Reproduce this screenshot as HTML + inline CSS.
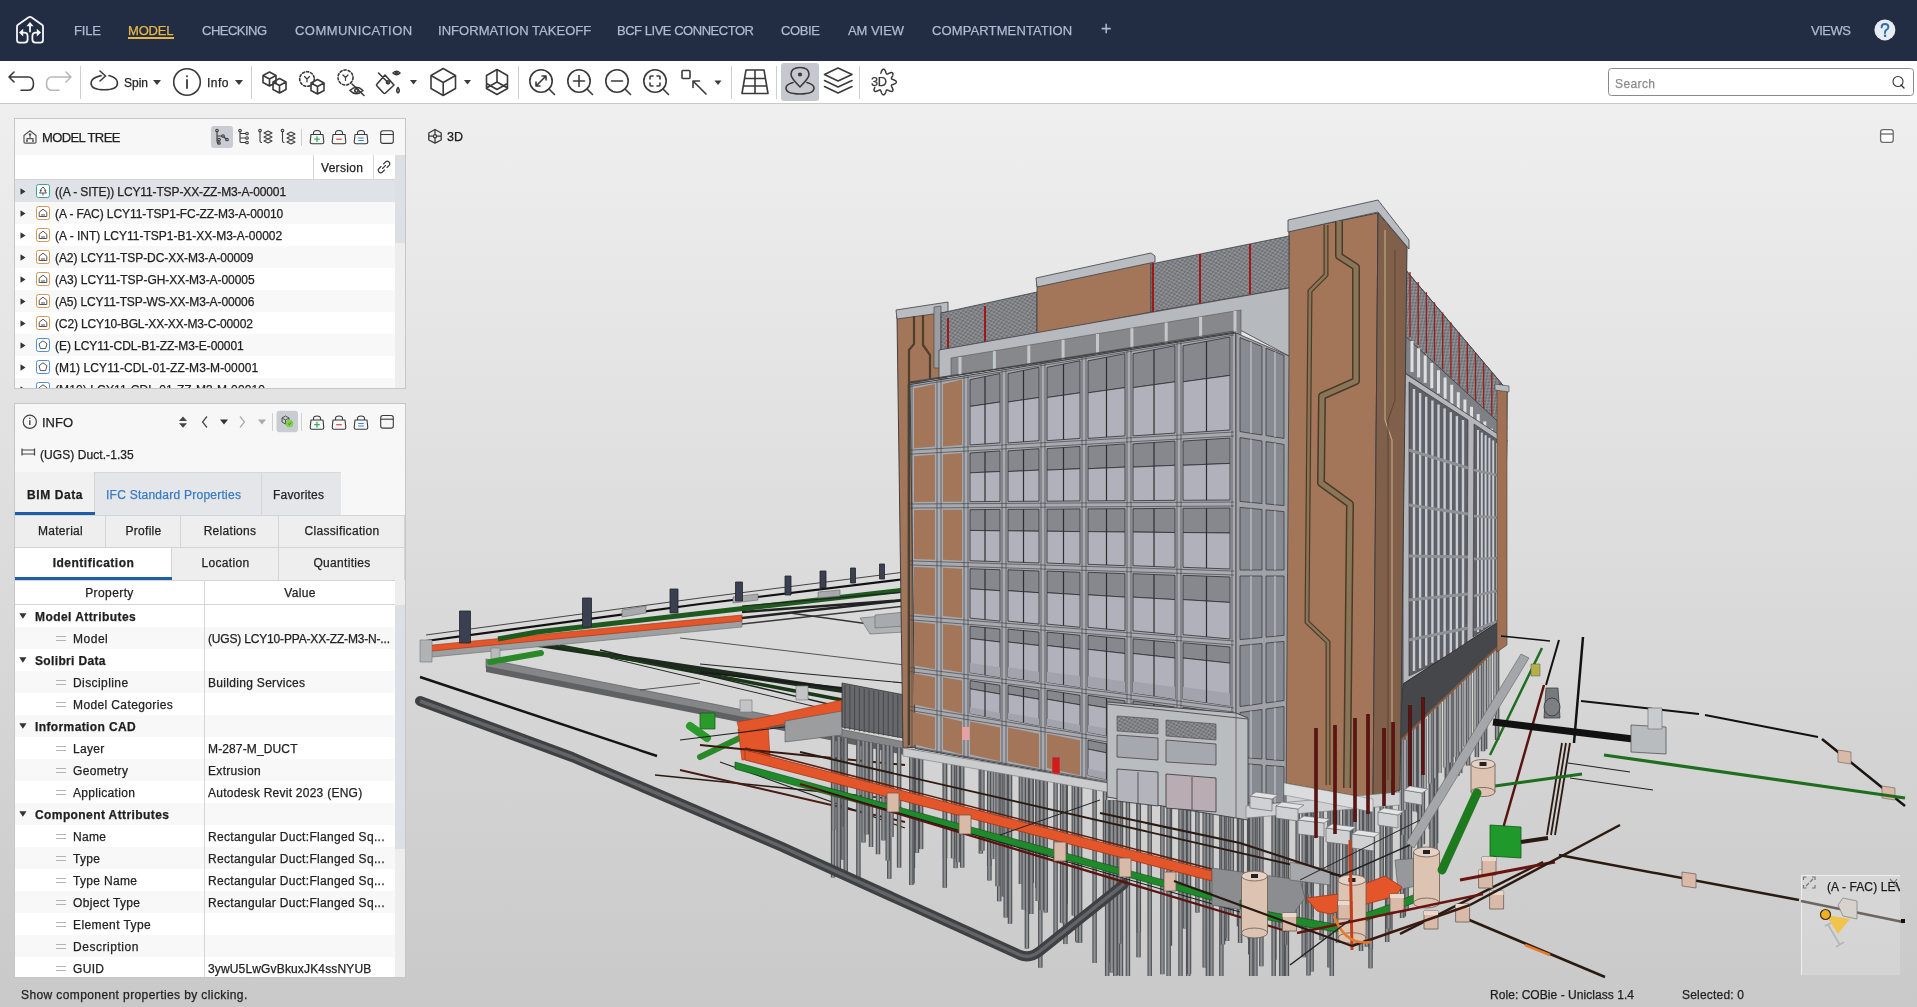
<!DOCTYPE html>
<html><head><meta charset="utf-8">
<style>
*{margin:0;padding:0;box-sizing:border-box}
html,body{width:1917px;height:1007px;overflow:hidden}
body{position:relative;font-family:"Liberation Sans",sans-serif;color:#222;background:linear-gradient(#efefef 104px,#cacaca 984px,#c9c9c9 1007px)}
.a{position:absolute}
.t{position:absolute;white-space:pre;line-height:1}
#top{left:0;top:0;width:1917px;height:61px;background:#222c42}
.nav{position:absolute;top:24px;font-size:13px;color:#aebbd1;white-space:pre;line-height:1}
#tb{left:0;top:61px;width:1917px;height:43px;background:#fff;border-bottom:1px solid #c9c9c9}
.sep{position:absolute;width:1px;background:#cfcfcf}
svg{position:absolute;overflow:visible}
.ic{fill:none;stroke:#3a3a3a;stroke-width:1.6;stroke-linecap:round;stroke-linejoin:round}
.panel{position:absolute;background:#f7f7f7;border:1px solid #c6c6c6}
.row{position:absolute;left:1px;height:22px;width:380px}
.rt{position:absolute;font-size:12px;white-space:pre;line-height:1;color:#222}
.t,.nav,.rt,svg{will-change:transform}
.t,.nav,.rt{-webkit-text-stroke:0.25px currentColor}
</style></head><body>
<div id="scene" class="a" style="left:0;top:0;width:1917px;height:1007px"><svg style="left:0;top:0" width="1917" height="1007" viewBox="0 0 1917 1007"><defs><pattern id="louv" width="5" height="4" patternUnits="userSpaceOnUse" patternTransform="rotate(-12)"><rect width="5" height="4" fill="#6c6e72"/><path d="M0 0 L5 4 M0 4 L5 0" stroke="#9a9ca0" stroke-width="0.9"/></pattern><pattern id="louvR" width="4" height="5" patternUnits="userSpaceOnUse" patternTransform="rotate(50)"><rect width="4" height="5" fill="#6c6e72"/><path d="M0 0 L4 5 M0 5 L4 0" stroke="#9a9ca0" stroke-width="0.9"/></pattern></defs><line x1="420.0" y1="677.0" x2="657.0" y2="756.0" stroke="#141414" stroke-width="2.4" stroke-linecap="butt" />
<polygon points="486.0,659.0 905.0,742.0 905.0,751.0 486.0,668.0" fill="#858688" stroke="#5e5f61" stroke-width="0.7" stroke-linejoin="round" />
<polygon points="486.0,666.0 905.0,749.0 905.0,755.0 486.0,672.0" fill="#606163" />
<line x1="515.0" y1="641.0" x2="905.0" y2="700.0" stroke="#1d2a1d" stroke-width="5" stroke-linecap="butt" />
<line x1="560.0" y1="646.0" x2="905.0" y2="712.0" stroke="#183818" stroke-width="3.5" stroke-linecap="butt" />
<line x1="600.0" y1="650.0" x2="905.0" y2="722.0" stroke="#222" stroke-width="1.5" stroke-linecap="butt" />
<line x1="610.0" y1="658.0" x2="905.0" y2="728.0" stroke="#2a2a2a" stroke-width="1" stroke-linecap="butt" />
<line x1="700.0" y1="664.0" x2="905.0" y2="683.0" stroke="#222" stroke-width="1.2" stroke-linecap="butt" />
<line x1="700.0" y1="672.0" x2="860.0" y2="690.0" stroke="#1a1a1a" stroke-width="2" stroke-linecap="butt" />
<line x1="640.0" y1="690.0" x2="700.0" y2="683.0" stroke="#333" stroke-width="0.8" stroke-linecap="butt" />
<line x1="680.0" y1="638.0" x2="905.0" y2="665.0" stroke="#333" stroke-width="0.8" stroke-linecap="butt" />
<polygon points="422.0,651.0 742.0,621.0 742.0,627.0 422.0,658.0" fill="#9d9fa1" stroke="#6a6b6d" stroke-width="0.6" stroke-linejoin="round" />
<polygon points="422.0,646.0 742.0,615.0 742.0,621.0 422.0,652.0" fill="#e4552a" stroke="#9c3518" stroke-width="0.6" stroke-linejoin="round" />
<line x1="742.0" y1="618.0" x2="905.0" y2="600.0" stroke="#222" stroke-width="2.5" stroke-linecap="butt" />
<line x1="742.0" y1="624.0" x2="905.0" y2="606.0" stroke="#3a3a3a" stroke-width="1.5" stroke-linecap="butt" />
<line x1="790.0" y1="613.0" x2="905.0" y2="629.0" stroke="#333" stroke-width="1.5" stroke-linecap="butt" />
<polygon points="860.0,618.0 905.0,614.0 905.0,632.0 870.0,634.0" fill="#b0b2b4" stroke="#666" stroke-width="0.6" stroke-linejoin="round" />
<path d="M498.0 639.0 L537.0 632.0 L730.0 610.0 L905.0 590.0" stroke="#1e5a1e" stroke-width="5" fill="none" stroke-linejoin="round" />
<path d="M426.0 641.0 L700.0 604.0 L905.0 579.0" stroke="#111" stroke-width="2.2" fill="none" stroke-linejoin="round" />
<path d="M426.0 635.0 L700.0 598.0 L905.0 572.0" stroke="#333" stroke-width="0.9" fill="none" stroke-linejoin="round" />
<line x1="742.0" y1="612.0" x2="905.0" y2="600.0" stroke="#222" stroke-width="2.5" stroke-linecap="butt" />
<line x1="742.0" y1="606.0" x2="905.0" y2="592.0" stroke="#222" stroke-width="1.2" stroke-linecap="butt" />
<polygon points="622.0,610.0 646.0,606.0 646.0,613.0 622.0,617.0" fill="#a8aaad" stroke="#666" stroke-width="0.6" stroke-linejoin="round" />
<polygon points="733.0,597.0 758.0,594.0 758.0,600.0 733.0,603.0" fill="#a8aaad" stroke="#666" stroke-width="0.6" stroke-linejoin="round" />
<polygon points="818.0,592.0 840.0,590.0 840.0,596.0 818.0,598.0" fill="#a8aaad" stroke="#666" stroke-width="0.6" stroke-linejoin="round" />
<polygon points="420.0,640.0 432.0,640.0 432.0,662.0 420.0,662.0" fill="#b0b2b4" stroke="#777" stroke-width="0.6" stroke-linejoin="round" />
<polygon points="491.0,648.0 500.0,648.0 500.0,664.0 491.0,664.0" fill="#b8babc" stroke="#777" stroke-width="0.6" stroke-linejoin="round" />
<path d="M490 662 L541 653" stroke="#2a8a2a" stroke-width="6" fill="none" stroke-linejoin="round" stroke-linecap="round"/>
<polygon points="875.0,615.0 905.0,612.0 905.0,626.0 875.0,628.0" fill="#a8aaad" stroke="#666" stroke-width="0.6" stroke-linejoin="round" />
<polygon points="459.5,611.0 470.5,611.0 470.5,643.0 459.5,643.0" fill="#3b4051" stroke="#22242c" stroke-width="0.8" stroke-linejoin="round" />
<polygon points="582.5,598.0 591.5,598.0 591.5,627.0 582.5,627.0" fill="#3b4051" stroke="#22242c" stroke-width="0.8" stroke-linejoin="round" />
<polygon points="670.0,589.0 678.0,589.0 678.0,613.0 670.0,613.0" fill="#3b4051" stroke="#22242c" stroke-width="0.8" stroke-linejoin="round" />
<polygon points="735.5,582.0 742.5,582.0 742.5,601.0 735.5,601.0" fill="#3b4051" stroke="#22242c" stroke-width="0.8" stroke-linejoin="round" />
<polygon points="785.0,576.0 791.0,576.0 791.0,595.0 785.0,595.0" fill="#3b4051" stroke="#22242c" stroke-width="0.8" stroke-linejoin="round" />
<polygon points="820.0,571.0 826.0,571.0 826.0,588.0 820.0,588.0" fill="#3b4051" stroke="#22242c" stroke-width="0.8" stroke-linejoin="round" />
<polygon points="850.5,568.0 855.5,568.0 855.5,583.0 850.5,583.0" fill="#3b4051" stroke="#22242c" stroke-width="0.8" stroke-linejoin="round" />
<polygon points="879.5,564.0 884.5,564.0 884.5,579.0 879.5,579.0" fill="#3b4051" stroke="#22242c" stroke-width="0.8" stroke-linejoin="round" />
<polygon points="700.0,713.0 715.0,713.0 715.0,729.0 700.0,729.0" fill="#2a9a2a" stroke="#145514" stroke-width="0.7" stroke-linejoin="round" />
<path d="M690 726 L707 738" stroke="#2a9a2a" stroke-width="8" fill="none" stroke-linejoin="round" stroke-linecap="round"/>
<path d="M700 757 L746 735" stroke="#2a8a2a" stroke-width="6" fill="none" stroke-linejoin="round" stroke-linecap="round"/>
<polygon points="738.0,729.0 768.0,724.0 770.0,757.0 742.0,760.0" fill="#e4552a" stroke="#9c3518" stroke-width="0.6" stroke-linejoin="round" />
<polygon points="737.0,722.0 770.0,716.0 842.0,700.0 842.0,712.0 770.0,727.0 740.0,733.0" fill="#e4552a" stroke="#9c3518" stroke-width="0.6" stroke-linejoin="round" />
<line x1="680.0" y1="740.0" x2="905.0" y2="712.0" stroke="#222" stroke-width="1.2" stroke-linecap="butt" />
<line x1="655.0" y1="775.0" x2="905.0" y2="800.0" stroke="#2a1a14" stroke-width="1.5" stroke-linecap="butt" />
<line x1="680.0" y1="770.0" x2="905.0" y2="822.0" stroke="#4a1a14" stroke-width="1.8" stroke-linecap="butt" />
<line x1="720.0" y1="762.0" x2="905.0" y2="828.0" stroke="#222" stroke-width="1.2" stroke-linecap="butt" />
<line x1="700.0" y1="745.0" x2="905.0" y2="765.0" stroke="#3a1a10" stroke-width="2" stroke-linecap="butt" />
<polygon points="785.0,721.0 842.0,711.0 842.0,735.0 785.0,742.0" fill="#9c9d9f" stroke="#555" stroke-width="0.6" stroke-linejoin="round" />
<polygon points="796.0,686.0 808.0,686.0 808.0,700.0 796.0,700.0" fill="#c2c4c6" stroke="#777" stroke-width="0.6" stroke-linejoin="round" />
<polygon points="740.0,700.0 752.0,700.0 752.0,712.0 740.0,712.0" fill="#c2c4c6" stroke="#777" stroke-width="0.6" stroke-linejoin="round" />
<polygon points="842.0,683.0 915.0,697.0 915.0,740.0 842.0,727.0" fill="#66686c" stroke="#333" stroke-width="0.8" stroke-linejoin="round" />
<line x1="845.0" y1="685.0" x2="845.0" y2="729.0" stroke="#45474b" stroke-width="1" stroke-linecap="butt" />
<line x1="849.8" y1="685.9" x2="849.8" y2="729.8" stroke="#45474b" stroke-width="1" stroke-linecap="butt" />
<line x1="854.6" y1="686.8" x2="854.6" y2="730.6" stroke="#45474b" stroke-width="1" stroke-linecap="butt" />
<line x1="859.4" y1="687.7" x2="859.4" y2="731.4" stroke="#45474b" stroke-width="1" stroke-linecap="butt" />
<line x1="864.2" y1="688.6" x2="864.2" y2="732.2" stroke="#45474b" stroke-width="1" stroke-linecap="butt" />
<line x1="869.0" y1="689.5" x2="869.0" y2="733.0" stroke="#45474b" stroke-width="1" stroke-linecap="butt" />
<line x1="873.8" y1="690.4" x2="873.8" y2="733.8" stroke="#45474b" stroke-width="1" stroke-linecap="butt" />
<line x1="878.6" y1="691.3" x2="878.6" y2="734.6" stroke="#45474b" stroke-width="1" stroke-linecap="butt" />
<line x1="883.4" y1="692.2" x2="883.4" y2="735.4" stroke="#45474b" stroke-width="1" stroke-linecap="butt" />
<line x1="888.2" y1="693.1" x2="888.2" y2="736.2" stroke="#45474b" stroke-width="1" stroke-linecap="butt" />
<line x1="893.0" y1="694.0" x2="893.0" y2="737.0" stroke="#45474b" stroke-width="1" stroke-linecap="butt" />
<line x1="897.8" y1="694.9" x2="897.8" y2="737.8" stroke="#45474b" stroke-width="1" stroke-linecap="butt" />
<line x1="902.6" y1="695.8" x2="902.6" y2="738.6" stroke="#45474b" stroke-width="1" stroke-linecap="butt" />
<line x1="907.4" y1="696.7" x2="907.4" y2="739.4" stroke="#45474b" stroke-width="1" stroke-linecap="butt" />
<line x1="912.2" y1="697.6" x2="912.2" y2="740.2" stroke="#45474b" stroke-width="1" stroke-linecap="butt" />
<line x1="989.4" y1="762.8" x2="989.4" y2="880.5" stroke="#505254" stroke-width="4.5" stroke-linecap="butt" />
<line x1="989.4" y1="762.8" x2="989.4" y2="880.5" stroke="#8e9194" stroke-width="2.2" stroke-linecap="butt" />
<line x1="1077.9" y1="778.0" x2="1077.9" y2="942.4" stroke="#505254" stroke-width="4.5" stroke-linecap="butt" />
<line x1="1077.9" y1="778.0" x2="1077.9" y2="942.4" stroke="#8e9194" stroke-width="2.2" stroke-linecap="butt" />
<line x1="1249.2" y1="802.4" x2="1249.2" y2="918.3" stroke="#505254" stroke-width="4.5" stroke-linecap="butt" />
<line x1="1249.2" y1="802.4" x2="1249.2" y2="918.3" stroke="#8e9194" stroke-width="2.2" stroke-linecap="butt" />
<line x1="838.8" y1="737.0" x2="838.8" y2="872.2" stroke="#505254" stroke-width="4.5" stroke-linecap="butt" />
<line x1="838.8" y1="737.0" x2="838.8" y2="872.2" stroke="#8e9194" stroke-width="2.2" stroke-linecap="butt" />
<line x1="1003.8" y1="765.3" x2="1003.8" y2="896.4" stroke="#505254" stroke-width="4.5" stroke-linecap="butt" />
<line x1="1003.8" y1="765.3" x2="1003.8" y2="896.4" stroke="#8e9194" stroke-width="2.2" stroke-linecap="butt" />
<line x1="1497.1" y1="650.0" x2="1497.1" y2="740.0" stroke="#505254" stroke-width="4.5" stroke-linecap="butt" />
<line x1="1497.1" y1="650.0" x2="1497.1" y2="740.0" stroke="#8e9194" stroke-width="2.2" stroke-linecap="butt" />
<line x1="1390.4" y1="804.8" x2="1390.4" y2="932.5" stroke="#505254" stroke-width="4.5" stroke-linecap="butt" />
<line x1="1390.4" y1="804.8" x2="1390.4" y2="932.5" stroke="#8e9194" stroke-width="2.2" stroke-linecap="butt" />
<line x1="1258.2" y1="802.6" x2="1258.2" y2="926.1" stroke="#505254" stroke-width="4.5" stroke-linecap="butt" />
<line x1="1258.2" y1="802.6" x2="1258.2" y2="926.1" stroke="#8e9194" stroke-width="2.2" stroke-linecap="butt" />
<line x1="1255.4" y1="802.5" x2="1255.4" y2="976.0" stroke="#505254" stroke-width="4.5" stroke-linecap="butt" />
<line x1="1255.4" y1="802.5" x2="1255.4" y2="976.0" stroke="#8e9194" stroke-width="2.2" stroke-linecap="butt" />
<line x1="1180.5" y1="801.3" x2="1180.5" y2="976.0" stroke="#505254" stroke-width="4.5" stroke-linecap="butt" />
<line x1="1180.5" y1="801.3" x2="1180.5" y2="976.0" stroke="#8e9194" stroke-width="2.2" stroke-linecap="butt" />
<line x1="1279.8" y1="802.9" x2="1279.8" y2="918.7" stroke="#505254" stroke-width="4.5" stroke-linecap="butt" />
<line x1="1279.8" y1="802.9" x2="1279.8" y2="918.7" stroke="#8e9194" stroke-width="2.2" stroke-linecap="butt" />
<line x1="1338.0" y1="803.9" x2="1338.0" y2="943.1" stroke="#505254" stroke-width="4.5" stroke-linecap="butt" />
<line x1="1338.0" y1="803.9" x2="1338.0" y2="943.1" stroke="#8e9194" stroke-width="2.2" stroke-linecap="butt" />
<line x1="1031.8" y1="770.1" x2="1031.8" y2="882.9" stroke="#505254" stroke-width="4.5" stroke-linecap="butt" />
<line x1="1031.8" y1="770.1" x2="1031.8" y2="882.9" stroke="#8e9194" stroke-width="2.2" stroke-linecap="butt" />
<line x1="1409.9" y1="731.5" x2="1409.9" y2="858.8" stroke="#505254" stroke-width="4.5" stroke-linecap="butt" />
<line x1="1409.9" y1="731.5" x2="1409.9" y2="858.8" stroke="#8e9194" stroke-width="2.2" stroke-linecap="butt" />
<line x1="1311.6" y1="803.5" x2="1311.6" y2="971.4" stroke="#505254" stroke-width="4.5" stroke-linecap="butt" />
<line x1="1311.6" y1="803.5" x2="1311.6" y2="971.4" stroke="#8e9194" stroke-width="2.2" stroke-linecap="butt" />
<line x1="1308.5" y1="803.4" x2="1308.5" y2="975.5" stroke="#505254" stroke-width="4.5" stroke-linecap="butt" />
<line x1="1308.5" y1="803.4" x2="1308.5" y2="975.5" stroke="#8e9194" stroke-width="2.2" stroke-linecap="butt" />
<line x1="1094.6" y1="780.9" x2="1094.6" y2="963.0" stroke="#505254" stroke-width="4.5" stroke-linecap="butt" />
<line x1="1094.6" y1="780.9" x2="1094.6" y2="963.0" stroke="#8e9194" stroke-width="2.2" stroke-linecap="butt" />
<line x1="1127.9" y1="800.4" x2="1127.9" y2="976.0" stroke="#505254" stroke-width="4.5" stroke-linecap="butt" />
<line x1="1127.9" y1="800.4" x2="1127.9" y2="976.0" stroke="#8e9194" stroke-width="2.2" stroke-linecap="butt" />
<line x1="1418.8" y1="722.9" x2="1418.8" y2="812.7" stroke="#505254" stroke-width="4.5" stroke-linecap="butt" />
<line x1="1418.8" y1="722.9" x2="1418.8" y2="812.7" stroke="#8e9194" stroke-width="2.2" stroke-linecap="butt" />
<line x1="921.1" y1="751.1" x2="921.1" y2="849.1" stroke="#505254" stroke-width="4.5" stroke-linecap="butt" />
<line x1="921.1" y1="751.1" x2="921.1" y2="849.1" stroke="#8e9194" stroke-width="2.2" stroke-linecap="butt" />
<line x1="1476.9" y1="667.1" x2="1476.9" y2="757.1" stroke="#505254" stroke-width="4.5" stroke-linecap="butt" />
<line x1="1476.9" y1="667.1" x2="1476.9" y2="757.1" stroke="#8e9194" stroke-width="2.2" stroke-linecap="butt" />
<line x1="1249.9" y1="802.4" x2="1249.9" y2="939.5" stroke="#505254" stroke-width="4.5" stroke-linecap="butt" />
<line x1="1249.9" y1="802.4" x2="1249.9" y2="939.5" stroke="#8e9194" stroke-width="2.2" stroke-linecap="butt" />
<line x1="1169.9" y1="801.1" x2="1169.9" y2="945.8" stroke="#505254" stroke-width="4.5" stroke-linecap="butt" />
<line x1="1169.9" y1="801.1" x2="1169.9" y2="945.8" stroke="#8e9194" stroke-width="2.2" stroke-linecap="butt" />
<line x1="1065.1" y1="775.8" x2="1065.1" y2="938.5" stroke="#505254" stroke-width="4.5" stroke-linecap="butt" />
<line x1="1065.1" y1="775.8" x2="1065.1" y2="938.5" stroke="#8e9194" stroke-width="2.2" stroke-linecap="butt" />
<line x1="1221.4" y1="802.0" x2="1221.4" y2="976.0" stroke="#505254" stroke-width="4.5" stroke-linecap="butt" />
<line x1="1221.4" y1="802.0" x2="1221.4" y2="976.0" stroke="#8e9194" stroke-width="2.2" stroke-linecap="butt" />
<line x1="1286.9" y1="803.1" x2="1286.9" y2="976.0" stroke="#505254" stroke-width="4.5" stroke-linecap="butt" />
<line x1="1286.9" y1="803.1" x2="1286.9" y2="976.0" stroke="#8e9194" stroke-width="2.2" stroke-linecap="butt" />
<line x1="1403.8" y1="737.4" x2="1403.8" y2="916.5" stroke="#505254" stroke-width="4.5" stroke-linecap="butt" />
<line x1="1403.8" y1="737.4" x2="1403.8" y2="916.5" stroke="#8e9194" stroke-width="2.2" stroke-linecap="butt" />
<line x1="1279.8" y1="802.9" x2="1279.8" y2="927.6" stroke="#505254" stroke-width="4.5" stroke-linecap="butt" />
<line x1="1279.8" y1="802.9" x2="1279.8" y2="927.6" stroke="#8e9194" stroke-width="2.2" stroke-linecap="butt" />
<line x1="1406.6" y1="734.7" x2="1406.6" y2="911.1" stroke="#505254" stroke-width="4.5" stroke-linecap="butt" />
<line x1="1406.6" y1="734.7" x2="1406.6" y2="911.1" stroke="#8e9194" stroke-width="2.2" stroke-linecap="butt" />
<line x1="1436.1" y1="706.3" x2="1436.1" y2="843.2" stroke="#505254" stroke-width="4.5" stroke-linecap="butt" />
<line x1="1436.1" y1="706.3" x2="1436.1" y2="843.2" stroke="#8e9194" stroke-width="2.2" stroke-linecap="butt" />
<line x1="1308.3" y1="803.4" x2="1308.3" y2="904.5" stroke="#505254" stroke-width="4.5" stroke-linecap="butt" />
<line x1="1308.3" y1="803.4" x2="1308.3" y2="904.5" stroke="#8e9194" stroke-width="2.2" stroke-linecap="butt" />
<line x1="1387.2" y1="804.8" x2="1387.2" y2="942.1" stroke="#505254" stroke-width="4.5" stroke-linecap="butt" />
<line x1="1387.2" y1="804.8" x2="1387.2" y2="942.1" stroke="#8e9194" stroke-width="2.2" stroke-linecap="butt" />
<line x1="1020.9" y1="768.2" x2="1020.9" y2="883.9" stroke="#505254" stroke-width="4.5" stroke-linecap="butt" />
<line x1="1020.9" y1="768.2" x2="1020.9" y2="883.9" stroke="#8e9194" stroke-width="2.2" stroke-linecap="butt" />
<line x1="1402.1" y1="739.0" x2="1402.1" y2="918.0" stroke="#505254" stroke-width="4.5" stroke-linecap="butt" />
<line x1="1402.1" y1="739.0" x2="1402.1" y2="918.0" stroke="#8e9194" stroke-width="2.2" stroke-linecap="butt" />
<line x1="889.3" y1="745.7" x2="889.3" y2="878.7" stroke="#505254" stroke-width="4.5" stroke-linecap="butt" />
<line x1="889.3" y1="745.7" x2="889.3" y2="878.7" stroke="#8e9194" stroke-width="2.2" stroke-linecap="butt" />
<line x1="1105.0" y1="782.7" x2="1105.0" y2="906.2" stroke="#505254" stroke-width="4.5" stroke-linecap="butt" />
<line x1="1105.0" y1="782.7" x2="1105.0" y2="906.2" stroke="#8e9194" stroke-width="2.2" stroke-linecap="butt" />
<line x1="1026.9" y1="769.3" x2="1026.9" y2="948.4" stroke="#505254" stroke-width="4.5" stroke-linecap="butt" />
<line x1="1026.9" y1="769.3" x2="1026.9" y2="948.4" stroke="#8e9194" stroke-width="2.2" stroke-linecap="butt" />
<line x1="1414.8" y1="726.9" x2="1414.8" y2="811.3" stroke="#505254" stroke-width="4.5" stroke-linecap="butt" />
<line x1="1414.8" y1="726.9" x2="1414.8" y2="811.3" stroke="#8e9194" stroke-width="2.2" stroke-linecap="butt" />
<line x1="1241.7" y1="802.3" x2="1241.7" y2="916.3" stroke="#505254" stroke-width="4.5" stroke-linecap="butt" />
<line x1="1241.7" y1="802.3" x2="1241.7" y2="916.3" stroke="#8e9194" stroke-width="2.2" stroke-linecap="butt" />
<line x1="1311.4" y1="803.5" x2="1311.4" y2="916.6" stroke="#505254" stroke-width="4.5" stroke-linecap="butt" />
<line x1="1311.4" y1="803.5" x2="1311.4" y2="916.6" stroke="#8e9194" stroke-width="2.2" stroke-linecap="butt" />
<line x1="1420.2" y1="721.6" x2="1420.2" y2="899.7" stroke="#505254" stroke-width="4.5" stroke-linecap="butt" />
<line x1="1420.2" y1="721.6" x2="1420.2" y2="899.7" stroke="#8e9194" stroke-width="2.2" stroke-linecap="butt" />
<line x1="1168.6" y1="801.1" x2="1168.6" y2="976.0" stroke="#505254" stroke-width="4.5" stroke-linecap="butt" />
<line x1="1168.6" y1="801.1" x2="1168.6" y2="976.0" stroke="#8e9194" stroke-width="2.2" stroke-linecap="butt" />
<line x1="1037.5" y1="771.1" x2="1037.5" y2="888.0" stroke="#505254" stroke-width="4.5" stroke-linecap="butt" />
<line x1="1037.5" y1="771.1" x2="1037.5" y2="888.0" stroke="#8e9194" stroke-width="2.2" stroke-linecap="butt" />
<line x1="1231.8" y1="802.1" x2="1231.8" y2="915.0" stroke="#505254" stroke-width="4.5" stroke-linecap="butt" />
<line x1="1231.8" y1="802.1" x2="1231.8" y2="915.0" stroke="#8e9194" stroke-width="2.2" stroke-linecap="butt" />
<line x1="962.2" y1="758.2" x2="962.2" y2="867.6" stroke="#505254" stroke-width="4.5" stroke-linecap="butt" />
<line x1="962.2" y1="758.2" x2="962.2" y2="867.6" stroke="#8e9194" stroke-width="2.2" stroke-linecap="butt" />
<line x1="1239.0" y1="802.3" x2="1239.0" y2="926.3" stroke="#505254" stroke-width="4.5" stroke-linecap="butt" />
<line x1="1239.0" y1="802.3" x2="1239.0" y2="926.3" stroke="#8e9194" stroke-width="2.2" stroke-linecap="butt" />
<line x1="858.4" y1="740.4" x2="858.4" y2="877.4" stroke="#505254" stroke-width="4.5" stroke-linecap="butt" />
<line x1="858.4" y1="740.4" x2="858.4" y2="877.4" stroke="#8e9194" stroke-width="2.2" stroke-linecap="butt" />
<line x1="1040.3" y1="771.6" x2="1040.3" y2="967.8" stroke="#505254" stroke-width="4.5" stroke-linecap="butt" />
<line x1="1040.3" y1="771.6" x2="1040.3" y2="967.8" stroke="#8e9194" stroke-width="2.2" stroke-linecap="butt" />
<line x1="1430.8" y1="711.5" x2="1430.8" y2="829.2" stroke="#505254" stroke-width="4.5" stroke-linecap="butt" />
<line x1="1430.8" y1="711.5" x2="1430.8" y2="829.2" stroke="#8e9194" stroke-width="2.2" stroke-linecap="butt" />
<line x1="1138.5" y1="800.5" x2="1138.5" y2="957.3" stroke="#505254" stroke-width="4.5" stroke-linecap="butt" />
<line x1="1138.5" y1="800.5" x2="1138.5" y2="957.3" stroke="#8e9194" stroke-width="2.2" stroke-linecap="butt" />
<line x1="1261.4" y1="802.6" x2="1261.4" y2="966.2" stroke="#505254" stroke-width="4.5" stroke-linecap="butt" />
<line x1="1261.4" y1="802.6" x2="1261.4" y2="966.2" stroke="#8e9194" stroke-width="2.2" stroke-linecap="butt" />
<line x1="1204.7" y1="801.7" x2="1204.7" y2="967.5" stroke="#505254" stroke-width="4.5" stroke-linecap="butt" />
<line x1="1204.7" y1="801.7" x2="1204.7" y2="967.5" stroke="#8e9194" stroke-width="2.2" stroke-linecap="butt" />
<line x1="1460.2" y1="683.1" x2="1460.2" y2="773.1" stroke="#505254" stroke-width="4.5" stroke-linecap="butt" />
<line x1="1460.2" y1="683.1" x2="1460.2" y2="773.1" stroke="#8e9194" stroke-width="2.2" stroke-linecap="butt" />
<line x1="1118.9" y1="800.2" x2="1118.9" y2="975.0" stroke="#505254" stroke-width="4.5" stroke-linecap="butt" />
<line x1="1118.9" y1="800.2" x2="1118.9" y2="975.0" stroke="#8e9194" stroke-width="2.2" stroke-linecap="butt" />
<line x1="989.2" y1="762.8" x2="989.2" y2="865.9" stroke="#505254" stroke-width="4.5" stroke-linecap="butt" />
<line x1="989.2" y1="762.8" x2="989.2" y2="865.9" stroke="#8e9194" stroke-width="2.2" stroke-linecap="butt" />
<line x1="1485.1" y1="659.2" x2="1485.1" y2="749.2" stroke="#505254" stroke-width="4.5" stroke-linecap="butt" />
<line x1="1485.1" y1="659.2" x2="1485.1" y2="749.2" stroke="#8e9194" stroke-width="2.2" stroke-linecap="butt" />
<line x1="1197.4" y1="801.5" x2="1197.4" y2="912.6" stroke="#505254" stroke-width="4.5" stroke-linecap="butt" />
<line x1="1197.4" y1="801.5" x2="1197.4" y2="912.6" stroke="#8e9194" stroke-width="2.2" stroke-linecap="butt" />
<line x1="1108.2" y1="800.0" x2="1108.2" y2="962.2" stroke="#505254" stroke-width="4.5" stroke-linecap="butt" />
<line x1="1108.2" y1="800.0" x2="1108.2" y2="962.2" stroke="#8e9194" stroke-width="2.2" stroke-linecap="butt" />
<line x1="843.4" y1="737.8" x2="843.4" y2="859.7" stroke="#505254" stroke-width="4.5" stroke-linecap="butt" />
<line x1="843.4" y1="737.8" x2="843.4" y2="859.7" stroke="#8e9194" stroke-width="2.2" stroke-linecap="butt" />
<line x1="1253.6" y1="802.5" x2="1253.6" y2="917.9" stroke="#505254" stroke-width="4.5" stroke-linecap="butt" />
<line x1="1253.6" y1="802.5" x2="1253.6" y2="917.9" stroke="#8e9194" stroke-width="2.2" stroke-linecap="butt" />
<line x1="1250.3" y1="802.4" x2="1250.3" y2="954.4" stroke="#505254" stroke-width="4.5" stroke-linecap="butt" />
<line x1="1250.3" y1="802.4" x2="1250.3" y2="954.4" stroke="#8e9194" stroke-width="2.2" stroke-linecap="butt" />
<line x1="1285.1" y1="803.0" x2="1285.1" y2="944.8" stroke="#505254" stroke-width="4.5" stroke-linecap="butt" />
<line x1="1285.1" y1="803.0" x2="1285.1" y2="944.8" stroke="#8e9194" stroke-width="2.2" stroke-linecap="butt" />
<line x1="1303.7" y1="803.4" x2="1303.7" y2="957.2" stroke="#505254" stroke-width="4.5" stroke-linecap="butt" />
<line x1="1303.7" y1="803.4" x2="1303.7" y2="957.2" stroke="#8e9194" stroke-width="2.2" stroke-linecap="butt" />
<line x1="844.9" y1="738.0" x2="844.9" y2="826.7" stroke="#505254" stroke-width="4.5" stroke-linecap="butt" />
<line x1="844.9" y1="738.0" x2="844.9" y2="826.7" stroke="#8e9194" stroke-width="2.2" stroke-linecap="butt" />
<line x1="1282.9" y1="803.0" x2="1282.9" y2="976.0" stroke="#505254" stroke-width="4.5" stroke-linecap="butt" />
<line x1="1282.9" y1="803.0" x2="1282.9" y2="976.0" stroke="#8e9194" stroke-width="2.2" stroke-linecap="butt" />
<line x1="998.3" y1="764.3" x2="998.3" y2="876.7" stroke="#505254" stroke-width="4.5" stroke-linecap="butt" />
<line x1="998.3" y1="764.3" x2="998.3" y2="876.7" stroke="#8e9194" stroke-width="2.2" stroke-linecap="butt" />
<line x1="1227.1" y1="802.0" x2="1227.1" y2="940.9" stroke="#505254" stroke-width="4.5" stroke-linecap="butt" />
<line x1="1227.1" y1="802.0" x2="1227.1" y2="940.9" stroke="#8e9194" stroke-width="2.2" stroke-linecap="butt" />
<line x1="1073.8" y1="777.3" x2="1073.8" y2="915.5" stroke="#505254" stroke-width="4.5" stroke-linecap="butt" />
<line x1="1073.8" y1="777.3" x2="1073.8" y2="915.5" stroke="#8e9194" stroke-width="2.2" stroke-linecap="butt" />
<line x1="1077.3" y1="777.9" x2="1077.3" y2="941.5" stroke="#505254" stroke-width="4.5" stroke-linecap="butt" />
<line x1="1077.3" y1="777.9" x2="1077.3" y2="941.5" stroke="#8e9194" stroke-width="2.2" stroke-linecap="butt" />
<line x1="1031.3" y1="770.0" x2="1031.3" y2="914.0" stroke="#505254" stroke-width="4.5" stroke-linecap="butt" />
<line x1="1031.3" y1="770.0" x2="1031.3" y2="914.0" stroke="#8e9194" stroke-width="2.2" stroke-linecap="butt" />
<line x1="1347.4" y1="804.1" x2="1347.4" y2="886.8" stroke="#505254" stroke-width="4.5" stroke-linecap="butt" />
<line x1="1347.4" y1="804.1" x2="1347.4" y2="886.8" stroke="#8e9194" stroke-width="2.2" stroke-linecap="butt" />
<line x1="1211.4" y1="801.8" x2="1211.4" y2="976.0" stroke="#505254" stroke-width="4.5" stroke-linecap="butt" />
<line x1="1211.4" y1="801.8" x2="1211.4" y2="976.0" stroke="#8e9194" stroke-width="2.2" stroke-linecap="butt" />
<line x1="1037.7" y1="771.1" x2="1037.7" y2="901.1" stroke="#505254" stroke-width="4.5" stroke-linecap="butt" />
<line x1="1037.7" y1="771.1" x2="1037.7" y2="901.1" stroke="#8e9194" stroke-width="2.2" stroke-linecap="butt" />
<line x1="1368.6" y1="804.5" x2="1368.6" y2="908.3" stroke="#505254" stroke-width="4.5" stroke-linecap="butt" />
<line x1="1368.6" y1="804.5" x2="1368.6" y2="908.3" stroke="#8e9194" stroke-width="2.2" stroke-linecap="butt" />
<line x1="955.6" y1="757.0" x2="955.6" y2="868.1" stroke="#505254" stroke-width="4.5" stroke-linecap="butt" />
<line x1="955.6" y1="757.0" x2="955.6" y2="868.1" stroke="#8e9194" stroke-width="2.2" stroke-linecap="butt" />
<line x1="1297.7" y1="803.3" x2="1297.7" y2="922.4" stroke="#505254" stroke-width="4.5" stroke-linecap="butt" />
<line x1="1297.7" y1="803.3" x2="1297.7" y2="922.4" stroke="#8e9194" stroke-width="2.2" stroke-linecap="butt" />
<line x1="1045.7" y1="772.5" x2="1045.7" y2="912.5" stroke="#505254" stroke-width="4.5" stroke-linecap="butt" />
<line x1="1045.7" y1="772.5" x2="1045.7" y2="912.5" stroke="#8e9194" stroke-width="2.2" stroke-linecap="butt" />
<line x1="1388.5" y1="804.8" x2="1388.5" y2="928.6" stroke="#505254" stroke-width="4.5" stroke-linecap="butt" />
<line x1="1388.5" y1="804.8" x2="1388.5" y2="928.6" stroke="#8e9194" stroke-width="2.2" stroke-linecap="butt" />
<line x1="1403.2" y1="738.0" x2="1403.2" y2="834.9" stroke="#505254" stroke-width="4.5" stroke-linecap="butt" />
<line x1="1403.2" y1="738.0" x2="1403.2" y2="834.9" stroke="#8e9194" stroke-width="2.2" stroke-linecap="butt" />
<line x1="1055.6" y1="774.2" x2="1055.6" y2="942.7" stroke="#505254" stroke-width="4.5" stroke-linecap="butt" />
<line x1="1055.6" y1="774.2" x2="1055.6" y2="942.7" stroke="#8e9194" stroke-width="2.2" stroke-linecap="butt" />
<line x1="1422.9" y1="719.0" x2="1422.9" y2="844.1" stroke="#505254" stroke-width="4.5" stroke-linecap="butt" />
<line x1="1422.9" y1="719.0" x2="1422.9" y2="844.1" stroke="#8e9194" stroke-width="2.2" stroke-linecap="butt" />
<line x1="980.8" y1="761.3" x2="980.8" y2="853.6" stroke="#505254" stroke-width="4.5" stroke-linecap="butt" />
<line x1="980.8" y1="761.3" x2="980.8" y2="853.6" stroke="#8e9194" stroke-width="2.2" stroke-linecap="butt" />
<line x1="1184.9" y1="801.3" x2="1184.9" y2="928.5" stroke="#505254" stroke-width="4.5" stroke-linecap="butt" />
<line x1="1184.9" y1="801.3" x2="1184.9" y2="928.5" stroke="#8e9194" stroke-width="2.2" stroke-linecap="butt" />
<line x1="1370.5" y1="804.5" x2="1370.5" y2="968.3" stroke="#505254" stroke-width="4.5" stroke-linecap="butt" />
<line x1="1370.5" y1="804.5" x2="1370.5" y2="968.3" stroke="#8e9194" stroke-width="2.2" stroke-linecap="butt" />
<line x1="953.0" y1="756.6" x2="953.0" y2="858.3" stroke="#505254" stroke-width="4.5" stroke-linecap="butt" />
<line x1="953.0" y1="756.6" x2="953.0" y2="858.3" stroke="#8e9194" stroke-width="2.2" stroke-linecap="butt" />
<line x1="1370.8" y1="804.5" x2="1370.8" y2="948.7" stroke="#505254" stroke-width="4.5" stroke-linecap="butt" />
<line x1="1370.8" y1="804.5" x2="1370.8" y2="948.7" stroke="#8e9194" stroke-width="2.2" stroke-linecap="butt" />
<line x1="1370.2" y1="804.5" x2="1370.2" y2="919.0" stroke="#505254" stroke-width="4.5" stroke-linecap="butt" />
<line x1="1370.2" y1="804.5" x2="1370.2" y2="919.0" stroke="#8e9194" stroke-width="2.2" stroke-linecap="butt" />
<line x1="916.9" y1="750.4" x2="916.9" y2="852.9" stroke="#505254" stroke-width="4.5" stroke-linecap="butt" />
<line x1="916.9" y1="750.4" x2="916.9" y2="852.9" stroke="#8e9194" stroke-width="2.2" stroke-linecap="butt" />
<line x1="1361.9" y1="804.3" x2="1361.9" y2="911.5" stroke="#505254" stroke-width="4.5" stroke-linecap="butt" />
<line x1="1361.9" y1="804.3" x2="1361.9" y2="911.5" stroke="#8e9194" stroke-width="2.2" stroke-linecap="butt" />
<line x1="1062.1" y1="775.3" x2="1062.1" y2="922.8" stroke="#505254" stroke-width="4.5" stroke-linecap="butt" />
<line x1="1062.1" y1="775.3" x2="1062.1" y2="922.8" stroke="#8e9194" stroke-width="2.2" stroke-linecap="butt" />
<line x1="1111.2" y1="800.1" x2="1111.2" y2="946.9" stroke="#505254" stroke-width="4.5" stroke-linecap="butt" />
<line x1="1111.2" y1="800.1" x2="1111.2" y2="946.9" stroke="#8e9194" stroke-width="2.2" stroke-linecap="butt" />
<line x1="1446.8" y1="696.0" x2="1446.8" y2="786.0" stroke="#505254" stroke-width="4.5" stroke-linecap="butt" />
<line x1="1446.8" y1="696.0" x2="1446.8" y2="786.0" stroke="#8e9194" stroke-width="2.2" stroke-linecap="butt" />
<line x1="833.1" y1="736.0" x2="833.1" y2="877.6" stroke="#505254" stroke-width="4.5" stroke-linecap="butt" />
<line x1="833.1" y1="736.0" x2="833.1" y2="877.6" stroke="#8e9194" stroke-width="2.2" stroke-linecap="butt" />
<line x1="1419.6" y1="722.2" x2="1419.6" y2="900.9" stroke="#505254" stroke-width="4.5" stroke-linecap="butt" />
<line x1="1419.6" y1="722.2" x2="1419.6" y2="900.9" stroke="#8e9194" stroke-width="2.2" stroke-linecap="butt" />
<line x1="1121.0" y1="800.2" x2="1121.0" y2="976.0" stroke="#505254" stroke-width="4.5" stroke-linecap="butt" />
<line x1="1121.0" y1="800.2" x2="1121.0" y2="976.0" stroke="#8e9194" stroke-width="2.2" stroke-linecap="butt" />
<line x1="1451.3" y1="691.7" x2="1451.3" y2="781.7" stroke="#505254" stroke-width="4.5" stroke-linecap="butt" />
<line x1="1451.3" y1="691.7" x2="1451.3" y2="781.7" stroke="#8e9194" stroke-width="2.2" stroke-linecap="butt" />
<line x1="1329.5" y1="803.8" x2="1329.5" y2="967.5" stroke="#505254" stroke-width="4.5" stroke-linecap="butt" />
<line x1="1329.5" y1="803.8" x2="1329.5" y2="967.5" stroke="#8e9194" stroke-width="2.2" stroke-linecap="butt" />
<line x1="1274.2" y1="802.9" x2="1274.2" y2="959.6" stroke="#505254" stroke-width="4.5" stroke-linecap="butt" />
<line x1="1274.2" y1="802.9" x2="1274.2" y2="959.6" stroke="#8e9194" stroke-width="2.2" stroke-linecap="butt" />
<line x1="1023.7" y1="768.7" x2="1023.7" y2="909.4" stroke="#505254" stroke-width="4.5" stroke-linecap="butt" />
<line x1="1023.7" y1="768.7" x2="1023.7" y2="909.4" stroke="#8e9194" stroke-width="2.2" stroke-linecap="butt" />
<line x1="982.4" y1="761.6" x2="982.4" y2="850.7" stroke="#505254" stroke-width="4.5" stroke-linecap="butt" />
<line x1="982.4" y1="761.6" x2="982.4" y2="850.7" stroke="#8e9194" stroke-width="2.2" stroke-linecap="butt" />
<line x1="1224.4" y1="802.0" x2="1224.4" y2="937.8" stroke="#505254" stroke-width="4.5" stroke-linecap="butt" />
<line x1="1224.4" y1="802.0" x2="1224.4" y2="937.8" stroke="#8e9194" stroke-width="2.2" stroke-linecap="butt" />
<line x1="1372.8" y1="804.5" x2="1372.8" y2="889.0" stroke="#505254" stroke-width="4.5" stroke-linecap="butt" />
<line x1="1372.8" y1="804.5" x2="1372.8" y2="889.0" stroke="#8e9194" stroke-width="2.2" stroke-linecap="butt" />
<line x1="1435.4" y1="707.0" x2="1435.4" y2="856.4" stroke="#505254" stroke-width="4.5" stroke-linecap="butt" />
<line x1="1435.4" y1="707.0" x2="1435.4" y2="856.4" stroke="#8e9194" stroke-width="2.2" stroke-linecap="butt" />
<line x1="1449.0" y1="693.9" x2="1449.0" y2="783.9" stroke="#505254" stroke-width="4.5" stroke-linecap="butt" />
<line x1="1449.0" y1="693.9" x2="1449.0" y2="783.9" stroke="#8e9194" stroke-width="2.2" stroke-linecap="butt" />
<line x1="1432.8" y1="709.5" x2="1432.8" y2="847.2" stroke="#505254" stroke-width="4.5" stroke-linecap="butt" />
<line x1="1432.8" y1="709.5" x2="1432.8" y2="847.2" stroke="#8e9194" stroke-width="2.2" stroke-linecap="butt" />
<line x1="838.8" y1="737.0" x2="838.8" y2="866.7" stroke="#505254" stroke-width="4.5" stroke-linecap="butt" />
<line x1="838.8" y1="737.0" x2="838.8" y2="866.7" stroke="#8e9194" stroke-width="2.2" stroke-linecap="butt" />
<line x1="945.1" y1="755.2" x2="945.1" y2="858.2" stroke="#505254" stroke-width="4.5" stroke-linecap="butt" />
<line x1="945.1" y1="755.2" x2="945.1" y2="858.2" stroke="#8e9194" stroke-width="2.2" stroke-linecap="butt" />
<line x1="1274.1" y1="802.9" x2="1274.1" y2="960.1" stroke="#505254" stroke-width="4.5" stroke-linecap="butt" />
<line x1="1274.1" y1="802.9" x2="1274.1" y2="960.1" stroke="#8e9194" stroke-width="2.2" stroke-linecap="butt" />
<line x1="1107.2" y1="800.0" x2="1107.2" y2="976.0" stroke="#505254" stroke-width="4.5" stroke-linecap="butt" />
<line x1="1107.2" y1="800.0" x2="1107.2" y2="976.0" stroke="#8e9194" stroke-width="2.2" stroke-linecap="butt" />
<line x1="1240.1" y1="802.3" x2="1240.1" y2="943.0" stroke="#505254" stroke-width="4.5" stroke-linecap="butt" />
<line x1="1240.1" y1="802.3" x2="1240.1" y2="943.0" stroke="#8e9194" stroke-width="2.2" stroke-linecap="butt" />
<line x1="999.2" y1="764.5" x2="999.2" y2="901.2" stroke="#505254" stroke-width="4.5" stroke-linecap="butt" />
<line x1="999.2" y1="764.5" x2="999.2" y2="901.2" stroke="#8e9194" stroke-width="2.2" stroke-linecap="butt" />
<line x1="1149.7" y1="800.7" x2="1149.7" y2="976.0" stroke="#505254" stroke-width="4.5" stroke-linecap="butt" />
<line x1="1149.7" y1="800.7" x2="1149.7" y2="976.0" stroke="#8e9194" stroke-width="2.2" stroke-linecap="butt" />
<line x1="1065.7" y1="775.9" x2="1065.7" y2="903.7" stroke="#505254" stroke-width="4.5" stroke-linecap="butt" />
<line x1="1065.7" y1="775.9" x2="1065.7" y2="903.7" stroke="#8e9194" stroke-width="2.2" stroke-linecap="butt" />
<line x1="1188.2" y1="801.4" x2="1188.2" y2="976.0" stroke="#505254" stroke-width="4.5" stroke-linecap="butt" />
<line x1="1188.2" y1="801.4" x2="1188.2" y2="976.0" stroke="#8e9194" stroke-width="2.2" stroke-linecap="butt" />
<line x1="944.8" y1="755.2" x2="944.8" y2="887.7" stroke="#505254" stroke-width="4.5" stroke-linecap="butt" />
<line x1="944.8" y1="755.2" x2="944.8" y2="887.7" stroke="#8e9194" stroke-width="2.2" stroke-linecap="butt" />
<line x1="1447.6" y1="695.3" x2="1447.6" y2="785.3" stroke="#505254" stroke-width="4.5" stroke-linecap="butt" />
<line x1="1447.6" y1="695.3" x2="1447.6" y2="785.3" stroke="#8e9194" stroke-width="2.2" stroke-linecap="butt" />
<line x1="1381.7" y1="804.7" x2="1381.7" y2="885.4" stroke="#505254" stroke-width="4.5" stroke-linecap="butt" />
<line x1="1381.7" y1="804.7" x2="1381.7" y2="885.4" stroke="#8e9194" stroke-width="2.2" stroke-linecap="butt" />
<line x1="1251.2" y1="802.5" x2="1251.2" y2="976.0" stroke="#505254" stroke-width="4.5" stroke-linecap="butt" />
<line x1="1251.2" y1="802.5" x2="1251.2" y2="976.0" stroke="#8e9194" stroke-width="2.2" stroke-linecap="butt" />
<line x1="863.5" y1="741.2" x2="863.5" y2="842.5" stroke="#505254" stroke-width="4.5" stroke-linecap="butt" />
<line x1="863.5" y1="741.2" x2="863.5" y2="842.5" stroke="#8e9194" stroke-width="2.2" stroke-linecap="butt" />
<line x1="1010.0" y1="766.3" x2="1010.0" y2="923.8" stroke="#505254" stroke-width="4.5" stroke-linecap="butt" />
<line x1="1010.0" y1="766.3" x2="1010.0" y2="923.8" stroke="#8e9194" stroke-width="2.2" stroke-linecap="butt" />
<line x1="1113.4" y1="800.1" x2="1113.4" y2="952.7" stroke="#505254" stroke-width="4.5" stroke-linecap="butt" />
<line x1="1113.4" y1="800.1" x2="1113.4" y2="952.7" stroke="#8e9194" stroke-width="2.2" stroke-linecap="butt" />
<line x1="1350.3" y1="804.2" x2="1350.3" y2="884.3" stroke="#505254" stroke-width="4.5" stroke-linecap="butt" />
<line x1="1350.3" y1="804.2" x2="1350.3" y2="884.3" stroke="#8e9194" stroke-width="2.2" stroke-linecap="butt" />
<line x1="866.7" y1="741.8" x2="866.7" y2="834.4" stroke="#505254" stroke-width="4.5" stroke-linecap="butt" />
<line x1="866.7" y1="741.8" x2="866.7" y2="834.4" stroke="#8e9194" stroke-width="2.2" stroke-linecap="butt" />
<line x1="913.5" y1="749.8" x2="913.5" y2="838.9" stroke="#505254" stroke-width="4.5" stroke-linecap="butt" />
<line x1="913.5" y1="749.8" x2="913.5" y2="838.9" stroke="#8e9194" stroke-width="2.2" stroke-linecap="butt" />
<line x1="1483.0" y1="661.2" x2="1483.0" y2="751.2" stroke="#505254" stroke-width="4.5" stroke-linecap="butt" />
<line x1="1483.0" y1="661.2" x2="1483.0" y2="751.2" stroke="#8e9194" stroke-width="2.2" stroke-linecap="butt" />
<line x1="887.7" y1="745.4" x2="887.7" y2="860.5" stroke="#505254" stroke-width="4.5" stroke-linecap="butt" />
<line x1="887.7" y1="745.4" x2="887.7" y2="860.5" stroke="#8e9194" stroke-width="2.2" stroke-linecap="butt" />
<line x1="1041.7" y1="771.8" x2="1041.7" y2="910.1" stroke="#505254" stroke-width="4.5" stroke-linecap="butt" />
<line x1="1041.7" y1="771.8" x2="1041.7" y2="910.1" stroke="#8e9194" stroke-width="2.2" stroke-linecap="butt" />
<line x1="1065.4" y1="775.9" x2="1065.4" y2="944.1" stroke="#505254" stroke-width="4.5" stroke-linecap="butt" />
<line x1="1065.4" y1="775.9" x2="1065.4" y2="944.1" stroke="#8e9194" stroke-width="2.2" stroke-linecap="butt" />
<line x1="1223.0" y1="802.0" x2="1223.0" y2="944.5" stroke="#505254" stroke-width="4.5" stroke-linecap="butt" />
<line x1="1223.0" y1="802.0" x2="1223.0" y2="944.5" stroke="#8e9194" stroke-width="2.2" stroke-linecap="butt" />
<line x1="958.0" y1="757.4" x2="958.0" y2="862.2" stroke="#505254" stroke-width="4.5" stroke-linecap="butt" />
<line x1="958.0" y1="757.4" x2="958.0" y2="862.2" stroke="#8e9194" stroke-width="2.2" stroke-linecap="butt" />
<line x1="912.9" y1="749.7" x2="912.9" y2="868.0" stroke="#505254" stroke-width="4.5" stroke-linecap="butt" />
<line x1="912.9" y1="749.7" x2="912.9" y2="868.0" stroke="#8e9194" stroke-width="2.2" stroke-linecap="butt" />
<line x1="1309.7" y1="803.5" x2="1309.7" y2="921.5" stroke="#505254" stroke-width="4.5" stroke-linecap="butt" />
<line x1="1309.7" y1="803.5" x2="1309.7" y2="921.5" stroke="#8e9194" stroke-width="2.2" stroke-linecap="butt" />
<line x1="883.5" y1="744.7" x2="883.5" y2="840.4" stroke="#505254" stroke-width="4.5" stroke-linecap="butt" />
<line x1="883.5" y1="744.7" x2="883.5" y2="840.4" stroke="#8e9194" stroke-width="2.2" stroke-linecap="butt" />
<line x1="1080.1" y1="778.4" x2="1080.1" y2="942.8" stroke="#505254" stroke-width="4.5" stroke-linecap="butt" />
<line x1="1080.1" y1="778.4" x2="1080.1" y2="942.8" stroke="#8e9194" stroke-width="2.2" stroke-linecap="butt" />
<line x1="1354.4" y1="804.2" x2="1354.4" y2="922.2" stroke="#505254" stroke-width="4.5" stroke-linecap="butt" />
<line x1="1354.4" y1="804.2" x2="1354.4" y2="922.2" stroke="#8e9194" stroke-width="2.2" stroke-linecap="butt" />
<line x1="1366.8" y1="804.4" x2="1366.8" y2="946.7" stroke="#505254" stroke-width="4.5" stroke-linecap="butt" />
<line x1="1366.8" y1="804.4" x2="1366.8" y2="946.7" stroke="#8e9194" stroke-width="2.2" stroke-linecap="butt" />
<line x1="1119.2" y1="800.2" x2="1119.2" y2="943.7" stroke="#505254" stroke-width="4.5" stroke-linecap="butt" />
<line x1="1119.2" y1="800.2" x2="1119.2" y2="943.7" stroke="#8e9194" stroke-width="2.2" stroke-linecap="butt" />
<line x1="1162.4" y1="800.9" x2="1162.4" y2="974.2" stroke="#505254" stroke-width="4.5" stroke-linecap="butt" />
<line x1="1162.4" y1="800.9" x2="1162.4" y2="974.2" stroke="#8e9194" stroke-width="2.2" stroke-linecap="butt" />
<line x1="1111.7" y1="800.1" x2="1111.7" y2="972.6" stroke="#505254" stroke-width="4.5" stroke-linecap="butt" />
<line x1="1111.7" y1="800.1" x2="1111.7" y2="972.6" stroke="#8e9194" stroke-width="2.2" stroke-linecap="butt" />
<line x1="1138.8" y1="800.5" x2="1138.8" y2="932.6" stroke="#505254" stroke-width="4.5" stroke-linecap="butt" />
<line x1="1138.8" y1="800.5" x2="1138.8" y2="932.6" stroke="#8e9194" stroke-width="2.2" stroke-linecap="butt" />
<line x1="1189.0" y1="801.4" x2="1189.0" y2="974.0" stroke="#505254" stroke-width="4.5" stroke-linecap="butt" />
<line x1="1189.0" y1="801.4" x2="1189.0" y2="974.0" stroke="#8e9194" stroke-width="2.2" stroke-linecap="butt" />
<line x1="878.0" y1="743.7" x2="878.0" y2="854.2" stroke="#505254" stroke-width="4.5" stroke-linecap="butt" />
<line x1="878.0" y1="743.7" x2="878.0" y2="854.2" stroke="#8e9194" stroke-width="2.2" stroke-linecap="butt" />
<line x1="1115.3" y1="800.1" x2="1115.3" y2="976.0" stroke="#505254" stroke-width="4.5" stroke-linecap="butt" />
<line x1="1115.3" y1="800.1" x2="1115.3" y2="976.0" stroke="#8e9194" stroke-width="2.2" stroke-linecap="butt" />
<line x1="1457.4" y1="685.8" x2="1457.4" y2="775.8" stroke="#505254" stroke-width="4.5" stroke-linecap="butt" />
<line x1="1457.4" y1="685.8" x2="1457.4" y2="775.8" stroke="#8e9194" stroke-width="2.2" stroke-linecap="butt" />
<line x1="1431.6" y1="710.7" x2="1431.6" y2="869.8" stroke="#505254" stroke-width="4.5" stroke-linecap="butt" />
<line x1="1431.6" y1="710.7" x2="1431.6" y2="869.8" stroke="#8e9194" stroke-width="2.2" stroke-linecap="butt" />
<line x1="1005.7" y1="765.6" x2="1005.7" y2="917.4" stroke="#505254" stroke-width="4.5" stroke-linecap="butt" />
<line x1="1005.7" y1="765.6" x2="1005.7" y2="917.4" stroke="#8e9194" stroke-width="2.2" stroke-linecap="butt" />
<line x1="912.5" y1="749.6" x2="912.5" y2="883.4" stroke="#505254" stroke-width="4.5" stroke-linecap="butt" />
<line x1="912.5" y1="749.6" x2="912.5" y2="883.4" stroke="#8e9194" stroke-width="2.2" stroke-linecap="butt" />
<line x1="1273.7" y1="802.8" x2="1273.7" y2="976.0" stroke="#505254" stroke-width="4.5" stroke-linecap="butt" />
<line x1="1273.7" y1="802.8" x2="1273.7" y2="976.0" stroke="#8e9194" stroke-width="2.2" stroke-linecap="butt" />
<line x1="1361.0" y1="804.3" x2="1361.0" y2="951.1" stroke="#505254" stroke-width="4.5" stroke-linecap="butt" />
<line x1="1361.0" y1="804.3" x2="1361.0" y2="951.1" stroke="#8e9194" stroke-width="2.2" stroke-linecap="butt" />
<line x1="1321.6" y1="803.7" x2="1321.6" y2="940.0" stroke="#505254" stroke-width="4.5" stroke-linecap="butt" />
<line x1="1321.6" y1="803.7" x2="1321.6" y2="940.0" stroke="#8e9194" stroke-width="2.2" stroke-linecap="butt" />
<line x1="899.1" y1="747.3" x2="899.1" y2="867.6" stroke="#505254" stroke-width="4.5" stroke-linecap="butt" />
<line x1="899.1" y1="747.3" x2="899.1" y2="867.6" stroke="#8e9194" stroke-width="2.2" stroke-linecap="butt" />
<line x1="833.3" y1="736.0" x2="833.3" y2="829.6" stroke="#505254" stroke-width="4.5" stroke-linecap="butt" />
<line x1="833.3" y1="736.0" x2="833.3" y2="829.6" stroke="#8e9194" stroke-width="2.2" stroke-linecap="butt" />
<line x1="1348.8" y1="804.1" x2="1348.8" y2="888.6" stroke="#505254" stroke-width="4.5" stroke-linecap="butt" />
<line x1="1348.8" y1="804.1" x2="1348.8" y2="888.6" stroke="#8e9194" stroke-width="2.2" stroke-linecap="butt" />
<line x1="891.5" y1="746.0" x2="891.5" y2="837.0" stroke="#505254" stroke-width="4.5" stroke-linecap="butt" />
<line x1="891.5" y1="746.0" x2="891.5" y2="837.0" stroke="#8e9194" stroke-width="2.2" stroke-linecap="butt" />
<line x1="1419.9" y1="721.9" x2="1419.9" y2="819.8" stroke="#505254" stroke-width="4.5" stroke-linecap="butt" />
<line x1="1419.9" y1="721.9" x2="1419.9" y2="819.8" stroke="#8e9194" stroke-width="2.2" stroke-linecap="butt" />
<line x1="845.7" y1="738.2" x2="845.7" y2="873.7" stroke="#505254" stroke-width="4.5" stroke-linecap="butt" />
<line x1="845.7" y1="738.2" x2="845.7" y2="873.7" stroke="#8e9194" stroke-width="2.2" stroke-linecap="butt" />
<line x1="911.3" y1="749.4" x2="911.3" y2="885.1" stroke="#505254" stroke-width="4.5" stroke-linecap="butt" />
<line x1="911.3" y1="749.4" x2="911.3" y2="885.1" stroke="#8e9194" stroke-width="2.2" stroke-linecap="butt" />
<line x1="1281.3" y1="803.0" x2="1281.3" y2="976.0" stroke="#505254" stroke-width="4.5" stroke-linecap="butt" />
<line x1="1281.3" y1="803.0" x2="1281.3" y2="976.0" stroke="#8e9194" stroke-width="2.2" stroke-linecap="butt" />
<line x1="1468.1" y1="675.5" x2="1468.1" y2="765.5" stroke="#505254" stroke-width="4.5" stroke-linecap="butt" />
<line x1="1468.1" y1="675.5" x2="1468.1" y2="765.5" stroke="#8e9194" stroke-width="2.2" stroke-linecap="butt" />
<line x1="1365.2" y1="804.4" x2="1365.2" y2="888.0" stroke="#505254" stroke-width="4.5" stroke-linecap="butt" />
<line x1="1365.2" y1="804.4" x2="1365.2" y2="888.0" stroke="#8e9194" stroke-width="2.2" stroke-linecap="butt" />
<line x1="1344.2" y1="804.0" x2="1344.2" y2="935.2" stroke="#505254" stroke-width="4.5" stroke-linecap="butt" />
<line x1="1344.2" y1="804.0" x2="1344.2" y2="935.2" stroke="#8e9194" stroke-width="2.2" stroke-linecap="butt" />
<line x1="1309.2" y1="803.4" x2="1309.2" y2="894.1" stroke="#505254" stroke-width="4.5" stroke-linecap="butt" />
<line x1="1309.2" y1="803.4" x2="1309.2" y2="894.1" stroke="#8e9194" stroke-width="2.2" stroke-linecap="butt" />
<line x1="1331.8" y1="803.8" x2="1331.8" y2="976.0" stroke="#505254" stroke-width="4.5" stroke-linecap="butt" />
<line x1="1331.8" y1="803.8" x2="1331.8" y2="976.0" stroke="#8e9194" stroke-width="2.2" stroke-linecap="butt" />
<line x1="871.0" y1="742.5" x2="871.0" y2="847.0" stroke="#505254" stroke-width="4.5" stroke-linecap="butt" />
<line x1="871.0" y1="742.5" x2="871.0" y2="847.0" stroke="#8e9194" stroke-width="2.2" stroke-linecap="butt" />
<line x1="1207.9" y1="801.7" x2="1207.9" y2="976.0" stroke="#505254" stroke-width="4.5" stroke-linecap="butt" />
<line x1="1207.9" y1="801.7" x2="1207.9" y2="976.0" stroke="#8e9194" stroke-width="2.2" stroke-linecap="butt" />
<line x1="992.2" y1="763.3" x2="992.2" y2="859.1" stroke="#505254" stroke-width="4.5" stroke-linecap="butt" />
<line x1="992.2" y1="763.3" x2="992.2" y2="859.1" stroke="#8e9194" stroke-width="2.2" stroke-linecap="butt" />
<line x1="997.5" y1="764.2" x2="997.5" y2="886.2" stroke="#505254" stroke-width="4.5" stroke-linecap="butt" />
<line x1="997.5" y1="764.2" x2="997.5" y2="886.2" stroke="#8e9194" stroke-width="2.2" stroke-linecap="butt" />
<line x1="1334.9" y1="803.9" x2="1334.9" y2="923.3" stroke="#505254" stroke-width="4.5" stroke-linecap="butt" />
<line x1="1334.9" y1="803.9" x2="1334.9" y2="923.3" stroke="#8e9194" stroke-width="2.2" stroke-linecap="butt" />
<line x1="1076.2" y1="777.7" x2="1076.2" y2="923.4" stroke="#505254" stroke-width="4.5" stroke-linecap="butt" />
<line x1="1076.2" y1="777.7" x2="1076.2" y2="923.4" stroke="#8e9194" stroke-width="2.2" stroke-linecap="butt" />
<line x1="1064.7" y1="775.7" x2="1064.7" y2="923.4" stroke="#505254" stroke-width="4.5" stroke-linecap="butt" />
<line x1="1064.7" y1="775.7" x2="1064.7" y2="923.4" stroke="#8e9194" stroke-width="2.2" stroke-linecap="butt" />
<line x1="1400.0" y1="745.0" x2="1400.0" y2="815.0" stroke="#5c5e60" stroke-width="3.5" stroke-linecap="butt" />
<line x1="1400.0" y1="745.0" x2="1400.0" y2="815.0" stroke="#b9bcbf" stroke-width="1.5" stroke-linecap="butt" />
<line x1="1405.0" y1="739.7" x2="1405.0" y2="809.7" stroke="#5c5e60" stroke-width="3.5" stroke-linecap="butt" />
<line x1="1405.0" y1="739.7" x2="1405.0" y2="809.7" stroke="#b9bcbf" stroke-width="1.5" stroke-linecap="butt" />
<line x1="1410.0" y1="734.5" x2="1410.0" y2="804.5" stroke="#5c5e60" stroke-width="3.5" stroke-linecap="butt" />
<line x1="1410.0" y1="734.5" x2="1410.0" y2="804.5" stroke="#b9bcbf" stroke-width="1.5" stroke-linecap="butt" />
<line x1="1415.0" y1="729.2" x2="1415.0" y2="799.2" stroke="#5c5e60" stroke-width="3.5" stroke-linecap="butt" />
<line x1="1415.0" y1="729.2" x2="1415.0" y2="799.2" stroke="#b9bcbf" stroke-width="1.5" stroke-linecap="butt" />
<line x1="1420.0" y1="723.9" x2="1420.0" y2="793.9" stroke="#5c5e60" stroke-width="3.5" stroke-linecap="butt" />
<line x1="1420.0" y1="723.9" x2="1420.0" y2="793.9" stroke="#b9bcbf" stroke-width="1.5" stroke-linecap="butt" />
<line x1="1425.0" y1="718.7" x2="1425.0" y2="788.7" stroke="#5c5e60" stroke-width="3.5" stroke-linecap="butt" />
<line x1="1425.0" y1="718.7" x2="1425.0" y2="788.7" stroke="#b9bcbf" stroke-width="1.5" stroke-linecap="butt" />
<line x1="1430.0" y1="713.4" x2="1430.0" y2="783.4" stroke="#5c5e60" stroke-width="3.5" stroke-linecap="butt" />
<line x1="1430.0" y1="713.4" x2="1430.0" y2="783.4" stroke="#b9bcbf" stroke-width="1.5" stroke-linecap="butt" />
<line x1="1435.0" y1="708.2" x2="1435.0" y2="778.2" stroke="#5c5e60" stroke-width="3.5" stroke-linecap="butt" />
<line x1="1435.0" y1="708.2" x2="1435.0" y2="778.2" stroke="#b9bcbf" stroke-width="1.5" stroke-linecap="butt" />
<line x1="1440.0" y1="702.9" x2="1440.0" y2="772.9" stroke="#5c5e60" stroke-width="3.5" stroke-linecap="butt" />
<line x1="1440.0" y1="702.9" x2="1440.0" y2="772.9" stroke="#b9bcbf" stroke-width="1.5" stroke-linecap="butt" />
<line x1="1445.0" y1="697.6" x2="1445.0" y2="767.6" stroke="#5c5e60" stroke-width="3.5" stroke-linecap="butt" />
<line x1="1445.0" y1="697.6" x2="1445.0" y2="767.6" stroke="#b9bcbf" stroke-width="1.5" stroke-linecap="butt" />
<line x1="1450.0" y1="692.4" x2="1450.0" y2="762.4" stroke="#5c5e60" stroke-width="3.5" stroke-linecap="butt" />
<line x1="1450.0" y1="692.4" x2="1450.0" y2="762.4" stroke="#b9bcbf" stroke-width="1.5" stroke-linecap="butt" />
<line x1="1455.0" y1="687.1" x2="1455.0" y2="757.1" stroke="#5c5e60" stroke-width="3.5" stroke-linecap="butt" />
<line x1="1455.0" y1="687.1" x2="1455.0" y2="757.1" stroke="#b9bcbf" stroke-width="1.5" stroke-linecap="butt" />
<line x1="1460.0" y1="681.8" x2="1460.0" y2="751.8" stroke="#5c5e60" stroke-width="3.5" stroke-linecap="butt" />
<line x1="1460.0" y1="681.8" x2="1460.0" y2="751.8" stroke="#b9bcbf" stroke-width="1.5" stroke-linecap="butt" />
<line x1="1465.0" y1="676.6" x2="1465.0" y2="746.6" stroke="#5c5e60" stroke-width="3.5" stroke-linecap="butt" />
<line x1="1465.0" y1="676.6" x2="1465.0" y2="746.6" stroke="#b9bcbf" stroke-width="1.5" stroke-linecap="butt" />
<line x1="1470.0" y1="671.3" x2="1470.0" y2="741.3" stroke="#5c5e60" stroke-width="3.5" stroke-linecap="butt" />
<line x1="1470.0" y1="671.3" x2="1470.0" y2="741.3" stroke="#b9bcbf" stroke-width="1.5" stroke-linecap="butt" />
<line x1="1475.0" y1="666.1" x2="1475.0" y2="736.1" stroke="#5c5e60" stroke-width="3.5" stroke-linecap="butt" />
<line x1="1475.0" y1="666.1" x2="1475.0" y2="736.1" stroke="#b9bcbf" stroke-width="1.5" stroke-linecap="butt" />
<line x1="1480.0" y1="660.8" x2="1480.0" y2="730.8" stroke="#5c5e60" stroke-width="3.5" stroke-linecap="butt" />
<line x1="1480.0" y1="660.8" x2="1480.0" y2="730.8" stroke="#b9bcbf" stroke-width="1.5" stroke-linecap="butt" />
<line x1="1485.0" y1="655.5" x2="1485.0" y2="725.5" stroke="#5c5e60" stroke-width="3.5" stroke-linecap="butt" />
<line x1="1485.0" y1="655.5" x2="1485.0" y2="725.5" stroke="#b9bcbf" stroke-width="1.5" stroke-linecap="butt" />
<line x1="1490.0" y1="650.3" x2="1490.0" y2="720.3" stroke="#5c5e60" stroke-width="3.5" stroke-linecap="butt" />
<line x1="1490.0" y1="650.3" x2="1490.0" y2="720.3" stroke="#b9bcbf" stroke-width="1.5" stroke-linecap="butt" />
<line x1="1495.0" y1="645.0" x2="1495.0" y2="715.0" stroke="#5c5e60" stroke-width="3.5" stroke-linecap="butt" />
<line x1="1495.0" y1="645.0" x2="1495.0" y2="715.0" stroke="#b9bcbf" stroke-width="1.5" stroke-linecap="butt" />
<polygon points="1404.0,268.0 1507.0,390.0 1503.0,642.0 1399.0,742.0" fill="#6a6d72" stroke="#3d3f42" stroke-width="1" stroke-linejoin="round" />
<polygon points="1404.0,268.0 1507.0,390.0 1507.0,430.0 1404.0,335.0" fill="url(#louvR)" stroke="#3d3f42" stroke-width="0.8" stroke-linejoin="round" />
<line x1="1410.0" y1="272.0" x2="1410.0" y2="337.0" stroke="#9a1c1c" stroke-width="1.3" stroke-linecap="butt" />
<line x1="1418.2" y1="282.1" x2="1418.2" y2="345.1" stroke="#9a1c1c" stroke-width="1.3" stroke-linecap="butt" />
<line x1="1426.4" y1="292.2" x2="1426.4" y2="353.2" stroke="#9a1c1c" stroke-width="1.3" stroke-linecap="butt" />
<line x1="1434.5" y1="302.3" x2="1434.5" y2="361.3" stroke="#9a1c1c" stroke-width="1.3" stroke-linecap="butt" />
<line x1="1442.7" y1="312.4" x2="1442.7" y2="369.4" stroke="#9a1c1c" stroke-width="1.3" stroke-linecap="butt" />
<line x1="1450.9" y1="322.5" x2="1450.9" y2="377.5" stroke="#9a1c1c" stroke-width="1.3" stroke-linecap="butt" />
<line x1="1459.1" y1="332.5" x2="1459.1" y2="385.5" stroke="#9a1c1c" stroke-width="1.3" stroke-linecap="butt" />
<line x1="1467.3" y1="342.6" x2="1467.3" y2="393.6" stroke="#9a1c1c" stroke-width="1.3" stroke-linecap="butt" />
<line x1="1475.5" y1="352.7" x2="1475.5" y2="401.7" stroke="#9a1c1c" stroke-width="1.3" stroke-linecap="butt" />
<line x1="1483.6" y1="362.8" x2="1483.6" y2="409.8" stroke="#9a1c1c" stroke-width="1.3" stroke-linecap="butt" />
<line x1="1491.8" y1="372.9" x2="1491.8" y2="417.9" stroke="#9a1c1c" stroke-width="1.3" stroke-linecap="butt" />
<line x1="1500.0" y1="383.0" x2="1500.0" y2="426.0" stroke="#9a1c1c" stroke-width="1.3" stroke-linecap="butt" />
<polygon points="1404.0,335.0 1507.0,430.0 1507.0,442.0 1404.0,372.0" fill="#7d8085" stroke="#3d3f42" stroke-width="0.6" stroke-linejoin="round" />
<line x1="1412.0" y1="341.0" x2="1412.0" y2="372.0" stroke="#dcdee0" stroke-width="3" stroke-linecap="butt" />
<line x1="1418.6" y1="348.3" x2="1418.6" y2="377.4" stroke="#dcdee0" stroke-width="3" stroke-linecap="butt" />
<line x1="1425.2" y1="355.6" x2="1425.2" y2="382.8" stroke="#dcdee0" stroke-width="3" stroke-linecap="butt" />
<line x1="1431.8" y1="362.9" x2="1431.8" y2="388.2" stroke="#dcdee0" stroke-width="3" stroke-linecap="butt" />
<line x1="1438.5" y1="370.2" x2="1438.5" y2="393.5" stroke="#dcdee0" stroke-width="3" stroke-linecap="butt" />
<line x1="1445.1" y1="377.5" x2="1445.1" y2="398.9" stroke="#dcdee0" stroke-width="3" stroke-linecap="butt" />
<line x1="1451.7" y1="384.8" x2="1451.7" y2="404.3" stroke="#dcdee0" stroke-width="3" stroke-linecap="butt" />
<line x1="1458.3" y1="392.2" x2="1458.3" y2="409.7" stroke="#dcdee0" stroke-width="3" stroke-linecap="butt" />
<line x1="1464.9" y1="399.5" x2="1464.9" y2="415.1" stroke="#dcdee0" stroke-width="3" stroke-linecap="butt" />
<line x1="1471.5" y1="406.8" x2="1471.5" y2="420.5" stroke="#dcdee0" stroke-width="3" stroke-linecap="butt" />
<line x1="1478.2" y1="414.1" x2="1478.2" y2="425.8" stroke="#dcdee0" stroke-width="3" stroke-linecap="butt" />
<line x1="1484.8" y1="421.4" x2="1484.8" y2="431.2" stroke="#dcdee0" stroke-width="3" stroke-linecap="butt" />
<line x1="1491.4" y1="428.7" x2="1491.4" y2="436.6" stroke="#dcdee0" stroke-width="3" stroke-linecap="butt" />
<line x1="1498.0" y1="436.0" x2="1498.0" y2="442.0" stroke="#dcdee0" stroke-width="3" stroke-linecap="butt" />
<polygon points="1403.0,372.0 1507.0,440.0 1503.0,619.0 1403.0,684.0" fill="#b3b6ba" stroke="#3d3f42" stroke-width="0.8" stroke-linejoin="round" />
<polygon points="1409.0,382.0 1468.0,420.0 1467.0,648.0 1409.0,676.0" fill="#5d6066" stroke="#333" stroke-width="0.6" stroke-linejoin="round" />
<polygon points="1474.0,424.0 1501.0,442.0 1499.0,620.0 1473.0,637.0" fill="#5d6066" stroke="#333" stroke-width="0.6" stroke-linejoin="round" />
<line x1="1414.0" y1="389.0" x2="1414.0" y2="671.0" stroke="#c9ccd0" stroke-width="2.4" stroke-linecap="butt" />
<line x1="1420.1" y1="392.9" x2="1420.1" y2="668.2" stroke="#c9ccd0" stroke-width="2.4" stroke-linecap="butt" />
<line x1="1426.2" y1="396.8" x2="1426.2" y2="665.5" stroke="#c9ccd0" stroke-width="2.4" stroke-linecap="butt" />
<line x1="1432.4" y1="400.6" x2="1432.4" y2="662.8" stroke="#c9ccd0" stroke-width="2.4" stroke-linecap="butt" />
<line x1="1438.5" y1="404.5" x2="1438.5" y2="660.0" stroke="#c9ccd0" stroke-width="2.4" stroke-linecap="butt" />
<line x1="1444.6" y1="408.4" x2="1444.6" y2="657.2" stroke="#c9ccd0" stroke-width="2.4" stroke-linecap="butt" />
<line x1="1450.8" y1="412.2" x2="1450.8" y2="654.5" stroke="#c9ccd0" stroke-width="2.4" stroke-linecap="butt" />
<line x1="1456.9" y1="416.1" x2="1456.9" y2="651.8" stroke="#c9ccd0" stroke-width="2.4" stroke-linecap="butt" />
<line x1="1463.0" y1="420.0" x2="1463.0" y2="649.0" stroke="#c9ccd0" stroke-width="2.4" stroke-linecap="butt" />
<line x1="1478.0" y1="430.0" x2="1478.0" y2="632.0" stroke="#c9ccd0" stroke-width="2" stroke-linecap="butt" />
<line x1="1481.8" y1="432.6" x2="1481.8" y2="629.6" stroke="#c9ccd0" stroke-width="2" stroke-linecap="butt" />
<line x1="1485.6" y1="435.2" x2="1485.6" y2="627.2" stroke="#c9ccd0" stroke-width="2" stroke-linecap="butt" />
<line x1="1489.4" y1="437.8" x2="1489.4" y2="624.8" stroke="#c9ccd0" stroke-width="2" stroke-linecap="butt" />
<line x1="1493.2" y1="440.4" x2="1493.2" y2="622.4" stroke="#c9ccd0" stroke-width="2" stroke-linecap="butt" />
<line x1="1497.0" y1="443.0" x2="1497.0" y2="620.0" stroke="#c9ccd0" stroke-width="2" stroke-linecap="butt" />
<line x1="1409.0" y1="450.0" x2="1468.0" y2="468.0" stroke="#8e9196" stroke-width="3" stroke-linecap="butt" />
<line x1="1474.0" y1="470.0" x2="1501.0" y2="476.0" stroke="#8e9196" stroke-width="2.5" stroke-linecap="butt" />
<line x1="1409.0" y1="505.0" x2="1468.0" y2="514.0" stroke="#8e9196" stroke-width="3" stroke-linecap="butt" />
<line x1="1474.0" y1="516.0" x2="1501.0" y2="518.0" stroke="#8e9196" stroke-width="2.5" stroke-linecap="butt" />
<line x1="1409.0" y1="556.0" x2="1468.0" y2="557.0" stroke="#8e9196" stroke-width="3" stroke-linecap="butt" />
<line x1="1474.0" y1="559.0" x2="1501.0" y2="558.0" stroke="#8e9196" stroke-width="2.5" stroke-linecap="butt" />
<line x1="1409.0" y1="600.0" x2="1468.0" y2="594.0" stroke="#8e9196" stroke-width="3" stroke-linecap="butt" />
<line x1="1474.0" y1="596.0" x2="1501.0" y2="590.0" stroke="#8e9196" stroke-width="2.5" stroke-linecap="butt" />
<line x1="1409.0" y1="640.0" x2="1468.0" y2="628.0" stroke="#8e9196" stroke-width="3" stroke-linecap="butt" />
<line x1="1474.0" y1="630.0" x2="1501.0" y2="620.0" stroke="#8e9196" stroke-width="2.5" stroke-linecap="butt" />
<polygon points="1403.0,684.0 1503.0,619.0 1503.0,642.0 1399.0,742.0" fill="#45474b" stroke="#222" stroke-width="0.6" stroke-linejoin="round" />
<line x1="1399.0" y1="742.0" x2="1503.0" y2="642.0" stroke="#8a5a40" stroke-width="2" stroke-linecap="butt" />
<polygon points="1497.0,388.0 1507.0,390.0 1507.0,645.0 1497.0,652.0" fill="#a07055" stroke="#3d3f42" stroke-width="0.6" stroke-linejoin="round" />
<polygon points="1495.0,384.0 1509.0,386.0 1509.0,392.0 1495.0,390.0" fill="#b8bbbf" stroke="#3d3f42" stroke-width="0.6" stroke-linejoin="round" />
<polygon points="1289.0,231.0 1378.0,213.0 1373.0,799.0 1284.0,783.0" fill="#a37659" stroke="#3d3f42" stroke-width="1" stroke-linejoin="round" />
<polygon points="1378.0,213.0 1407.0,247.0 1400.0,790.0 1373.0,799.0" fill="#80604b" stroke="#3d3f42" stroke-width="1" stroke-linejoin="round" />
<polygon points="1288.0,220.0 1378.0,200.0 1409.0,240.0 1409.0,249.0 1378.0,212.0 1288.0,232.0" fill="#b9bcc0" stroke="#3d3f42" stroke-width="0.8" stroke-linejoin="round" />
<path d="M1326.0 225.0 L1326.0 275.0 L1310.0 291.0 L1307.0 622.0 L1328.0 642.0 L1328.0 785.0" stroke="#4a3a2a" stroke-width="5" fill="none" stroke-linejoin="round" />
<path d="M1326.0 225.0 L1326.0 275.0 L1310.0 291.0 L1307.0 622.0 L1328.0 642.0 L1328.0 785.0" stroke="#8a7656" stroke-width="2.6" fill="none" stroke-linejoin="round" />
<path d="M1339.0 221.0 L1339.0 256.0 L1356.0 267.0 L1356.0 381.0 L1322.0 396.0 L1321.0 483.0 L1350.0 504.0 L1347.0 788.0" stroke="#4a3a2a" stroke-width="8" fill="none" stroke-linejoin="round" />
<path d="M1339.0 221.0 L1339.0 256.0 L1356.0 267.0 L1356.0 381.0 L1322.0 396.0 L1321.0 483.0 L1350.0 504.0 L1347.0 788.0" stroke="#8a7656" stroke-width="5" fill="none" stroke-linejoin="round" />
<path d="M1385.0 230.0 L1385.0 420.0 L1392.0 440.0 L1392.0 780.0" stroke="#c9b58a" stroke-width="1" fill="none" stroke-linejoin="round" />
<path d="M1395.0 250.0 L1395.0 400.0 L1388.0 420.0 L1388.0 780.0" stroke="#5a4535" stroke-width="1" fill="none" stroke-linejoin="round" />
<polygon points="897.0,316.0 946.0,306.0 948.0,745.0 903.0,748.0" fill="#a37659" stroke="#3d3f42" stroke-width="1" stroke-linejoin="round" />
<polygon points="896.0,310.0 948.0,302.0 948.0,312.0 897.0,319.0" fill="#b9bcc0" stroke="#3d3f42" stroke-width="0.8" stroke-linejoin="round" />
<polygon points="934.0,307.0 941.0,306.0 941.0,368.0 934.0,368.0" fill="#9a9da1" stroke="#3d3f42" stroke-width="0.6" stroke-linejoin="round" />
<path d="M914.0 316.0 L914.0 344.0 L909.0 350.0 L909.0 745.0" stroke="#4e3f2e" stroke-width="2.2" fill="none" stroke-linejoin="round" />
<path d="M923.0 315.0 L923.0 345.0 L930.0 355.0 L930.0 382.0" stroke="#4e3f2e" stroke-width="2.2" fill="none" stroke-linejoin="round" />
<polygon points="941.0,313.0 1037.0,292.0 1037.0,334.0 941.0,352.0" fill="url(#louv)" stroke="#3d3f42" stroke-width="0.8" stroke-linejoin="round" />
<line x1="948.0" y1="318.0" x2="948.0" y2="350.0" stroke="#a01818" stroke-width="2" stroke-linecap="butt" />
<line x1="985.0" y1="306.0" x2="985.0" y2="343.0" stroke="#a01818" stroke-width="2" stroke-linecap="butt" />
<polygon points="1037.0,282.0 1151.0,258.0 1151.0,312.0 1037.0,334.0" fill="#a37659" stroke="#3d3f42" stroke-width="0.8" stroke-linejoin="round" />
<polygon points="1036.0,278.0 1151.0,253.0 1155.0,256.0 1155.0,262.0 1037.0,287.0" fill="#b9bcc0" stroke="#3d3f42" stroke-width="0.8" stroke-linejoin="round" />
<polygon points="1151.0,264.0 1289.0,236.0 1289.0,288.0 1151.0,312.0" fill="url(#louv)" stroke="#3d3f42" stroke-width="0.8" stroke-linejoin="round" />
<line x1="1153.0" y1="263.0" x2="1153.0" y2="312.0" stroke="#a01818" stroke-width="2" stroke-linecap="butt" />
<line x1="1200.0" y1="254.0" x2="1200.0" y2="304.0" stroke="#a01818" stroke-width="2" stroke-linecap="butt" />
<line x1="1250.0" y1="244.0" x2="1250.0" y2="294.0" stroke="#a01818" stroke-width="2" stroke-linecap="butt" />
<polygon points="939.0,350.0 1289.0,288.0 1289.0,356.0 1242.0,331.0 909.0,382.0 939.0,382.0" fill="#b6b9bd" stroke="#3d3f42" stroke-width="0.8" stroke-linejoin="round" />
<polygon points="951.0,358.0 1241.0,310.0 1241.0,338.0 951.0,375.0" fill="#86888c" stroke="#555" stroke-width="0.6" stroke-linejoin="round" />
<line x1="960.0" y1="357.0" x2="960.0" y2="375.0" stroke="#c4c7ca" stroke-width="3" stroke-linecap="butt" />
<line x1="994.4" y1="351.2" x2="994.4" y2="370.5" stroke="#c4c7ca" stroke-width="3" stroke-linecap="butt" />
<line x1="1028.8" y1="345.5" x2="1028.8" y2="366.0" stroke="#c4c7ca" stroke-width="3" stroke-linecap="butt" />
<line x1="1063.1" y1="339.8" x2="1063.1" y2="361.5" stroke="#c4c7ca" stroke-width="3" stroke-linecap="butt" />
<line x1="1097.5" y1="334.0" x2="1097.5" y2="357.0" stroke="#c4c7ca" stroke-width="3" stroke-linecap="butt" />
<line x1="1131.9" y1="328.2" x2="1131.9" y2="352.5" stroke="#c4c7ca" stroke-width="3" stroke-linecap="butt" />
<line x1="1166.2" y1="322.5" x2="1166.2" y2="348.0" stroke="#c4c7ca" stroke-width="3" stroke-linecap="butt" />
<line x1="1200.6" y1="316.8" x2="1200.6" y2="343.5" stroke="#c4c7ca" stroke-width="3" stroke-linecap="butt" />
<line x1="1235.0" y1="311.0" x2="1235.0" y2="339.0" stroke="#c4c7ca" stroke-width="3" stroke-linecap="butt" />
<polygon points="910.0,384.5 1236.0,333.0 1238.0,806.0 915.2,748.5" fill="#a8aab0" stroke="#3d3f42" stroke-width="1" stroke-linejoin="round" />
<polygon points="914.0,388.5 935.0,383.9 935.0,446.5 914.0,448.2" fill="#a37659" />
<polygon points="943.0,383.9 962.0,379.6 962.0,445.0 943.0,446.5" fill="#a37659" />
<polygon points="970.0,379.6 1000.0,373.5 1000.0,402.0 970.0,406.4" fill="#86888e" stroke="#2c2e31" stroke-width="0.8" stroke-linejoin="round" />
<polygon points="970.0,406.4 1000.0,402.0 1000.0,442.9 970.0,445.0" fill="#b0b1ba" stroke="#2c2e31" stroke-width="0.8" stroke-linejoin="round" />
<line x1="985.0" y1="376.6" x2="985.0" y2="444.0" stroke="#2c2e31" stroke-width="1.2" stroke-linecap="butt" />
<polygon points="1008.0,373.5 1039.0,367.3 1039.0,397.5 1008.0,402.0" fill="#86888e" stroke="#2c2e31" stroke-width="0.8" stroke-linejoin="round" />
<polygon points="1008.0,402.0 1039.0,397.5 1039.0,440.7 1008.0,442.9" fill="#b0b1ba" stroke="#2c2e31" stroke-width="0.8" stroke-linejoin="round" />
<line x1="1023.5" y1="370.4" x2="1023.5" y2="441.8" stroke="#2c2e31" stroke-width="1.2" stroke-linecap="butt" />
<polygon points="1047.0,367.3 1080.0,360.8 1080.0,392.8 1047.0,397.5" fill="#86888e" stroke="#2c2e31" stroke-width="0.8" stroke-linejoin="round" />
<polygon points="1047.0,397.5 1080.0,392.8 1080.0,438.4 1047.0,440.7" fill="#b0b1ba" stroke="#2c2e31" stroke-width="0.8" stroke-linejoin="round" />
<line x1="1063.5" y1="364.1" x2="1063.5" y2="439.6" stroke="#2c2e31" stroke-width="1.2" stroke-linecap="butt" />
<polygon points="1088.0,360.8 1125.0,353.7 1125.0,387.6 1088.0,392.8" fill="#86888e" stroke="#2c2e31" stroke-width="0.8" stroke-linejoin="round" />
<polygon points="1088.0,392.8 1125.0,387.6 1125.0,435.9 1088.0,438.4" fill="#b0b1ba" stroke="#2c2e31" stroke-width="0.8" stroke-linejoin="round" />
<line x1="1106.5" y1="357.3" x2="1106.5" y2="437.1" stroke="#2c2e31" stroke-width="1.2" stroke-linecap="butt" />
<polygon points="1133.0,353.7 1175.0,345.7 1175.0,381.8 1133.0,387.6" fill="#86888e" stroke="#2c2e31" stroke-width="0.8" stroke-linejoin="round" />
<polygon points="1133.0,387.6 1175.0,381.8 1175.0,433.1 1133.0,435.9" fill="#b0b1ba" stroke="#2c2e31" stroke-width="0.8" stroke-linejoin="round" />
<line x1="1154.0" y1="349.7" x2="1154.0" y2="434.5" stroke="#2c2e31" stroke-width="1.2" stroke-linecap="butt" />
<polygon points="1183.0,345.7 1230.0,337.0 1230.0,375.4 1183.0,381.8" fill="#86888e" stroke="#2c2e31" stroke-width="0.8" stroke-linejoin="round" />
<polygon points="1183.0,381.8 1230.0,375.4 1230.0,430.0 1183.0,433.1" fill="#b0b1ba" stroke="#2c2e31" stroke-width="0.8" stroke-linejoin="round" />
<line x1="1206.5" y1="341.4" x2="1206.5" y2="431.5" stroke="#2c2e31" stroke-width="1.2" stroke-linecap="butt" />
<polygon points="914.0,456.2 935.0,454.5 935.0,501.8 914.0,502.0" fill="#a37659" />
<polygon points="943.0,454.5 962.0,453.0 962.0,501.7 943.0,501.8" fill="#a37659" />
<polygon points="970.0,453.0 1000.0,450.9 1000.0,471.5 970.0,472.8" fill="#86888e" stroke="#2c2e31" stroke-width="0.8" stroke-linejoin="round" />
<polygon points="970.0,472.8 1000.0,471.5 1000.0,501.4 970.0,501.7" fill="#b0b1ba" stroke="#2c2e31" stroke-width="0.8" stroke-linejoin="round" />
<line x1="985.0" y1="452.0" x2="985.0" y2="501.6" stroke="#2c2e31" stroke-width="1.2" stroke-linecap="butt" />
<polygon points="1008.0,450.9 1039.0,448.7 1039.0,470.1 1008.0,471.5" fill="#86888e" stroke="#2c2e31" stroke-width="0.8" stroke-linejoin="round" />
<polygon points="1008.0,471.5 1039.0,470.1 1039.0,501.2 1008.0,501.4" fill="#b0b1ba" stroke="#2c2e31" stroke-width="0.8" stroke-linejoin="round" />
<line x1="1023.5" y1="449.8" x2="1023.5" y2="501.3" stroke="#2c2e31" stroke-width="1.2" stroke-linecap="butt" />
<polygon points="1047.0,448.7 1080.0,446.4 1080.0,468.7 1047.0,470.1" fill="#86888e" stroke="#2c2e31" stroke-width="0.8" stroke-linejoin="round" />
<polygon points="1047.0,470.1 1080.0,468.7 1080.0,500.9 1047.0,501.2" fill="#b0b1ba" stroke="#2c2e31" stroke-width="0.8" stroke-linejoin="round" />
<line x1="1063.5" y1="447.6" x2="1063.5" y2="501.1" stroke="#2c2e31" stroke-width="1.2" stroke-linecap="butt" />
<polygon points="1088.0,446.4 1125.0,443.9 1125.0,467.1 1088.0,468.7" fill="#86888e" stroke="#2c2e31" stroke-width="0.8" stroke-linejoin="round" />
<polygon points="1088.0,468.7 1125.0,467.1 1125.0,500.7 1088.0,500.9" fill="#b0b1ba" stroke="#2c2e31" stroke-width="0.8" stroke-linejoin="round" />
<line x1="1106.5" y1="445.1" x2="1106.5" y2="500.8" stroke="#2c2e31" stroke-width="1.2" stroke-linecap="butt" />
<polygon points="1133.0,443.9 1175.0,441.1 1175.0,465.3 1133.0,467.1" fill="#86888e" stroke="#2c2e31" stroke-width="0.8" stroke-linejoin="round" />
<polygon points="1133.0,467.1 1175.0,465.3 1175.0,500.3 1133.0,500.7" fill="#b0b1ba" stroke="#2c2e31" stroke-width="0.8" stroke-linejoin="round" />
<line x1="1154.0" y1="442.5" x2="1154.0" y2="500.5" stroke="#2c2e31" stroke-width="1.2" stroke-linecap="butt" />
<polygon points="1183.0,441.1 1230.0,438.0 1230.0,463.4 1183.0,465.3" fill="#86888e" stroke="#2c2e31" stroke-width="0.8" stroke-linejoin="round" />
<polygon points="1183.0,465.3 1230.0,463.4 1230.0,500.0 1183.0,500.3" fill="#b0b1ba" stroke="#2c2e31" stroke-width="0.8" stroke-linejoin="round" />
<line x1="1206.5" y1="439.5" x2="1206.5" y2="500.2" stroke="#2c2e31" stroke-width="1.2" stroke-linecap="butt" />
<polygon points="914.0,510.0 935.0,509.8 935.0,559.8 914.0,558.9" fill="#a37659" />
<polygon points="943.0,509.8 962.0,509.7 962.0,560.7 943.0,559.8" fill="#a37659" />
<polygon points="970.0,509.7 1000.0,509.4 1000.0,530.8 970.0,530.4" fill="#86888e" stroke="#2c2e31" stroke-width="0.8" stroke-linejoin="round" />
<polygon points="970.0,530.4 1000.0,530.8 1000.0,561.8 970.0,560.7" fill="#b0b1ba" stroke="#2c2e31" stroke-width="0.8" stroke-linejoin="round" />
<line x1="985.0" y1="509.6" x2="985.0" y2="561.2" stroke="#2c2e31" stroke-width="1.2" stroke-linecap="butt" />
<polygon points="1008.0,509.4 1039.0,509.2 1039.0,531.2 1008.0,530.8" fill="#86888e" stroke="#2c2e31" stroke-width="0.8" stroke-linejoin="round" />
<polygon points="1008.0,530.8 1039.0,531.2 1039.0,563.0 1008.0,561.8" fill="#b0b1ba" stroke="#2c2e31" stroke-width="0.8" stroke-linejoin="round" />
<line x1="1023.5" y1="509.3" x2="1023.5" y2="562.4" stroke="#2c2e31" stroke-width="1.2" stroke-linecap="butt" />
<polygon points="1047.0,509.2 1080.0,508.9 1080.0,531.6 1047.0,531.2" fill="#86888e" stroke="#2c2e31" stroke-width="0.8" stroke-linejoin="round" />
<polygon points="1047.0,531.2 1080.0,531.6 1080.0,564.3 1047.0,563.0" fill="#b0b1ba" stroke="#2c2e31" stroke-width="0.8" stroke-linejoin="round" />
<line x1="1063.5" y1="509.1" x2="1063.5" y2="563.7" stroke="#2c2e31" stroke-width="1.2" stroke-linecap="butt" />
<polygon points="1088.0,508.9 1125.0,508.7 1125.0,532.0 1088.0,531.6" fill="#86888e" stroke="#2c2e31" stroke-width="0.8" stroke-linejoin="round" />
<polygon points="1088.0,531.6 1125.0,532.0 1125.0,565.7 1088.0,564.3" fill="#b0b1ba" stroke="#2c2e31" stroke-width="0.8" stroke-linejoin="round" />
<line x1="1106.5" y1="508.8" x2="1106.5" y2="565.0" stroke="#2c2e31" stroke-width="1.2" stroke-linecap="butt" />
<polygon points="1133.0,508.7 1175.0,508.3 1175.0,532.5 1133.0,532.0" fill="#86888e" stroke="#2c2e31" stroke-width="0.8" stroke-linejoin="round" />
<polygon points="1133.0,532.0 1175.0,532.5 1175.0,567.3 1133.0,565.7" fill="#b0b1ba" stroke="#2c2e31" stroke-width="0.8" stroke-linejoin="round" />
<line x1="1154.0" y1="508.5" x2="1154.0" y2="566.5" stroke="#2c2e31" stroke-width="1.2" stroke-linecap="butt" />
<polygon points="1183.0,508.3 1230.0,508.0 1230.0,533.0 1183.0,532.5" fill="#86888e" stroke="#2c2e31" stroke-width="0.8" stroke-linejoin="round" />
<polygon points="1183.0,532.5 1230.0,533.0 1230.0,569.0 1183.0,567.3" fill="#b0b1ba" stroke="#2c2e31" stroke-width="0.8" stroke-linejoin="round" />
<line x1="1206.5" y1="508.2" x2="1206.5" y2="568.1" stroke="#2c2e31" stroke-width="1.2" stroke-linecap="butt" />
<polygon points="914.0,566.9 935.0,567.8 935.0,616.0 914.0,613.8" fill="#a37659" />
<polygon points="943.0,567.8 962.0,568.7 962.0,618.1 943.0,616.0" fill="#a37659" />
<polygon points="970.0,568.7 1000.0,569.8 1000.0,590.7 970.0,588.8" fill="#86888e" stroke="#2c2e31" stroke-width="0.8" stroke-linejoin="round" />
<polygon points="970.0,588.8 1000.0,590.7 1000.0,621.1 970.0,618.1" fill="#b0b1ba" stroke="#2c2e31" stroke-width="0.8" stroke-linejoin="round" />
<line x1="985.0" y1="569.2" x2="985.0" y2="619.6" stroke="#2c2e31" stroke-width="1.2" stroke-linecap="butt" />
<polygon points="1008.0,569.8 1039.0,571.0 1039.0,592.7 1008.0,590.7" fill="#86888e" stroke="#2c2e31" stroke-width="0.8" stroke-linejoin="round" />
<polygon points="1008.0,590.7 1039.0,592.7 1039.0,624.1 1008.0,621.1" fill="#b0b1ba" stroke="#2c2e31" stroke-width="0.8" stroke-linejoin="round" />
<line x1="1023.5" y1="570.4" x2="1023.5" y2="622.6" stroke="#2c2e31" stroke-width="1.2" stroke-linecap="butt" />
<polygon points="1047.0,571.0 1080.0,572.3 1080.0,594.8 1047.0,592.7" fill="#86888e" stroke="#2c2e31" stroke-width="0.8" stroke-linejoin="round" />
<polygon points="1047.0,592.7 1080.0,594.8 1080.0,627.3 1047.0,624.1" fill="#b0b1ba" stroke="#2c2e31" stroke-width="0.8" stroke-linejoin="round" />
<line x1="1063.5" y1="571.7" x2="1063.5" y2="625.7" stroke="#2c2e31" stroke-width="1.2" stroke-linecap="butt" />
<polygon points="1088.0,572.3 1125.0,573.7 1125.0,597.1 1088.0,594.8" fill="#86888e" stroke="#2c2e31" stroke-width="0.8" stroke-linejoin="round" />
<polygon points="1088.0,594.8 1125.0,597.1 1125.0,630.8 1088.0,627.3" fill="#b0b1ba" stroke="#2c2e31" stroke-width="0.8" stroke-linejoin="round" />
<line x1="1106.5" y1="573.0" x2="1106.5" y2="629.1" stroke="#2c2e31" stroke-width="1.2" stroke-linecap="butt" />
<polygon points="1133.0,573.7 1175.0,575.3 1175.0,599.6 1133.0,597.1" fill="#86888e" stroke="#2c2e31" stroke-width="0.8" stroke-linejoin="round" />
<polygon points="1133.0,597.1 1175.0,599.6 1175.0,634.7 1133.0,630.8" fill="#b0b1ba" stroke="#2c2e31" stroke-width="0.8" stroke-linejoin="round" />
<line x1="1154.0" y1="574.5" x2="1154.0" y2="632.8" stroke="#2c2e31" stroke-width="1.2" stroke-linecap="butt" />
<polygon points="1183.0,575.3 1230.0,577.0 1230.0,602.4 1183.0,599.6" fill="#86888e" stroke="#2c2e31" stroke-width="0.8" stroke-linejoin="round" />
<polygon points="1183.0,599.6 1230.0,602.4 1230.0,639.0 1183.0,634.7" fill="#b0b1ba" stroke="#2c2e31" stroke-width="0.8" stroke-linejoin="round" />
<line x1="1206.5" y1="576.1" x2="1206.5" y2="636.9" stroke="#2c2e31" stroke-width="1.2" stroke-linecap="butt" />
<polygon points="914.0,621.8 935.0,624.0 935.0,669.2 914.0,665.6" fill="#a37659" />
<polygon points="943.0,624.0 962.0,626.1 962.0,672.6 943.0,669.2" fill="#a37659" />
<polygon points="970.0,626.1 1000.0,629.1 1000.0,642.0 970.0,638.5" fill="#86888e" stroke="#2c2e31" stroke-width="0.8" stroke-linejoin="round" />
<polygon points="970.0,638.5 1000.0,642.0 1000.0,677.3 970.0,672.6" fill="#b0b1ba" stroke="#2c2e31" stroke-width="0.8" stroke-linejoin="round" />
<polygon points="970.0,663.0 1000.0,667.3 1000.0,677.3 970.0,672.6" fill="#a2a3ac" />
<line x1="985.0" y1="627.6" x2="985.0" y2="675.0" stroke="#2c2e31" stroke-width="1.2" stroke-linecap="butt" />
<polygon points="1008.0,629.1 1039.0,632.1 1039.0,645.5 1008.0,642.0" fill="#86888e" stroke="#2c2e31" stroke-width="0.8" stroke-linejoin="round" />
<polygon points="1008.0,642.0 1039.0,645.5 1039.0,682.2 1008.0,677.3" fill="#b0b1ba" stroke="#2c2e31" stroke-width="0.8" stroke-linejoin="round" />
<polygon points="1008.0,667.3 1039.0,671.7 1039.0,682.2 1008.0,677.3" fill="#a2a3ac" />
<line x1="1023.5" y1="630.6" x2="1023.5" y2="679.8" stroke="#2c2e31" stroke-width="1.2" stroke-linecap="butt" />
<polygon points="1047.0,632.1 1080.0,635.3 1080.0,649.3 1047.0,645.5" fill="#86888e" stroke="#2c2e31" stroke-width="0.8" stroke-linejoin="round" />
<polygon points="1047.0,645.5 1080.0,649.3 1080.0,687.3 1047.0,682.2" fill="#b0b1ba" stroke="#2c2e31" stroke-width="0.8" stroke-linejoin="round" />
<polygon points="1047.0,671.7 1080.0,676.3 1080.0,687.3 1047.0,682.2" fill="#a2a3ac" />
<line x1="1063.5" y1="633.7" x2="1063.5" y2="684.8" stroke="#2c2e31" stroke-width="1.2" stroke-linecap="butt" />
<polygon points="1088.0,635.3 1125.0,638.8 1125.0,653.5 1088.0,649.3" fill="#86888e" stroke="#2c2e31" stroke-width="0.8" stroke-linejoin="round" />
<polygon points="1088.0,649.3 1125.0,653.5 1125.0,692.9 1088.0,687.3" fill="#b0b1ba" stroke="#2c2e31" stroke-width="0.8" stroke-linejoin="round" />
<polygon points="1088.0,676.3 1125.0,681.4 1125.0,692.9 1088.0,687.3" fill="#a2a3ac" />
<line x1="1106.5" y1="637.1" x2="1106.5" y2="690.1" stroke="#2c2e31" stroke-width="1.2" stroke-linecap="butt" />
<polygon points="1133.0,638.8 1175.0,642.7 1175.0,658.0 1133.0,653.5" fill="#86888e" stroke="#2c2e31" stroke-width="0.8" stroke-linejoin="round" />
<polygon points="1133.0,653.5 1175.0,658.0 1175.0,699.1 1133.0,692.9" fill="#b0b1ba" stroke="#2c2e31" stroke-width="0.8" stroke-linejoin="round" />
<polygon points="1133.0,681.4 1175.0,687.0 1175.0,699.1 1133.0,692.9" fill="#a2a3ac" />
<line x1="1154.0" y1="640.8" x2="1154.0" y2="696.0" stroke="#2c2e31" stroke-width="1.2" stroke-linecap="butt" />
<polygon points="1183.0,642.7 1230.0,647.0 1230.0,663.1 1183.0,658.0" fill="#86888e" stroke="#2c2e31" stroke-width="0.8" stroke-linejoin="round" />
<polygon points="1183.0,658.0 1230.0,663.1 1230.0,706.0 1183.0,699.1" fill="#b0b1ba" stroke="#2c2e31" stroke-width="0.8" stroke-linejoin="round" />
<polygon points="1183.0,687.0 1230.0,693.2 1230.0,706.0 1183.0,699.1" fill="#a2a3ac" />
<line x1="1206.5" y1="644.9" x2="1206.5" y2="702.6" stroke="#2c2e31" stroke-width="1.2" stroke-linecap="butt" />
<polygon points="914.0,673.6 935.0,677.2 935.0,709.1 914.0,704.5" fill="#a37659" />
<polygon points="943.0,677.2 962.0,680.6 962.0,713.4 943.0,709.1" fill="#a37659" />
<polygon points="970.0,680.6 1000.0,685.3 1000.0,694.0 970.0,688.8" fill="#86888e" stroke="#2c2e31" stroke-width="0.8" stroke-linejoin="round" />
<polygon points="970.0,688.8 1000.0,694.0 1000.0,719.5 970.0,713.4" fill="#b0b1ba" stroke="#2c2e31" stroke-width="0.8" stroke-linejoin="round" />
<polygon points="970.0,707.2 1000.0,712.9 1000.0,719.5 970.0,713.4" fill="#a2a3ac" />
<line x1="985.0" y1="683.0" x2="985.0" y2="716.4" stroke="#2c2e31" stroke-width="1.2" stroke-linecap="butt" />
<polygon points="1008.0,685.3 1039.0,690.2 1039.0,699.2 1008.0,694.0" fill="#86888e" stroke="#2c2e31" stroke-width="0.8" stroke-linejoin="round" />
<polygon points="1008.0,694.0 1039.0,699.2 1039.0,725.7 1008.0,719.5" fill="#b0b1ba" stroke="#2c2e31" stroke-width="0.8" stroke-linejoin="round" />
<polygon points="1008.0,712.9 1039.0,718.8 1039.0,725.7 1008.0,719.5" fill="#a2a3ac" />
<line x1="1023.5" y1="687.8" x2="1023.5" y2="722.6" stroke="#2c2e31" stroke-width="1.2" stroke-linecap="butt" />
<polygon points="1047.0,690.2 1080.0,695.3 1080.0,704.8 1047.0,699.2" fill="#86888e" stroke="#2c2e31" stroke-width="0.8" stroke-linejoin="round" />
<polygon points="1047.0,699.2 1080.0,704.8 1080.0,732.2 1047.0,725.7" fill="#b0b1ba" stroke="#2c2e31" stroke-width="0.8" stroke-linejoin="round" />
<polygon points="1047.0,718.8 1080.0,725.0 1080.0,732.2 1047.0,725.7" fill="#a2a3ac" />
<line x1="1063.5" y1="692.8" x2="1063.5" y2="728.9" stroke="#2c2e31" stroke-width="1.2" stroke-linecap="butt" />
<polygon points="1088.0,695.3 1125.0,700.9 1125.0,710.8 1088.0,704.8" fill="#86888e" stroke="#2c2e31" stroke-width="0.8" stroke-linejoin="round" />
<polygon points="1088.0,704.8 1125.0,710.8 1125.0,739.3 1088.0,732.2" fill="#b0b1ba" stroke="#2c2e31" stroke-width="0.8" stroke-linejoin="round" />
<polygon points="1088.0,725.0 1125.0,731.7 1125.0,739.3 1088.0,732.2" fill="#a2a3ac" />
<line x1="1106.5" y1="698.1" x2="1106.5" y2="735.7" stroke="#2c2e31" stroke-width="1.2" stroke-linecap="butt" />
<polygon points="1133.0,700.9 1175.0,707.1 1175.0,717.6 1133.0,710.8" fill="#86888e" stroke="#2c2e31" stroke-width="0.8" stroke-linejoin="round" />
<polygon points="1133.0,710.8 1175.0,717.6 1175.0,747.3 1133.0,739.3" fill="#b0b1ba" stroke="#2c2e31" stroke-width="0.8" stroke-linejoin="round" />
<polygon points="1133.0,731.7 1175.0,739.2 1175.0,747.3 1133.0,739.3" fill="#a2a3ac" />
<line x1="1154.0" y1="704.0" x2="1154.0" y2="743.3" stroke="#2c2e31" stroke-width="1.2" stroke-linecap="butt" />
<polygon points="1183.0,707.1 1230.0,714.0 1230.0,725.0 1183.0,717.6" fill="#86888e" stroke="#2c2e31" stroke-width="0.8" stroke-linejoin="round" />
<polygon points="1183.0,717.6 1230.0,725.0 1230.0,756.0 1183.0,747.3" fill="#b0b1ba" stroke="#2c2e31" stroke-width="0.8" stroke-linejoin="round" />
<polygon points="1183.0,739.2 1230.0,747.5 1230.0,756.0 1183.0,747.3" fill="#a2a3ac" />
<line x1="1206.5" y1="710.6" x2="1206.5" y2="751.6" stroke="#2c2e31" stroke-width="1.2" stroke-linecap="butt" />
<polygon points="914.0,712.5 935.0,717.1 935.0,749.6 914.0,744.5" fill="#a37659" />
<polygon points="943.0,717.1 962.0,721.4 962.0,754.4 943.0,749.6" fill="#a37659" />
<polygon points="970.0,721.4 1000.0,727.5 1000.0,761.2 970.0,754.4" fill="#a37659" />
<polygon points="1008.0,727.5 1039.0,733.7 1039.0,768.1 1008.0,761.2" fill="#a37659" />
<polygon points="1047.0,733.7 1080.0,740.2 1080.0,775.4 1047.0,768.1" fill="#a37659" />
<polygon points="1088.0,740.2 1125.0,747.3 1125.0,756.5 1088.0,749.1" fill="#86888e" stroke="#2c2e31" stroke-width="0.8" stroke-linejoin="round" />
<polygon points="1088.0,749.1 1125.0,756.5 1125.0,783.4 1088.0,775.4" fill="#b0b1ba" stroke="#2c2e31" stroke-width="0.8" stroke-linejoin="round" />
<polygon points="1088.0,768.6 1125.0,776.3 1125.0,783.4 1088.0,775.4" fill="#a2a3ac" />
<line x1="1106.5" y1="743.7" x2="1106.5" y2="779.4" stroke="#2c2e31" stroke-width="1.2" stroke-linecap="butt" />
<polygon points="1133.0,747.3 1175.0,755.3 1175.0,764.8 1133.0,756.5" fill="#86888e" stroke="#2c2e31" stroke-width="0.8" stroke-linejoin="round" />
<polygon points="1133.0,756.5 1175.0,764.8 1175.0,792.2 1133.0,783.4" fill="#b0b1ba" stroke="#2c2e31" stroke-width="0.8" stroke-linejoin="round" />
<polygon points="1133.0,776.3 1175.0,785.0 1175.0,792.2 1133.0,783.4" fill="#a2a3ac" />
<line x1="1154.0" y1="751.3" x2="1154.0" y2="787.8" stroke="#2c2e31" stroke-width="1.2" stroke-linecap="butt" />
<polygon points="1183.0,755.3 1230.0,764.0 1230.0,773.8 1183.0,764.8" fill="#86888e" stroke="#2c2e31" stroke-width="0.8" stroke-linejoin="round" />
<polygon points="1183.0,764.8 1230.0,773.8 1230.0,802.0 1183.0,792.2" fill="#b0b1ba" stroke="#2c2e31" stroke-width="0.8" stroke-linejoin="round" />
<polygon points="1183.0,785.0 1230.0,794.5 1230.0,802.0 1183.0,792.2" fill="#a2a3ac" />
<line x1="1206.5" y1="759.6" x2="1206.5" y2="797.1" stroke="#2c2e31" stroke-width="1.2" stroke-linecap="butt" />
<line x1="908.0" y1="384.5" x2="908.0" y2="748.5" stroke="#44474a" stroke-width="0.7" stroke-linecap="butt" />
<line x1="912.0" y1="384.5" x2="912.0" y2="748.5" stroke="#44474a" stroke-width="0.7" stroke-linecap="butt" />
<line x1="937.0" y1="379.9" x2="937.0" y2="753.6" stroke="#44474a" stroke-width="0.7" stroke-linecap="butt" />
<line x1="941.0" y1="379.9" x2="941.0" y2="753.6" stroke="#44474a" stroke-width="0.7" stroke-linecap="butt" />
<line x1="964.0" y1="375.6" x2="964.0" y2="758.4" stroke="#44474a" stroke-width="0.7" stroke-linecap="butt" />
<line x1="968.0" y1="375.6" x2="968.0" y2="758.4" stroke="#44474a" stroke-width="0.7" stroke-linecap="butt" />
<line x1="1002.0" y1="369.5" x2="1002.0" y2="765.2" stroke="#44474a" stroke-width="0.7" stroke-linecap="butt" />
<line x1="1006.0" y1="369.5" x2="1006.0" y2="765.2" stroke="#44474a" stroke-width="0.7" stroke-linecap="butt" />
<line x1="1041.0" y1="363.3" x2="1041.0" y2="772.1" stroke="#44474a" stroke-width="0.7" stroke-linecap="butt" />
<line x1="1045.0" y1="363.3" x2="1045.0" y2="772.1" stroke="#44474a" stroke-width="0.7" stroke-linecap="butt" />
<line x1="1082.0" y1="356.8" x2="1082.0" y2="779.4" stroke="#44474a" stroke-width="0.7" stroke-linecap="butt" />
<line x1="1086.0" y1="356.8" x2="1086.0" y2="779.4" stroke="#44474a" stroke-width="0.7" stroke-linecap="butt" />
<line x1="1127.0" y1="349.7" x2="1127.0" y2="787.4" stroke="#44474a" stroke-width="0.7" stroke-linecap="butt" />
<line x1="1131.0" y1="349.7" x2="1131.0" y2="787.4" stroke="#44474a" stroke-width="0.7" stroke-linecap="butt" />
<line x1="1177.0" y1="341.7" x2="1177.0" y2="796.2" stroke="#44474a" stroke-width="0.7" stroke-linecap="butt" />
<line x1="1181.0" y1="341.7" x2="1181.0" y2="796.2" stroke="#44474a" stroke-width="0.7" stroke-linecap="butt" />
<line x1="1232.0" y1="333.0" x2="1232.0" y2="806.0" stroke="#44474a" stroke-width="0.7" stroke-linecap="butt" />
<line x1="1236.0" y1="333.0" x2="1236.0" y2="806.0" stroke="#44474a" stroke-width="0.7" stroke-linecap="butt" />
<line x1="910.0" y1="382.5" x2="1234.0" y2="331.0" stroke="#44474a" stroke-width="0.7" stroke-linecap="butt" />
<line x1="910.0" y1="386.5" x2="1234.0" y2="335.0" stroke="#44474a" stroke-width="0.7" stroke-linecap="butt" />
<line x1="910.0" y1="450.2" x2="1234.0" y2="432.0" stroke="#44474a" stroke-width="0.7" stroke-linecap="butt" />
<line x1="910.0" y1="454.2" x2="1234.0" y2="436.0" stroke="#44474a" stroke-width="0.7" stroke-linecap="butt" />
<line x1="910.0" y1="504.0" x2="1234.0" y2="502.0" stroke="#44474a" stroke-width="0.7" stroke-linecap="butt" />
<line x1="910.0" y1="508.0" x2="1234.0" y2="506.0" stroke="#44474a" stroke-width="0.7" stroke-linecap="butt" />
<line x1="910.0" y1="560.9" x2="1234.0" y2="571.0" stroke="#44474a" stroke-width="0.7" stroke-linecap="butt" />
<line x1="910.0" y1="564.9" x2="1234.0" y2="575.0" stroke="#44474a" stroke-width="0.7" stroke-linecap="butt" />
<line x1="910.0" y1="615.8" x2="1234.0" y2="641.0" stroke="#44474a" stroke-width="0.7" stroke-linecap="butt" />
<line x1="910.0" y1="619.8" x2="1234.0" y2="645.0" stroke="#44474a" stroke-width="0.7" stroke-linecap="butt" />
<line x1="910.0" y1="667.6" x2="1234.0" y2="708.0" stroke="#44474a" stroke-width="0.7" stroke-linecap="butt" />
<line x1="910.0" y1="671.6" x2="1234.0" y2="712.0" stroke="#44474a" stroke-width="0.7" stroke-linecap="butt" />
<line x1="910.0" y1="706.5" x2="1234.0" y2="758.0" stroke="#44474a" stroke-width="0.7" stroke-linecap="butt" />
<line x1="910.0" y1="710.5" x2="1234.0" y2="762.0" stroke="#44474a" stroke-width="0.7" stroke-linecap="butt" />
<line x1="910.0" y1="746.5" x2="1234.0" y2="804.0" stroke="#44474a" stroke-width="0.7" stroke-linecap="butt" />
<line x1="910.0" y1="750.5" x2="1234.0" y2="808.0" stroke="#44474a" stroke-width="0.7" stroke-linecap="butt" />
<line x1="909.0" y1="383.0" x2="1236.0" y2="332.0" stroke="#3d3f42" stroke-width="1.2" stroke-linecap="butt" />
<polygon points="962.0,727.0 969.0,727.0 969.0,740.0 962.0,740.0" fill="#e8a0a0" />
<polygon points="1052.0,757.0 1060.0,757.0 1060.0,774.0 1052.0,774.0" fill="#d21c1c" stroke="#888" stroke-width="0.6" stroke-linejoin="round" />
<polygon points="1236.0,333.0 1289.0,356.0 1286.0,806.0 1236.0,806.0" fill="#9fa2a6" stroke="#3d3f42" stroke-width="0.8" stroke-linejoin="round" />
<polygon points="1240.0,337.6 1262.0,346.5 1262.0,435.0 1240.0,431.6" fill="#878a91" stroke="#2c2e31" stroke-width="0.7" stroke-linejoin="round" />
<line x1="1251.0" y1="342.1" x2="1251.0" y2="433.3" stroke="#c0c3c7" stroke-width="1.2" stroke-linecap="butt" />
<polygon points="1266.0,348.1 1284.0,355.4 1284.0,438.4 1266.0,435.6" fill="#878a91" stroke="#2c2e31" stroke-width="0.7" stroke-linejoin="round" />
<line x1="1275.0" y1="351.8" x2="1275.0" y2="437.0" stroke="#c0c3c7" stroke-width="1.2" stroke-linecap="butt" />
<polygon points="1240.0,437.6 1262.0,441.0 1262.0,503.5 1240.0,501.4" fill="#878a91" stroke="#2c2e31" stroke-width="0.7" stroke-linejoin="round" />
<line x1="1251.0" y1="439.3" x2="1251.0" y2="502.4" stroke="#c0c3c7" stroke-width="1.2" stroke-linecap="butt" />
<polygon points="1266.0,441.6 1284.0,444.4 1284.0,505.6 1266.0,503.9" fill="#878a91" stroke="#2c2e31" stroke-width="0.7" stroke-linejoin="round" />
<line x1="1275.0" y1="443.0" x2="1275.0" y2="504.8" stroke="#c0c3c7" stroke-width="1.2" stroke-linecap="butt" />
<polygon points="1240.0,507.4 1262.0,509.5 1262.0,570.0 1240.0,570.0" fill="#878a91" stroke="#2c2e31" stroke-width="0.7" stroke-linejoin="round" />
<line x1="1251.0" y1="508.4" x2="1251.0" y2="570.0" stroke="#c0c3c7" stroke-width="1.2" stroke-linecap="butt" />
<polygon points="1266.0,509.9 1284.0,511.6 1284.0,570.0 1266.0,570.0" fill="#878a91" stroke="#2c2e31" stroke-width="0.7" stroke-linejoin="round" />
<line x1="1275.0" y1="510.8" x2="1275.0" y2="570.0" stroke="#c0c3c7" stroke-width="1.2" stroke-linecap="butt" />
<polygon points="1240.0,576.0 1262.0,576.0 1262.0,637.5 1240.0,639.6" fill="#878a91" stroke="#2c2e31" stroke-width="0.7" stroke-linejoin="round" />
<line x1="1251.0" y1="576.0" x2="1251.0" y2="638.6" stroke="#c0c3c7" stroke-width="1.2" stroke-linecap="butt" />
<polygon points="1266.0,576.0 1284.0,576.0 1284.0,635.4 1266.0,637.1" fill="#878a91" stroke="#2c2e31" stroke-width="0.7" stroke-linejoin="round" />
<line x1="1275.0" y1="576.0" x2="1275.0" y2="636.2" stroke="#c0c3c7" stroke-width="1.2" stroke-linecap="butt" />
<polygon points="1240.0,645.6 1262.0,643.5 1262.0,703.5 1240.0,706.5" fill="#878a91" stroke="#2c2e31" stroke-width="0.7" stroke-linejoin="round" />
<line x1="1251.0" y1="644.6" x2="1251.0" y2="705.0" stroke="#c0c3c7" stroke-width="1.2" stroke-linecap="butt" />
<polygon points="1266.0,643.1 1284.0,641.4 1284.0,700.5 1266.0,703.0" fill="#878a91" stroke="#2c2e31" stroke-width="0.7" stroke-linejoin="round" />
<line x1="1275.0" y1="642.2" x2="1275.0" y2="701.8" stroke="#c0c3c7" stroke-width="1.2" stroke-linecap="butt" />
<polygon points="1240.0,712.5 1262.0,709.5 1262.0,759.0 1240.0,757.3" fill="#878a91" stroke="#2c2e31" stroke-width="0.7" stroke-linejoin="round" />
<line x1="1251.0" y1="711.0" x2="1251.0" y2="758.2" stroke="#c0c3c7" stroke-width="1.2" stroke-linecap="butt" />
<polygon points="1266.0,709.0 1284.0,706.5 1284.0,760.7 1266.0,759.3" fill="#878a91" stroke="#2c2e31" stroke-width="0.7" stroke-linejoin="round" />
<line x1="1275.0" y1="707.8" x2="1275.0" y2="760.0" stroke="#c0c3c7" stroke-width="1.2" stroke-linecap="butt" />
<polygon points="1240.0,763.3 1262.0,765.0 1262.0,803.0 1240.0,803.0" fill="#878a91" stroke="#2c2e31" stroke-width="0.7" stroke-linejoin="round" />
<line x1="1251.0" y1="764.2" x2="1251.0" y2="803.0" stroke="#c0c3c7" stroke-width="1.2" stroke-linecap="butt" />
<polygon points="1266.0,765.3 1284.0,766.7 1284.0,803.0 1266.0,803.0" fill="#878a91" stroke="#2c2e31" stroke-width="0.7" stroke-linejoin="round" />
<line x1="1275.0" y1="766.0" x2="1275.0" y2="803.0" stroke="#c0c3c7" stroke-width="1.2" stroke-linecap="butt" />
<polygon points="1107.0,702.0 1236.0,713.0 1248.0,718.0 1248.0,820.0 1236.0,818.0 1107.0,797.0" fill="#babdc0" stroke="#3d3f42" stroke-width="0.9" stroke-linejoin="round" />
<polygon points="1117.0,716.0 1158.0,719.0 1158.0,734.0 1117.0,731.0" fill="url(#louv)" stroke="#444" stroke-width="0.6" stroke-linejoin="round" />
<polygon points="1166.0,720.0 1216.0,724.0 1216.0,740.0 1166.0,736.0" fill="url(#louv)" stroke="#444" stroke-width="0.6" stroke-linejoin="round" />
<polygon points="1117.0,735.0 1158.0,738.0 1158.0,760.0 1117.0,757.0" fill="#a6a8b0" stroke="#333" stroke-width="0.7" stroke-linejoin="round" />
<polygon points="1166.0,740.0 1216.0,744.0 1216.0,765.0 1166.0,762.0" fill="#a6a8b0" stroke="#333" stroke-width="0.7" stroke-linejoin="round" />
<polygon points="1117.0,769.0 1158.0,772.0 1158.0,806.0 1117.0,801.0" fill="#b3b4bc" stroke="#333" stroke-width="0.8" stroke-linejoin="round" />
<polygon points="1166.0,774.0 1216.0,778.0 1216.0,812.0 1166.0,808.0" fill="#b9adb3" stroke="#333" stroke-width="0.8" stroke-linejoin="round" />
<line x1="1138.0" y1="772.0" x2="1138.0" y2="804.0" stroke="#555" stroke-width="1" stroke-linecap="butt" />
<line x1="1192.0" y1="777.0" x2="1192.0" y2="810.0" stroke="#555" stroke-width="1" stroke-linecap="butt" />
<line x1="1107.0" y1="704.0" x2="1248.0" y2="719.0" stroke="#555" stroke-width="1" stroke-linecap="butt" />
<line x1="1236.0" y1="713.0" x2="1236.0" y2="818.0" stroke="#555" stroke-width="0.8" stroke-linecap="butt" />
<polygon points="903.0,748.0 1107.0,783.0 1107.0,792.0 903.0,756.0" fill="#c9cbcd" stroke="#777" stroke-width="0.6" stroke-linejoin="round" />
<polygon points="1246.0,806.0 1400.0,792.0 1400.0,805.0 1246.0,818.0" fill="#cfd1d3" stroke="#777" stroke-width="0.6" stroke-linejoin="round" />
<polygon points="1284.0,783.0 1373.0,799.0 1373.0,812.0 1284.0,795.0" fill="#dadcde" stroke="#888" stroke-width="0.6" stroke-linejoin="round" />
<path d="M420 701 L572 757 L780 846 L1020 955 Q1030 959 1040 951 L1124 884" stroke="#3f4042" stroke-width="10" fill="none" stroke-linejoin="round" stroke-linecap="round"/>
<path d="M420 701 L572 757 L780 846 L1020 955 Q1030 959 1040 951 L1124 884" stroke="#636467" stroke-width="3.5" fill="none" stroke-linejoin="round" />
<polygon points="745.0,750.0 1212.0,871.0 1212.0,881.0 745.0,760.0" fill="#e4552a" stroke="#9c3518" stroke-width="0.8" stroke-linejoin="round" />
<polygon points="735.0,762.0 1240.0,901.0 1240.0,908.0 735.0,769.0" fill="#1f8a2a" stroke="#0f4a14" stroke-width="0.6" stroke-linejoin="round" />
<line x1="745.0" y1="748.0" x2="1212.0" y2="869.0" stroke="#5a2010" stroke-width="1.5" stroke-linecap="butt" />
<line x1="800.0" y1="784.0" x2="1286.0" y2="931.0" stroke="#5a1410" stroke-width="2.2" stroke-linecap="butt" />
<line x1="800.0" y1="752.0" x2="1341.0" y2="876.0" stroke="#2b1a12" stroke-width="1.8" stroke-linecap="butt" />
<line x1="820.0" y1="790.0" x2="1240.0" y2="912.0" stroke="#1a1a1a" stroke-width="1" stroke-linecap="butt" />
<line x1="1000.0" y1="835.0" x2="1100.0" y2="800.0" stroke="#222" stroke-width="1" stroke-linecap="butt" />
<polygon points="887.0,793.0 899.0,793.0 899.0,812.0 887.0,812.0" fill="#d9b9a8" stroke="#6b5a50" stroke-width="0.8" stroke-linejoin="round" />
<polygon points="959.0,815.0 971.0,815.0 971.0,834.0 959.0,834.0" fill="#d9b9a8" stroke="#6b5a50" stroke-width="0.8" stroke-linejoin="round" />
<polygon points="1054.0,842.0 1066.0,842.0 1066.0,861.0 1054.0,861.0" fill="#d9b9a8" stroke="#6b5a50" stroke-width="0.8" stroke-linejoin="round" />
<polygon points="1119.0,858.0 1131.0,858.0 1131.0,877.0 1119.0,877.0" fill="#d9b9a8" stroke="#6b5a50" stroke-width="0.8" stroke-linejoin="round" />
<polygon points="1164.0,872.0 1176.0,872.0 1176.0,891.0 1164.0,891.0" fill="#d9b9a8" stroke="#6b5a50" stroke-width="0.8" stroke-linejoin="round" />
<polygon points="1521.0,654.0 1529.0,658.0 1414.0,848.0 1406.0,843.0" fill="#a4a6a9" stroke="#6a6b6d" stroke-width="0.7" stroke-linejoin="round" />
<line x1="1501.0" y1="636.0" x2="1550.0" y2="641.0" stroke="#111" stroke-width="1.5" stroke-linecap="butt" />
<line x1="1583.0" y1="637.0" x2="1574.0" y2="743.0" stroke="#111" stroke-width="2.5" stroke-linecap="butt" />
<line x1="1559.0" y1="640.0" x2="1546.0" y2="685.0" stroke="#111" stroke-width="2" stroke-linecap="butt" />
<line x1="1544.0" y1="685.0" x2="1494.0" y2="860.0" stroke="#5a1410" stroke-width="2.5" stroke-linecap="butt" />
<line x1="1542.0" y1="648.0" x2="1490.0" y2="755.0" stroke="#1e6e1e" stroke-width="2.5" stroke-linecap="butt" />
<line x1="1562.0" y1="743.0" x2="1547.0" y2="835.0" stroke="#2a1a12" stroke-width="1.8" stroke-linecap="butt" />
<line x1="1566.0" y1="743.0" x2="1551.0" y2="835.0" stroke="#2a1a12" stroke-width="1.8" stroke-linecap="butt" />
<line x1="1570.0" y1="743.0" x2="1555.0" y2="835.0" stroke="#2a1a12" stroke-width="1.8" stroke-linecap="butt" />
<line x1="1581.0" y1="701.0" x2="1699.0" y2="714.0" stroke="#111" stroke-width="2" stroke-linecap="butt" />
<line x1="1705.0" y1="715.0" x2="1818.0" y2="737.0" stroke="#111" stroke-width="2" stroke-linecap="butt" />
<line x1="1822.0" y1="739.0" x2="1905.0" y2="806.0" stroke="#1a1410" stroke-width="2.5" stroke-linecap="butt" />
<polygon points="1838.0,750.0 1851.0,752.0 1851.0,764.0 1838.0,762.0" fill="#d9b9a8" stroke="#6b5a50" stroke-width="0.6" stroke-linejoin="round" />
<polygon points="1882.0,786.0 1895.0,788.0 1895.0,800.0 1882.0,798.0" fill="#d9b9a8" stroke="#6b5a50" stroke-width="0.6" stroke-linejoin="round" />
<line x1="1604.0" y1="755.0" x2="1905.0" y2="798.0" stroke="#1e6e1e" stroke-width="3.2" stroke-linecap="butt" />
<line x1="1495.0" y1="786.0" x2="1582.0" y2="774.0" stroke="#1e6e1e" stroke-width="3.2" stroke-linecap="butt" />
<line x1="1568.0" y1="763.0" x2="1630.0" y2="772.0" stroke="#222" stroke-width="1.2" stroke-linecap="butt" />
<line x1="1570.0" y1="778.0" x2="1653.0" y2="790.0" stroke="#222" stroke-width="1.2" stroke-linecap="butt" />
<polygon points="1531.0,664.0 1540.0,664.0 1540.0,676.0 1531.0,676.0" fill="#b5b04a" stroke="#555" stroke-width="0.5" stroke-linejoin="round" />
<polygon points="1546.0,688.0 1558.0,688.0 1560.0,718.0 1544.0,718.0" fill="#77797c" stroke="#333" stroke-width="0.7" stroke-linejoin="round" />
<ellipse cx="1552" cy="707" rx="8" ry="9" fill="#7d7f82" stroke="#333" stroke-width="0.8"/>
<line x1="1493.0" y1="722.0" x2="1633.0" y2="739.0" stroke="#111" stroke-width="7" stroke-linecap="butt" />
<polygon points="1631.0,725.0 1666.0,727.0 1666.0,754.0 1631.0,752.0" fill="#b9bcbf" stroke="#555" stroke-width="0.8" stroke-linejoin="round" />
<polygon points="1648.0,708.0 1662.0,708.0 1662.0,729.0 1648.0,729.0" fill="#c9ccce" stroke="#666" stroke-width="0.6" stroke-linejoin="round" />
<line x1="1559.0" y1="855.0" x2="1799.0" y2="900.0" stroke="#2a1a10" stroke-width="2.5" stroke-linecap="butt" />
<polygon points="1682.0,872.0 1696.0,874.0 1696.0,888.0 1682.0,886.0" fill="#d9b9a8" stroke="#6b5a50" stroke-width="0.7" stroke-linejoin="round" />
<line x1="1467.0" y1="919.0" x2="1605.0" y2="977.0" stroke="#2a1a10" stroke-width="2.5" stroke-linecap="butt" />
<line x1="1525.0" y1="945.0" x2="1550.0" y2="955.0" stroke="#e47a2a" stroke-width="2.5" stroke-linecap="butt" />
<line x1="1400.0" y1="934.0" x2="1543.0" y2="862.0" stroke="#2a1a12" stroke-width="2.5" stroke-linecap="butt" />
<polygon points="1212.0,868.0 1300.0,880.0 1305.0,898.0 1290.0,918.0 1212.0,905.0" fill="#8c8d90" stroke="#555" stroke-width="0.6" stroke-linejoin="round" />
<polygon points="1290.0,862.0 1330.0,870.0 1330.0,885.0 1290.0,880.0" fill="#a6a8ab" stroke="#555" stroke-width="0.6" stroke-linejoin="round" />
<polygon points="1395.0,860.0 1420.0,858.0 1420.0,885.0 1398.0,890.0" fill="#96989b" stroke="#555" stroke-width="0.6" stroke-linejoin="round" />
<polygon points="1306.0,898.0 1339.0,894.0 1367.0,883.0 1385.0,876.0 1402.0,887.0 1396.0,896.0 1330.0,914.0 1317.0,911.0" fill="#e4552a" stroke="#9c3518" stroke-width="0.8" stroke-linejoin="round" />
<polygon points="1240.0,900.0 1270.0,912.0 1334.0,924.0 1394.0,903.0 1420.0,892.0 1422.0,900.0 1336.0,932.0 1268.0,920.0 1240.0,908.0" fill="#1f8a2a" stroke="#0f4a14" stroke-width="0.6" stroke-linejoin="round" />
<polygon points="1241.5,876.0 1267.5,876.0 1267.5,933.0 1241.5,933.0" fill="#dcc3b2" />
<ellipse cx="1254.5" cy="933" rx="13" ry="4.94" fill="#dcc3b2" stroke="#6b5a50" stroke-width="0.8"/>
<line x1="1241.5" y1="876.0" x2="1241.5" y2="933.0" stroke="#6b5a50" stroke-width="0.8" stroke-linecap="butt" />
<line x1="1267.5" y1="876.0" x2="1267.5" y2="933.0" stroke="#6b5a50" stroke-width="0.8" stroke-linecap="butt" />
<ellipse cx="1254.5" cy="876" rx="13" ry="4.94" fill="#e6d2c4" stroke="#6b5a50" stroke-width="0.8"/>
<polygon points="1251.0,874.0 1258.0,874.0 1258.0,878.0 1251.0,878.0" fill="#222" />
<polygon points="1338.0,880.0 1366.0,880.0 1366.0,938.0 1338.0,938.0" fill="#dcc3b2" />
<ellipse cx="1352" cy="938" rx="14" ry="5.32" fill="#dcc3b2" stroke="#6b5a50" stroke-width="0.8"/>
<line x1="1338.0" y1="880.0" x2="1338.0" y2="938.0" stroke="#6b5a50" stroke-width="0.8" stroke-linecap="butt" />
<line x1="1366.0" y1="880.0" x2="1366.0" y2="938.0" stroke="#6b5a50" stroke-width="0.8" stroke-linecap="butt" />
<ellipse cx="1352" cy="880" rx="14" ry="5.32" fill="#e6d2c4" stroke="#6b5a50" stroke-width="0.8"/>
<polygon points="1348.5,878.0 1355.5,878.0 1355.5,882.0 1348.5,882.0" fill="#222" />
<polygon points="1413.5,852.0 1439.5,852.0 1439.5,903.0 1413.5,903.0" fill="#dcc3b2" />
<ellipse cx="1426.5" cy="903" rx="13" ry="4.94" fill="#dcc3b2" stroke="#6b5a50" stroke-width="0.8"/>
<line x1="1413.5" y1="852.0" x2="1413.5" y2="903.0" stroke="#6b5a50" stroke-width="0.8" stroke-linecap="butt" />
<line x1="1439.5" y1="852.0" x2="1439.5" y2="903.0" stroke="#6b5a50" stroke-width="0.8" stroke-linecap="butt" />
<ellipse cx="1426.5" cy="852" rx="13" ry="4.94" fill="#e6d2c4" stroke="#6b5a50" stroke-width="0.8"/>
<polygon points="1423.0,850.0 1430.0,850.0 1430.0,854.0 1423.0,854.0" fill="#222" />
<polygon points="1471.0,764.0 1495.0,764.0 1495.0,792.0 1471.0,792.0" fill="#dcc3b2" />
<ellipse cx="1483" cy="792" rx="12" ry="4.5600000000000005" fill="#dcc3b2" stroke="#6b5a50" stroke-width="0.8"/>
<line x1="1471.0" y1="764.0" x2="1471.0" y2="792.0" stroke="#6b5a50" stroke-width="0.8" stroke-linecap="butt" />
<line x1="1495.0" y1="764.0" x2="1495.0" y2="792.0" stroke="#6b5a50" stroke-width="0.8" stroke-linecap="butt" />
<ellipse cx="1483" cy="764" rx="12" ry="4.5600000000000005" fill="#e6d2c4" stroke="#6b5a50" stroke-width="0.8"/>
<polygon points="1479.5,762.0 1486.5,762.0 1486.5,766.0 1479.5,766.0" fill="#222" />
<polygon points="1282.5,913.0 1296.5,913.0 1296.5,931.0 1282.5,931.0" fill="#d9b9a8" stroke="#6b5a50" stroke-width="0.8" stroke-linejoin="round" />
<polygon points="1282.5,913.0 1296.5,913.0 1296.5,917.0 1282.5,917.0" fill="#e9d8cc" />
<polygon points="1390.0,894.0 1404.0,894.0 1404.0,912.0 1390.0,912.0" fill="#d9b9a8" stroke="#6b5a50" stroke-width="0.8" stroke-linejoin="round" />
<polygon points="1390.0,894.0 1404.0,894.0 1404.0,898.0 1390.0,898.0" fill="#e9d8cc" />
<polygon points="1424.0,911.0 1438.0,911.0 1438.0,929.0 1424.0,929.0" fill="#d9b9a8" stroke="#6b5a50" stroke-width="0.8" stroke-linejoin="round" />
<polygon points="1424.0,911.0 1438.0,911.0 1438.0,915.0 1424.0,915.0" fill="#e9d8cc" />
<polygon points="1455.6,904.0 1469.6,904.0 1469.6,922.0 1455.6,922.0" fill="#d9b9a8" stroke="#6b5a50" stroke-width="0.8" stroke-linejoin="round" />
<polygon points="1455.6,904.0 1469.6,904.0 1469.6,908.0 1455.6,908.0" fill="#e9d8cc" />
<polygon points="1478.6,870.0 1492.6,870.0 1492.6,888.0 1478.6,888.0" fill="#d9b9a8" stroke="#6b5a50" stroke-width="0.8" stroke-linejoin="round" />
<polygon points="1478.6,870.0 1492.6,870.0 1492.6,874.0 1478.6,874.0" fill="#e9d8cc" />
<polygon points="1489.6,891.0 1503.6,891.0 1503.6,909.0 1489.6,909.0" fill="#d9b9a8" stroke="#6b5a50" stroke-width="0.8" stroke-linejoin="round" />
<polygon points="1489.6,891.0 1503.6,891.0 1503.6,895.0 1489.6,895.0" fill="#e9d8cc" />
<polygon points="1482.0,857.0 1496.0,857.0 1496.0,875.0 1482.0,875.0" fill="#d9b9a8" stroke="#6b5a50" stroke-width="0.8" stroke-linejoin="round" />
<polygon points="1482.0,857.0 1496.0,857.0 1496.0,861.0 1482.0,861.0" fill="#e9d8cc" />
<polygon points="1338.0,901.0 1352.0,901.0 1352.0,919.0 1338.0,919.0" fill="#d9b9a8" stroke="#6b5a50" stroke-width="0.8" stroke-linejoin="round" />
<polygon points="1338.0,901.0 1352.0,901.0 1352.0,905.0 1338.0,905.0" fill="#e9d8cc" />
<polygon points="1298.0,820.0 1324.0,823.0 1324.0,837.0 1298.0,834.0" fill="#cfd1d3" stroke="#6a6b6d" stroke-width="0.7" stroke-linejoin="round" />
<polygon points="1298.0,820.0 1304.0,816.0 1330.0,819.0 1324.0,823.0" fill="#e2e3e5" stroke="#6a6b6d" stroke-width="0.6" stroke-linejoin="round" />
<polygon points="1326.0,828.0 1350.0,831.0 1350.0,845.0 1326.0,842.0" fill="#cfd1d3" stroke="#6a6b6d" stroke-width="0.7" stroke-linejoin="round" />
<polygon points="1326.0,828.0 1332.0,824.0 1356.0,827.0 1350.0,831.0" fill="#e2e3e5" stroke="#6a6b6d" stroke-width="0.6" stroke-linejoin="round" />
<polygon points="1352.0,834.0 1374.0,837.0 1374.0,851.0 1352.0,848.0" fill="#cfd1d3" stroke="#6a6b6d" stroke-width="0.7" stroke-linejoin="round" />
<polygon points="1352.0,834.0 1358.0,830.0 1380.0,833.0 1374.0,837.0" fill="#e2e3e5" stroke="#6a6b6d" stroke-width="0.6" stroke-linejoin="round" />
<polygon points="1378.0,812.0 1398.0,815.0 1398.0,828.0 1378.0,825.0" fill="#cfd1d3" stroke="#6a6b6d" stroke-width="0.7" stroke-linejoin="round" />
<polygon points="1378.0,812.0 1384.0,808.0 1404.0,811.0 1398.0,815.0" fill="#e2e3e5" stroke="#6a6b6d" stroke-width="0.6" stroke-linejoin="round" />
<polygon points="1404.0,790.0 1422.0,793.0 1422.0,805.0 1404.0,802.0" fill="#cfd1d3" stroke="#6a6b6d" stroke-width="0.7" stroke-linejoin="round" />
<polygon points="1404.0,790.0 1410.0,786.0 1428.0,789.0 1422.0,793.0" fill="#e2e3e5" stroke="#6a6b6d" stroke-width="0.6" stroke-linejoin="round" />
<polygon points="1276.0,806.0 1298.0,809.0 1298.0,821.0 1276.0,818.0" fill="#cfd1d3" stroke="#6a6b6d" stroke-width="0.7" stroke-linejoin="round" />
<polygon points="1276.0,806.0 1282.0,802.0 1304.0,805.0 1298.0,809.0" fill="#e2e3e5" stroke="#6a6b6d" stroke-width="0.6" stroke-linejoin="round" />
<polygon points="1250.0,796.0 1272.0,799.0 1272.0,811.0 1250.0,808.0" fill="#cfd1d3" stroke="#6a6b6d" stroke-width="0.7" stroke-linejoin="round" />
<polygon points="1250.0,796.0 1256.0,792.0 1278.0,795.0 1272.0,799.0" fill="#e2e3e5" stroke="#6a6b6d" stroke-width="0.6" stroke-linejoin="round" />
<line x1="1316.0" y1="728.0" x2="1316.0" y2="838.0" stroke="#3a0d0a" stroke-width="3.5" stroke-linecap="butt" />
<line x1="1316.0" y1="728.0" x2="1316.0" y2="838.0" stroke="#6e1412" stroke-width="1.6" stroke-linecap="butt" />
<line x1="1335.0" y1="725.0" x2="1335.0" y2="834.0" stroke="#3a0d0a" stroke-width="3.5" stroke-linecap="butt" />
<line x1="1335.0" y1="725.0" x2="1335.0" y2="834.0" stroke="#6e1412" stroke-width="1.6" stroke-linecap="butt" />
<line x1="1355.0" y1="718.0" x2="1355.0" y2="822.0" stroke="#3a0d0a" stroke-width="3.5" stroke-linecap="butt" />
<line x1="1355.0" y1="718.0" x2="1355.0" y2="822.0" stroke="#6e1412" stroke-width="1.6" stroke-linecap="butt" />
<line x1="1368.0" y1="714.0" x2="1368.0" y2="814.0" stroke="#3a0d0a" stroke-width="3.5" stroke-linecap="butt" />
<line x1="1368.0" y1="714.0" x2="1368.0" y2="814.0" stroke="#6e1412" stroke-width="1.6" stroke-linecap="butt" />
<line x1="1384.0" y1="728.0" x2="1384.0" y2="806.0" stroke="#3a0d0a" stroke-width="3.5" stroke-linecap="butt" />
<line x1="1384.0" y1="728.0" x2="1384.0" y2="806.0" stroke="#6e1412" stroke-width="1.6" stroke-linecap="butt" />
<line x1="1393.0" y1="722.0" x2="1393.0" y2="795.0" stroke="#3a0d0a" stroke-width="3.5" stroke-linecap="butt" />
<line x1="1393.0" y1="722.0" x2="1393.0" y2="795.0" stroke="#6e1412" stroke-width="1.6" stroke-linecap="butt" />
<line x1="1410.0" y1="705.0" x2="1410.0" y2="786.0" stroke="#3a0d0a" stroke-width="3.5" stroke-linecap="butt" />
<line x1="1410.0" y1="705.0" x2="1410.0" y2="786.0" stroke="#6e1412" stroke-width="1.6" stroke-linecap="butt" />
<line x1="1423.0" y1="697.0" x2="1423.0" y2="775.0" stroke="#3a0d0a" stroke-width="3.5" stroke-linecap="butt" />
<line x1="1423.0" y1="697.0" x2="1423.0" y2="775.0" stroke="#6e1412" stroke-width="1.6" stroke-linecap="butt" />
<line x1="1350.0" y1="840.0" x2="1352.0" y2="950.0" stroke="#c2401e" stroke-width="3" stroke-linecap="butt" />
<line x1="1297.0" y1="933.0" x2="1483.0" y2="894.0" stroke="#6a1410" stroke-width="2.5" stroke-linecap="butt" />
<line x1="1460.0" y1="880.0" x2="1555.0" y2="862.0" stroke="#6a1410" stroke-width="3" stroke-linecap="butt" />
<line x1="1174.0" y1="881.0" x2="1352.0" y2="946.0" stroke="#2a1a12" stroke-width="2.2" stroke-linecap="butt" />
<line x1="1340.0" y1="876.0" x2="1410.0" y2="845.0" stroke="#222" stroke-width="1.5" stroke-linecap="butt" />
<line x1="1100.0" y1="813.0" x2="1240.0" y2="843.0" stroke="#2a1a12" stroke-width="2" stroke-linecap="butt" />
<line x1="1240.0" y1="843.0" x2="1341.0" y2="876.0" stroke="#2a1a12" stroke-width="2" stroke-linecap="butt" />
<line x1="1352.0" y1="946.0" x2="1470.0" y2="905.0" stroke="#3a1a10" stroke-width="2.5" stroke-linecap="butt" />
<line x1="1470.0" y1="905.0" x2="1620.0" y2="825.0" stroke="#2a1a12" stroke-width="2.5" stroke-linecap="butt" />
<path d="M1334 916 Q1345 946 1371 942" stroke="#e47a2a" stroke-width="2.5" fill="none" stroke-linejoin="round" />
<line x1="1350.0" y1="920.0" x2="1290.0" y2="965.0" stroke="#222" stroke-width="1.5" stroke-linecap="butt" />
<line x1="1300.0" y1="880.0" x2="1420.0" y2="820.0" stroke="#222" stroke-width="1" stroke-linecap="butt" />
<path d="M1477 793 L1442 870" stroke="#1e7a1e" stroke-width="9" fill="none" stroke-linejoin="round" stroke-linecap="round"/>
<polygon points="1490.0,825.0 1521.0,827.0 1521.0,858.0 1490.0,856.0" fill="#1f9a2a" stroke="#0f5a14" stroke-width="0.8" stroke-linejoin="round" />
<line x1="1521.0" y1="842.0" x2="1548.0" y2="838.0" stroke="#2a1a12" stroke-width="4" stroke-linecap="butt" /></svg></div><!--/scene-->

<div id="ovl">
<svg style="left:0;top:0" width="1917" height="1007" viewBox="0 0 1917 1007">
 <g fill="none" stroke="#3a3a3a" stroke-width="1.3" stroke-linejoin="round">
  <path d="M435 129.5 L441.2 133 V140 L435 143.2 L428.8 140 V133 Z"/>
  <path d="M435 129.5 V134.5 M435 137.8 V143 M429 136.2 H433.4 M436.6 136.2 H441"/>
  <circle cx="435" cy="136.2" r="1.6"/>
  <rect x="1880.6" y="129.6" width="12.6" height="12.8" rx="2.4" fill="#fff" stroke="#6a6a6a"/><path d="M1880.6 134 H1893.2" stroke="#6a6a6a"/>
 </g>
 <text x="447" y="141" font-family="Liberation Sans" font-size="12.5" fill="#1a1a1a" stroke="#1a1a1a" stroke-width="0.25">3D</text>
 <!-- minimap -->
 <rect x="1801" y="875" width="99" height="100" fill="rgba(255,255,255,0.18)"/>
 <path d="M1801.5 975 V875.5 H1900" fill="none" stroke="rgba(255,255,255,0.6)" stroke-width="1"/>
 <line x1="1801" y1="901" x2="1903" y2="922" stroke="#6d6560" stroke-width="2.5"/>
 <rect x="1901" y="919" width="4" height="4" fill="#111"/>
 <path d="M1838 905 L1843 898 L1857 901 L1857 919 L1843 916 Z" fill="#d8d2ce" stroke="#8a8480" stroke-width="0.8"/>
 <path d="M1826 915 L1850 919 L1838 934 Z" fill="#f2c23c" opacity="0.9"/>
 <circle cx="1825.5" cy="914.5" r="5" fill="#f0b020" stroke="#3a3020" stroke-width="1.2"/>
 <path d="M1825 926 L1831 923 M1828 924.5 L1840 945 M1836 947 L1844 942" fill="none" stroke="#b0b6ba" stroke-width="1.6"/>
 <g fill="none" stroke="#777" stroke-width="1.2">
  <path d="M1803.5 880 V877 H1806.5 M1812 877 H1815 V880 M1815 885 V888 H1812 M1806.5 888 H1803.5 V885"/>
  <path d="M1806 886 L1809 883 M1813 879 L1810 882"/>
  <path d="M1890 879 L1897 887 M1897 879 L1893 884"/>
 </g>
 <defs><clipPath id="mmc"><rect x="1801" y="870" width="99" height="30"/></clipPath></defs><text clip-path="url(#mmc)" x="1827" y="891" font-family="Liberation Sans" font-size="12" fill="#1a1a1a" letter-spacing="0.1" stroke="#1a1a1a" stroke-width="0.25">(A - FAC) LEVEL</text>
</svg>
</div><!--/ovl-->
<!-- TOP BAR -->
<div id="top" class="a">
 <svg style="left:0;top:0" width="60" height="60" viewBox="0 0 60 60">
  <path d="M17 40 V26.5 Q17 25.5 18 24.8 L28.3 17.4 Q30 16.2 31.7 17.4 L42 24.8 Q43 25.5 43 26.5 V40 Q43 42.6 40.4 42.6 H35.4 Q32.4 42.6 32.4 39.6 V36 Q32.4 32.6 35.8 32.6 H38 M27.6 40 V36 Q27.6 32.6 24.2 32.6 H22 M17 40 Q17 42.6 19.6 42.6 H24.6 Q27.6 42.6 27.6 39.6" fill="none" stroke="#f4f6fa" stroke-width="1.8" stroke-linecap="round" stroke-linejoin="round"/>
  <path d="M30 31.5 V25" stroke="#f4f6fa" stroke-width="1.8" stroke-linecap="round"/>
  <path d="M30 22 L33.6 26.2 H26.4 Z M19 32.6 L23.2 28.8 V36.4 Z M41 32.6 L36.8 28.8 V36.4 Z" fill="#f4f6fa"/>
 </svg>
 <div class="nav" style="left:74px;letter-spacing:-0.15px">FILE</div>
 <div class="nav" style="left:128px;color:#e7b649;letter-spacing:-0.2px">MODEL</div>
 <div class="a" style="left:128px;top:37px;width:46px;height:2px;background:#e7b649"></div>
 <div class="nav" style="left:202px;letter-spacing:-0.5px">CHECKING</div>
 <div class="nav" style="left:295px;letter-spacing:0.45px">COMMUNICATION</div>
 <div class="nav" style="left:438px;letter-spacing:0.05px">INFORMATION TAKEOFF</div>
 <div class="nav" style="left:617px;letter-spacing:-0.47px">BCF LIVE CONNECTOR</div>
 <div class="nav" style="left:781px;letter-spacing:-0.38px">COBIE</div>
 <div class="nav" style="left:848px;letter-spacing:-0.05px">AM VIEW</div>
 <div class="nav" style="left:932px;letter-spacing:0.12px">COMPARTMENTATION</div>
 <div class="nav" style="left:1101px;top:20px;font-size:18px">+</div>
 <div class="nav" style="left:1811px;letter-spacing:-0.5px">VIEWS</div>
 <svg style="left:1874px;top:19px" width="22" height="22" viewBox="0 0 22 22"><circle cx="10.9" cy="10.9" r="10.5" fill="#e8ecf2"/><path d="M7.6 8.4 Q7.6 5 11 5 Q14.4 5 14.4 8 Q14.4 9.8 12.4 10.9 Q11 11.7 11 13.3 V14" fill="none" stroke="#2c6db5" stroke-width="1.9" stroke-linecap="round"/><rect x="9.9" y="15.6" width="2.3" height="2.3" fill="#2c6db5"/></svg>
</div>

<!-- TOOLBAR -->
<div id="tb" class="a"></div>
<div id="tools"><svg style="left:0;top:0" width="1917" height="104" viewBox="0 0 1917 104">
 <g class="ic">
  <!-- undo -->
  <path d="M9 77 H28 Q33.5 77 33.5 83.7 Q33.5 90.3 28 90.3 H21 M14 72 L9 77 L14 82"/>
  <!-- redo -->
  <path d="M71 77 H52 Q46.5 77 46.5 83.7 Q46.5 90.3 52 90.3 H59 M66 72 L71 77 L66 82" stroke="#b8b8b8"/>
  <!-- spin -->
  <path d="M101 75.6 Q91 78 91 83 Q91 89.8 104.2 89.8 Q117.5 89.8 117.5 83 Q117.5 78 109 75.6"/>
  <path d="M100 71 L105.5 76 L100 81"/>
  <path d="M153 80 H161 L157 85 Z" fill="#3a3a3a" stroke="none"/>
  <!-- info -->
  <circle cx="187" cy="82" r="13.3"/>
  <path d="M187 80 V88" stroke-width="1.8"/>
  <circle cx="187" cy="76.2" r="1" fill="#3a3a3a" stroke="none"/>
  <path d="M235 80 H243 L239 85 Z" fill="#3a3a3a" stroke="none"/>
  <!-- two cubes -->
  <path d="M263 75.5 L269.5 72 L276 75.5 V82.5 L269.5 86 L263 82.5 Z M263 75.5 L269.5 79 L276 75.5 M269.5 79 V86"/>
  <path d="M273 82 L279.5 78.5 L286 82 V89.5 L279.5 93 L273 89.5 Z M273 82 L279.5 85.5 L286 82 M279.5 85.5 V93"/>
  <!-- dashed cube + cube -->
  <circle cx="307" cy="79" r="7.3" stroke-dasharray="2.2 2"/>
  <path d="M304.5 76.5 L307 79 L309.5 76.5 M307 79 V82" stroke-width="1.2"/>
  <path d="M311 83 L317.5 79.5 L324 83 V90.5 L317.5 94 L311 90.5 Z M311 83 L317.5 86.5 L324 83 M317.5 86.5 V94"/>
  <!-- dashed + eye -->
  <circle cx="345.5" cy="77.5" r="7.5" stroke-dasharray="2.2 2"/>
  <path d="M343 75 L345.5 77.5 L348 75 M345.5 77.5 V80.5" stroke-width="1.2"/>
  <path d="M350 90.5 Q356 84 363 90.5 Q356 97 350 90.5 Z"/>
  <circle cx="356.5" cy="90.5" r="1.7"/>
  <path d="M352 84 L364 95.5"/>
  <!-- paint bucket -->
  <path d="M385 75 L377 84 Q376 85 377 86 L383.5 93 Q384.5 94 385.5 93 L394 85 Z M378.5 73 L388 82.5"/>
  <circle cx="388" cy="82.3" r="1.6"/>
  <path d="M398 87.5 Q400.5 91 398 93 Q395.5 91 398 87.5 Z"/>
  <path d="M393 73 Q396.5 69.5 400 73 Q396.5 76.5 393 73 Z"/>
  <circle cx="396.5" cy="73" r="0.8"/>
  <path d="M410 80 H417 L413.5 84.5 Z" fill="#3a3a3a" stroke="none"/>
  <!-- cube -->
  <path d="M431 75.5 L443.2 68.5 L455.5 75.5 V88.5 L443.2 95.5 L431 88.5 Z M431 75.5 L443.2 82.5 L455.5 75.5 M443.2 82.5 V95.5"/>
  <path d="M464 80 H471 L467.5 84.5 Z" fill="#3a3a3a" stroke="none"/>
  <!-- section box -->
  <path d="M486.5 75.5 L497 69.5 L507.5 75.5 V88.5 L497 94.5 L486.5 88.5 Z M497 69.5 V81.5 M486.5 88 L497 82 L507.5 88 M486.5 83.5 L497 89.5 L507.5 83.5"/>
  <!-- zoom fit -->
  <circle cx="541" cy="81" r="11.2"/><path d="M549 89 L554.5 94.5"/>
  <path d="M536 86 L546 76 M536 82 V86 H540 M542 76 H546 V80"/>
  <!-- zoom in -->
  <circle cx="579" cy="81" r="11.2"/><path d="M587 89 L592.5 94.5 M579 75.5 V86.5 M573.5 81 H584.5"/>
  <!-- zoom out -->
  <circle cx="617" cy="81" r="11.2"/><path d="M625 89 L630.5 94.5 M611.5 81 H622.5"/>
  <!-- zoom select -->
  <circle cx="655" cy="81" r="11.2"/><path d="M663 89 L668.5 94.5 M650 79 V77 Q650 76 651 76 H653 M657 76 H659 Q660 76 660 77 V79 M660 83 V85 Q660 86 659 86 H657 M653 86 H651 Q650 86 650 85 V83"/>
  <!-- select arrow -->
  <rect x="682" y="70.5" width="8" height="8" rx="1"/>
  <path d="M693 81 L706 94 M693 81 V87.5 M693 81 H699.5"/>
  <path d="M714.5 80.5 H721.5 L718 85 Z" fill="#3a3a3a" stroke="none"/>
  <!-- grid -->
  <path d="M746 70 H764 L768 93.5 H742 Z M755 70 V93.5 M744.5 78.5 H765.5 M743.2 86 H766.8"/>
 </g>
 <!-- highlighted pin -->
 <rect x="781" y="63" width="38" height="38" rx="3" fill="#c5c9cf"/>
 <g class="ic">
  <path d="M800 87 Q791 78 791 74.5 Q791 67.5 800 67.5 Q809 67.5 809 74.5 Q809 78 800 87 Z"/>
  <circle cx="800" cy="74.5" r="1.3" fill="#3a3a3a"/>
  <path d="M793 82.5 Q786 84.5 786 88 Q786 94 800 94 Q814 94 814 88 Q814 84.5 807 82.5"/>
  <!-- layers -->
  <path d="M824.5 74.5 L838 68 L852 74.5 L838 81 Z M824.5 80.5 L838 87 L852 80.5 M824.5 86.5 L838 93 L852 86.5"/>
  <!-- 3D gear -->
  <path d="M880.81 73.21 L880.91 72.96 L881.00 72.69 L881.10 72.40 L881.20 72.10 L881.31 71.78 L881.43 71.47 L881.56 71.15 L881.70 70.84 L881.85 70.55 L882.02 70.27 L882.19 70.02 L882.38 69.79 L882.57 69.60 L882.78 69.44 L882.99 69.32 L883.20 69.24 L883.42 69.20 L883.64 69.21 L883.86 69.26 L884.07 69.35 L884.28 69.48 L884.48 69.65 L884.67 69.85 L884.86 70.08 L885.03 70.34 L885.19 70.62 L885.34 70.92 L885.48 71.23 L885.60 71.55 L885.72 71.87 L885.83 72.18 L885.93 72.48 L886.03 72.77 L886.12 73.03 L886.21 73.27 L886.30 73.49 L886.40 73.67 L886.51 73.83 L886.62 73.95 L886.74 74.03 L886.88 74.08 L887.03 74.10 L887.20 74.09 L887.39 74.05 L887.60 73.98 L887.82 73.88 L888.06 73.77 L888.32 73.64 L888.60 73.51 L888.88 73.37 L889.18 73.22 L889.49 73.08 L889.81 72.95 L890.12 72.83 L890.44 72.73 L890.75 72.66 L891.06 72.60 L891.35 72.57 L891.62 72.58 L891.88 72.61 L892.11 72.67 L892.32 72.77 L892.50 72.90 L892.65 73.06 L892.76 73.25 L892.85 73.46 L892.91 73.70 L892.93 73.96 L892.92 74.24 L892.88 74.54 L892.82 74.85 L892.74 75.16 L892.63 75.48 L892.51 75.79 L892.37 76.11 L892.23 76.41 L892.09 76.71 L891.95 76.99 L891.81 77.26 L891.69 77.52 L891.58 77.75 L891.50 77.97 L891.44 78.17 L891.40 78.35 L891.40 78.52 L891.43 78.66 L891.49 78.80 L891.59 78.92 L891.72 79.03 L891.88 79.13 L892.08 79.23 L892.30 79.32 L892.55 79.41 L892.82 79.50 L893.12 79.60 L893.42 79.70 L893.73 79.81 L894.05 79.93 L894.37 80.07 L894.67 80.21 L894.97 80.36 L895.24 80.53 L895.50 80.70 L895.72 80.89 L895.91 81.08 L896.07 81.29 L896.19 81.50 L896.26 81.71 L896.30 81.93 L896.29 82.15 L896.24 82.37 L896.15 82.58 L896.01 82.79 L895.84 82.99 L895.64 83.18 L895.40 83.37 L895.14 83.54 L894.86 83.70 L894.56 83.85 L894.25 83.98 L893.93 84.11 L893.62 84.23 L893.31 84.34 L893.00 84.44 L892.72 84.53 L892.45 84.62 L892.21 84.72 L892.00 84.81 L891.82 84.91 L891.66 85.01 L891.55 85.13 L891.46 85.25 L891.41 85.39 L891.40 85.54 L891.41 85.71 L891.46 85.90 L891.53 86.11 L891.62 86.33 L891.73 86.58 L891.86 86.84 L892.00 87.11 L892.14 87.40 L892.29 87.70 L892.43 88.01 L892.56 88.32 L892.67 88.64 L892.77 88.96 L892.85 89.27 L892.90 89.57 L892.93 89.86 L892.92 90.14 L892.89 90.39 L892.82 90.62 L892.72 90.83 L892.59 91.01 L892.43 91.15 L892.24 91.27 L892.03 91.36 L891.78 91.41 L891.52 91.43 L891.24 91.42 L890.94 91.38 L890.64 91.32 L890.32 91.23 L890.01 91.12 L889.69 91.00 L889.38 90.87 L889.07 90.72 L888.77 90.58 L888.49 90.44 L888.22 90.31 L887.97 90.18 L887.73 90.08 L887.52 90.00 L887.32 89.94 L887.14 89.90 L886.98 89.90 L886.83 89.93 L886.70 90.00 L886.58 90.09 L886.47 90.23 L886.36 90.39 L886.27 90.59 L886.18 90.81 L886.08 91.07 L885.99 91.34 L885.89 91.63 L885.79 91.94 L885.68 92.25 L885.56 92.57 L885.43 92.88 L885.28 93.19 L885.13 93.48 L884.97 93.76 L884.79 94.01 L884.60 94.23 L884.41 94.42 L884.20 94.58 L883.99 94.69 L883.77 94.77 L883.56 94.80 L883.34 94.79 L883.12 94.74 L882.91 94.64 L882.70 94.51 L882.50 94.33 L882.31 94.13 L882.12 93.89 L881.95 93.63 L881.79 93.34 L881.64 93.04 L881.51 92.73 L881.38 92.42 L881.27 92.10 L881.16 91.79 L881.06 91.49 L880.96 91.20 L880.87 90.94 L880.78 90.70 L880.68 90.49 L880.59 90.31 L880.48 90.16 L880.37 90.04 L880.24 89.96 L880.10 89.91 L879.95 89.90 L879.78 89.91 L879.59 89.96 L879.38 90.03 L879.15 90.13 L878.91 90.24 L878.65 90.37 L878.37 90.51 L878.08 90.65 L877.78 90.79 L877.47 90.93 L877.16 91.06 L876.84 91.18 L876.52 91.28 L876.21 91.35 L875.91 91.40 L875.62 91.43 L875.35 91.42 L875.10 91.39 L874.87 91.32 L874.66 91.22 L874.49 91.09 L874.34 90.92 L874.22 90.73 L874.14 90.51 L874.09 90.27 L874.07 90.01 L874.08 89.72 L874.12 89.43 L874.19 89.12 L874.27 88.81 L874.38 88.49 L874.51 88.17 L874.64 87.86 L874.78 87.55" stroke-width="1.5"/>
 </g>
 <text x="871" y="85.6" font-family="Liberation Sans" font-size="12.8" fill="#3a3a3a" letter-spacing="-0.3" stroke="#3a3a3a" stroke-width="0.25">3D</text>
 <text x="124" y="87" font-family="Liberation Sans" font-size="12" fill="#222" stroke="#222" stroke-width="0.25">Spin</text>
 <text x="207" y="87" font-family="Liberation Sans" font-size="12" fill="#222" letter-spacing="0.5" stroke="#222" stroke-width="0.25">Info</text>
 <g fill="#cfcfcf">
  <rect x="80" y="66" width="1" height="33"/><rect x="251" y="66" width="1" height="33"/>
  <rect x="518" y="66" width="1" height="33"/><rect x="731" y="66" width="1" height="33"/>
  <rect x="776" y="66" width="1" height="33"/><rect x="859" y="66" width="1" height="33"/>
 </g>
 <!-- search -->
 <rect x="1608.5" y="68.5" width="305" height="27" rx="3" fill="#fff" stroke="#8a8a8a"/>
 <text x="1615" y="88" font-family="Liberation Sans" font-size="12" fill="#8c8c8c" letter-spacing="0.4" stroke="#8c8c8c" stroke-width="0.25">Search</text>
 <circle cx="1898" cy="81.5" r="5" fill="none" stroke="#333" stroke-width="1.1"/>
 <path d="M1901 85 L1904 88" stroke="#333" stroke-width="1.4" stroke-linecap="round"/>
</svg>
</div>

<!-- MODEL TREE PANEL -->
<div id="mt"><div class="panel" style="left:14px;top:118px;width:392px;height:271px;overflow:hidden">
<svg style="left:8px;top:11px" width="14" height="14" viewBox="0 0 14 14"><path d="M1 5.5 L7 0.8 L13 5.5 V12 Q13 13.2 11.8 13.2 H2.2 Q1 13.2 1 12 Z" fill="none" stroke="#555" stroke-width="1.2" stroke-linejoin="round"/><circle cx="7" cy="4.6" r="1.3" fill="#555"/><path d="M7 6 V8 M4 10.6 V8.6 H10 V10.6" fill="none" stroke="#555" stroke-width="1.1"/><circle cx="4" cy="11" r="1" fill="#555"/><circle cx="10" cy="11" r="1" fill="#555"/></svg>
<div class="t" style="left:27px;top:12px;font-size:13px;color:#222;letter-spacing:-0.6px">MODEL TREE</div>
<div class="a" style="left:196px;top:7px;width:22px;height:22px;border-radius:3px;background:#c9cdd3"></div>
<svg style="left:0;top:0" width="392" height="40" viewBox="15 119 392 40">
<g fill="none" stroke="#3a3a3a" stroke-width="1.1" stroke-linecap="round" stroke-linejoin="round">
 <circle cx="217" cy="130.5" r="1.3"/><circle cx="219" cy="139.5" r="1.3"/><circle cx="223" cy="136" r="1.3"/><circle cx="227" cy="139.5" r="1.3"/><circle cx="219" cy="143" r="1.3"/>
 <path d="M217 132 V141 Q217 143 219 143 M217 136 H222 M224 137 L226 139"/>
 <circle cx="240" cy="130.5" r="1.3"/><circle cx="247" cy="133.5" r="1.3"/><circle cx="247" cy="138" r="1.3"/><circle cx="247" cy="142.5" r="1.3"/>
 <path d="M240 132 V141.5 Q240 142.5 241.5 142.5 H245.5 M240 133.5 H245.5 M240 138 H245.5"/>
 <circle cx="260" cy="130.5" r="1.3"/><path d="M260 132 V141 Q260 142.5 261.5 142.5 M264 133 L268 131 L272 133 L268 135 Z M264 137 L268 135 L272 137 L268 139 Z M264 141 L268 139 L272 141 L268 143 Z"/>
 <circle cx="282.5" cy="130.5" r="1.3"/><path d="M282.5 132 V141 Q282.5 142.5 284 142.5 M287 134 L291 132 L295 134 L291 136 Z M287 138 L291 136 L295 138 L291 140 Z M287 142 L291 140 L295 142 L291 144 Z"/>
</g>
<rect x="301" y="129" width="1" height="17" fill="#d0d0d0"/>
<g fill="none" stroke="#3a3a3a" stroke-width="1.1" stroke-linecap="round" stroke-linejoin="round">
 <path d="M311 134.5 H323 L323.8 142 Q323.8 143.8 322 143.8 H312 Q310.2 143.8 310.2 142 Z M313.5 134.5 V133 Q313.5 130.5 317 130.5 Q320.5 130.5 320.5 133 V134.5"/>
 <path d="M333 134.5 H345 L345.8 142 Q345.8 143.8 344 143.8 H334 Q332.2 143.8 332.2 142 Z M335.5 134.5 V133 Q335.5 130.5 339 130.5 Q342.5 130.5 342.5 133 V134.5"/>
 <path d="M355 134.5 H367 L367.8 142 Q367.8 143.8 366 143.8 H356 Q354.2 143.8 354.2 142 Z M357.5 134.5 V133 Q357.5 130.5 361 130.5 Q364.5 130.5 364.5 133 V134.5"/>
 <rect x="380.7" y="130.8" width="12.6" height="12.6" rx="2.2"/><path d="M380.7 134.5 H393.3"/>
</g>
<path d="M317 136.3 V142 M314.2 139.2 H319.8" stroke="#2fb35a" stroke-width="1.3"/>
<path d="M336.2 139.2 H341.8" stroke="#d9534f" stroke-width="1.3"/>
<path d="M358.2 138 H363.8 M358.2 140.5 H363.8" stroke="#2a8fd0" stroke-width="1.1"/>
</svg>
<div class="a" style="left:0;top:36px;width:380px;height:25px;background:#fff;border-bottom:1px solid #d6d6d6"></div>
<div class="a" style="left:298px;top:36px;width:1px;height:24px;background:#d6d6d6"></div>
<div class="a" style="left:358px;top:36px;width:1px;height:24px;background:#d6d6d6"></div>
<div class="t" style="left:306px;top:43px;font-size:12px;letter-spacing:0.3px;color:#222">Version</div>
<svg style="left:361px;top:40px" width="16" height="16" viewBox="0 0 16 16"><g fill="none" stroke="#3a3a3a" stroke-width="1.1" stroke-linecap="round" stroke-linejoin="round" stroke-width="1.2"><path d="M6.5 9.5 L9.5 6.5"/><path d="M7.5 5 L9.5 3 Q11.2 1.3 13 3 Q14.7 4.8 13 6.5 L11 8.5"/><path d="M8.5 11 L6.5 13 Q4.8 14.7 3 13 Q1.3 11.2 3 9.5 L5 7.5"/></g></svg>
<div class="a" style="left:380px;top:36px;width:11px;height:235px;background:#ededed"></div>
<div class="a" style="left:380px;top:36px;width:11px;height:88px;background:#dcdfe3"></div>
<div class="row" style="top:61px;left:0;background:#dfe2e6"></div>
<svg style="left:5px;top:69px" width="6" height="7" viewBox="0 0 6 7"><path d="M0.5 0.3 L5.5 3.5 L0.5 6.7 Z" fill="#333"/></svg>
<svg style="left:21px;top:65px" width="14" height="14" viewBox="0 0 14 14"><rect x="0.5" y="0.5" width="13" height="13" rx="2" fill="#fff" stroke="#3aa58f" stroke-width="1"/><path d="M7 3 L10 6.5 H8.5 L10.5 9 H3.5 L5.5 6.5 H4 Z M7 9 V11.5" fill="none" stroke="#555" stroke-width="1"/></svg>
<div class="rt" style="left:40px;top:67px;letter-spacing:-0.125px">((A - SITE)) LCY11-TSP-XX-ZZ-M3-A-00001</div>
<div class="row" style="top:83px;left:0;background:#f8f8f8"></div>
<svg style="left:5px;top:91px" width="6" height="7" viewBox="0 0 6 7"><path d="M0.5 0.3 L5.5 3.5 L0.5 6.7 Z" fill="#333"/></svg>
<svg style="left:21px;top:87px" width="14" height="14" viewBox="0 0 14 14"><rect x="0.5" y="0.5" width="13" height="13" rx="2" fill="#fff" stroke="#d39a4f" stroke-width="1"/><path d="M3.2 10.5 V6.2 L7 3.2 L10.8 6.2 V10.5 Z M5 9 H9" fill="none" stroke="#555" stroke-width="1"/></svg>
<div class="rt" style="left:40px;top:89px;letter-spacing:-0.08px">(A - FAC) LCY11-TSP1-FC-ZZ-M3-A-00010</div>
<div class="row" style="top:105px;left:0;background:#ffffff"></div>
<svg style="left:5px;top:113px" width="6" height="7" viewBox="0 0 6 7"><path d="M0.5 0.3 L5.5 3.5 L0.5 6.7 Z" fill="#333"/></svg>
<svg style="left:21px;top:109px" width="14" height="14" viewBox="0 0 14 14"><rect x="0.5" y="0.5" width="13" height="13" rx="2" fill="#fff" stroke="#d39a4f" stroke-width="1"/><path d="M3.2 10.5 V6.2 L7 3.2 L10.8 6.2 V10.5 Z M5 9 H9" fill="none" stroke="#555" stroke-width="1"/></svg>
<div class="rt" style="left:40px;top:111px;letter-spacing:0.0px">(A - INT) LCY11-TSP1-B1-XX-M3-A-00002</div>
<div class="row" style="top:127px;left:0;background:#f8f8f8"></div>
<svg style="left:5px;top:135px" width="6" height="7" viewBox="0 0 6 7"><path d="M0.5 0.3 L5.5 3.5 L0.5 6.7 Z" fill="#333"/></svg>
<svg style="left:21px;top:131px" width="14" height="14" viewBox="0 0 14 14"><rect x="0.5" y="0.5" width="13" height="13" rx="2" fill="#fff" stroke="#d39a4f" stroke-width="1"/><path d="M3.2 10.5 V6.2 L7 3.2 L10.8 6.2 V10.5 Z M5 9 H9" fill="none" stroke="#555" stroke-width="1"/></svg>
<div class="rt" style="left:40px;top:133px;letter-spacing:-0.07px">(A2) LCY11-TSP-DC-XX-M3-A-00009</div>
<div class="row" style="top:149px;left:0;background:#ffffff"></div>
<svg style="left:5px;top:157px" width="6" height="7" viewBox="0 0 6 7"><path d="M0.5 0.3 L5.5 3.5 L0.5 6.7 Z" fill="#333"/></svg>
<svg style="left:21px;top:153px" width="14" height="14" viewBox="0 0 14 14"><rect x="0.5" y="0.5" width="13" height="13" rx="2" fill="#fff" stroke="#d39a4f" stroke-width="1"/><path d="M3.2 10.5 V6.2 L7 3.2 L10.8 6.2 V10.5 Z M5 9 H9" fill="none" stroke="#555" stroke-width="1"/></svg>
<div class="rt" style="left:40px;top:155px;letter-spacing:-0.05px">(A3) LCY11-TSP-GH-XX-M3-A-00005</div>
<div class="row" style="top:171px;left:0;background:#f8f8f8"></div>
<svg style="left:5px;top:179px" width="6" height="7" viewBox="0 0 6 7"><path d="M0.5 0.3 L5.5 3.5 L0.5 6.7 Z" fill="#333"/></svg>
<svg style="left:21px;top:175px" width="14" height="14" viewBox="0 0 14 14"><rect x="0.5" y="0.5" width="13" height="13" rx="2" fill="#fff" stroke="#d39a4f" stroke-width="1"/><path d="M3.2 10.5 V6.2 L7 3.2 L10.8 6.2 V10.5 Z M5 9 H9" fill="none" stroke="#555" stroke-width="1"/></svg>
<div class="rt" style="left:40px;top:177px;letter-spacing:-0.105px">(A5) LCY11-TSP-WS-XX-M3-A-00006</div>
<div class="row" style="top:193px;left:0;background:#ffffff"></div>
<svg style="left:5px;top:201px" width="6" height="7" viewBox="0 0 6 7"><path d="M0.5 0.3 L5.5 3.5 L0.5 6.7 Z" fill="#333"/></svg>
<svg style="left:21px;top:197px" width="14" height="14" viewBox="0 0 14 14"><rect x="0.5" y="0.5" width="13" height="13" rx="2" fill="#fff" stroke="#d39a4f" stroke-width="1"/><path d="M3.2 10.5 V6.2 L7 3.2 L10.8 6.2 V10.5 Z M5 9 H9" fill="none" stroke="#555" stroke-width="1"/></svg>
<div class="rt" style="left:40px;top:199px;letter-spacing:-0.14px">(C2) LCY10-BGL-XX-XX-M3-C-00002</div>
<div class="row" style="top:215px;left:0;background:#f8f8f8"></div>
<svg style="left:5px;top:223px" width="6" height="7" viewBox="0 0 6 7"><path d="M0.5 0.3 L5.5 3.5 L0.5 6.7 Z" fill="#333"/></svg>
<svg style="left:21px;top:219px" width="14" height="14" viewBox="0 0 14 14"><rect x="0.5" y="0.5" width="13" height="13" rx="2" fill="#fff" stroke="#4f8fd6" stroke-width="1"/><path d="M7 2.8 L11 5.8 L9.6 10.6 H4.4 L3 5.8 Z" fill="none" stroke="#555" stroke-width="1"/></svg>
<div class="rt" style="left:40px;top:221px;letter-spacing:-0.06px">(E) LCY11-CDL-B1-ZZ-M3-E-00001</div>
<div class="row" style="top:237px;left:0;background:#ffffff"></div>
<svg style="left:5px;top:245px" width="6" height="7" viewBox="0 0 6 7"><path d="M0.5 0.3 L5.5 3.5 L0.5 6.7 Z" fill="#333"/></svg>
<svg style="left:21px;top:241px" width="14" height="14" viewBox="0 0 14 14"><rect x="0.5" y="0.5" width="13" height="13" rx="2" fill="#fff" stroke="#4f8fd6" stroke-width="1"/><path d="M7 2.8 L11 5.8 L9.6 10.6 H4.4 L3 5.8 Z" fill="none" stroke="#555" stroke-width="1"/></svg>
<div class="rt" style="left:40px;top:243px;letter-spacing:0.11px">(M1) LCY11-CDL-01-ZZ-M3-M-00001</div>
<div class="row" style="top:259px;left:0;background:#f8f8f8"></div>
<svg style="left:5px;top:267px" width="6" height="7" viewBox="0 0 6 7"><path d="M0.5 0.3 L5.5 3.5 L0.5 6.7 Z" fill="#333"/></svg>
<svg style="left:21px;top:263px" width="14" height="14" viewBox="0 0 14 14"><rect x="0.5" y="0.5" width="13" height="13" rx="2" fill="#fff" stroke="#4f8fd6" stroke-width="1"/><path d="M7 2.8 L11 5.8 L9.6 10.6 H4.4 L3 5.8 Z" fill="none" stroke="#555" stroke-width="1"/></svg>
<div class="rt" style="left:40px;top:265px;letter-spacing:0.11px">(M10) LCY11-CDL-01-ZZ-M3-M-00010</div>
</div></div><!--/mt-->

<!-- INFO PANEL -->
<div id="info"><div class="panel" style="left:14px;top:403px;width:392px;height:575px;overflow:hidden">
<svg style="left:0;top:0" width="392" height="70" viewBox="15 404 392 70">
<circle cx="29.8" cy="421.8" r="6.6" fill="none" stroke="#444" stroke-width="1.2"/>
<path d="M29.8 420.3 V425" stroke="#444" stroke-width="1.4"/><circle cx="29.8" cy="418.3" r="0.8" fill="#444"/>
<path d="M179 421 L183 416.5 L187 421 Z M179 423.3 L183 427.8 L187 423.3 Z" fill="#444"/>
<path d="M207 416.5 L202.5 422 L207 427.5" fill="none" stroke="#444" stroke-width="1.2"/>
<path d="M220 419.5 H228 L224 424.5 Z" fill="#333"/>
<path d="M240 416.5 L244.5 422 L240 427.5" fill="none" stroke="#aaa" stroke-width="1.2"/>
<path d="M258 419.5 H266 L262 424.5 Z" fill="#aaa"/>
<rect x="272" y="413" width="1" height="18" fill="#d0d0d0"/>
<rect x="276.5" y="410.8" width="21.5" height="21.5" rx="3" fill="#c9cdd3"/>
<path d="M282 418 L285.5 416 L289 418 V422 L285.5 424 L282 422 Z M282 418 L285.5 420 L289 418 M285.5 420 V424" fill="none" stroke="#444" stroke-width="0.9"/>
<circle cx="289.5" cy="423.5" r="3.8" fill="#7fd04a"/><path d="M288 423.5 L289.3 424.7 L291.2 422.3" fill="none" stroke="#3b7a1c" stroke-width="0.8"/>
<rect x="301" y="413" width="1" height="18" fill="#d0d0d0"/>
<g fill="none" stroke="#3a3a3a" stroke-width="1.1" stroke-linejoin="round">
 <path d="M311 420 H323 L323.8 427.5 Q323.8 429.3 322 429.3 H312 Q310.2 429.3 310.2 427.5 Z M313.5 420 V418.5 Q313.5 416 317 416 Q320.5 416 320.5 418.5 V420"/>
 <path d="M333 420 H345 L345.8 427.5 Q345.8 429.3 344 429.3 H334 Q332.2 429.3 332.2 427.5 Z M335.5 420 V418.5 Q335.5 416 339 416 Q342.5 416 342.5 418.5 V420"/>
 <path d="M355 420 H367 L367.8 427.5 Q367.8 429.3 366 429.3 H356 Q354.2 429.3 354.2 427.5 Z M357.5 420 V418.5 Q357.5 416 361 416 Q364.5 416 364.5 418.5 V420"/>
 <rect x="380.7" y="415.5" width="12.6" height="12.6" rx="2.2"/><path d="M380.7 419.2 H393.3"/>
</g>
<path d="M317 421.8 V427.5 M314.2 424.7 H319.8" stroke="#2fb35a" stroke-width="1.3"/>
<path d="M336.2 424.7 H341.8" stroke="#d9534f" stroke-width="1.3"/>
<path d="M358.2 423.5 H363.8 M358.2 426 H363.8" stroke="#2a8fd0" stroke-width="1.1"/>
<path d="M22 448.5 V455.5 M34.5 448.5 V455.5 M22 450 H34.5 M22 454 H34.5" fill="none" stroke="#444" stroke-width="1.2"/>
</svg>
<div class="t" style="left:27px;top:12px;font-size:13px;color:#222">INFO</div>
<div class="t" style="left:25px;top:45px;font-size:12px;color:#222;letter-spacing:0.07px">(UGS) Duct.-1.35</div>
<div class="a" style="left:0;top:68px;width:80px;height:43px;background:#f1f1f1;border-right:1px solid #d4d4d4"></div>
<div class="a" style="left:0;top:108px;width:80px;height:3px;background:#1d5ea8"></div>
<div class="a" style="left:80px;top:68px;width:167px;height:43px;background:#e4e6e9;border-right:1px solid #d4d4d4;border-top:1px solid #d8d8d8"></div>
<div class="a" style="left:247px;top:68px;width:79px;height:43px;background:#e4e6e9;border-top:1px solid #d8d8d8"></div>
<div class="t" style="left:12px;top:85px;font-size:12px;font-weight:700;color:#1e1e1e;letter-spacing:0.6px">BIM Data</div>
<div class="t" style="left:91px;top:85px;font-size:12px;color:#3a7bc4;letter-spacing:0.25px">IFC Standard Properties</div>
<div class="t" style="left:258px;top:85px;font-size:12px;color:#222;letter-spacing:0.2px">Favorites</div>
<div class="a" style="left:0px;top:111px;width:91px;height:32px;background:#eeeeee;border-right:1px solid #d4d4d4;border-top:1px solid #d4d4d4"></div><div class="t" style="left:0px;width:91px;text-align:center;top:121px;font-size:12px;color:#222;letter-spacing:0.3px;">Material</div>
<div class="a" style="left:91px;top:111px;width:75px;height:32px;background:#eeeeee;border-right:1px solid #d4d4d4;border-top:1px solid #d4d4d4"></div><div class="t" style="left:91px;width:75px;text-align:center;top:121px;font-size:12px;color:#222;letter-spacing:0.3px;">Profile</div>
<div class="a" style="left:166px;top:111px;width:98px;height:32px;background:#eeeeee;border-right:1px solid #d4d4d4;border-top:1px solid #d4d4d4"></div><div class="t" style="left:166px;width:98px;text-align:center;top:121px;font-size:12px;color:#222;letter-spacing:0.3px;">Relations</div>
<div class="a" style="left:264px;top:111px;width:126px;height:32px;background:#eeeeee;border-right:1px solid #d4d4d4;border-top:1px solid #d4d4d4"></div><div class="t" style="left:264px;width:126px;text-align:center;top:121px;font-size:12px;color:#222;letter-spacing:0.3px;">Classification</div>
<div class="a" style="left:0px;top:143px;width:157px;height:33px;background:#ffffff;border-right:1px solid #d4d4d4;border-top:1px solid #d4d4d4"></div><div class="t" style="left:0px;width:157px;text-align:center;top:153px;font-size:12px;color:#222;letter-spacing:0.5px;font-weight:700;">Identification</div>
<div class="a" style="left:0;top:173px;width:157px;height:3px;background:#1d5ea8"></div>
<div class="a" style="left:157px;top:143px;width:107px;height:33px;background:#eeeeee;border-right:1px solid #d4d4d4;border-top:1px solid #d4d4d4"></div><div class="t" style="left:157px;width:107px;text-align:center;top:153px;font-size:12px;color:#222;letter-spacing:0.3px;">Location</div>
<div class="a" style="left:264px;top:143px;width:126px;height:33px;background:#eeeeee;border-right:1px solid #d4d4d4;border-top:1px solid #d4d4d4"></div><div class="t" style="left:264px;width:126px;text-align:center;top:153px;font-size:12px;color:#222;letter-spacing:0.3px;">Quantities</div>
<div class="a" style="left:0;top:176px;width:380px;height:25px;background:#fff;border-bottom:1px solid #d6d6d6;border-top:1px solid #d4d4d4"></div>
<div class="a" style="left:189px;top:176px;width:1px;height:400px;background:#d6d6d6;z-index:2"></div>
<div class="t" style="left:0;width:189px;text-align:center;top:183px;font-size:12px;color:#222;letter-spacing:0.4px">Property</div>
<div class="t" style="left:190px;width:190px;text-align:center;top:183px;font-size:12px;color:#222;letter-spacing:0.3px">Value</div>
<div class="a" style="left:380px;top:176px;width:11px;height:400px;background:#ededed"></div>
<div class="a" style="left:380px;top:201px;width:11px;height:244px;background:#dcdfe3"></div>
<div class="row" style="left:0;top:201px;background:#ffffff"></div>
<svg style="left:4px;top:209px" width="8" height="6" viewBox="0 0 8 6"><path d="M0.3 0.3 H7.5 L3.9 5.7 Z" fill="#333"/></svg>
<div class="rt" style="left:20px;top:207px;font-weight:700;color:#1e1e1e;letter-spacing:0.43px">Model Attributes</div>
<div class="row" style="left:0;top:223px;background:#f8f8f8"></div>
<div class="a" style="left:41px;top:232px;width:10px;height:1.3px;background:#b3b3b3"></div>
<div class="a" style="left:41px;top:236px;width:10px;height:1.3px;background:#b3b3b3"></div>
<div class="rt" style="left:58px;top:229px;letter-spacing:0.522px">Model</div>
<div class="rt" style="left:193px;top:229px;letter-spacing:-0.177px">(UGS) LCY10-PPA-XX-ZZ-M3-N-...</div>
<div class="row" style="left:0;top:245px;background:#ffffff"></div>
<svg style="left:4px;top:253px" width="8" height="6" viewBox="0 0 8 6"><path d="M0.3 0.3 H7.5 L3.9 5.7 Z" fill="#333"/></svg>
<div class="rt" style="left:20px;top:251px;font-weight:700;color:#1e1e1e;letter-spacing:0.35px">Solibri Data</div>
<div class="row" style="left:0;top:267px;background:#f8f8f8"></div>
<div class="a" style="left:41px;top:276px;width:10px;height:1.3px;background:#b3b3b3"></div>
<div class="a" style="left:41px;top:280px;width:10px;height:1.3px;background:#b3b3b3"></div>
<div class="rt" style="left:58px;top:273px;letter-spacing:0.414px">Discipline</div>
<div class="rt" style="left:193px;top:273px;letter-spacing:0.309px">Building Services</div>
<div class="row" style="left:0;top:289px;background:#ffffff"></div>
<div class="a" style="left:41px;top:298px;width:10px;height:1.3px;background:#b3b3b3"></div>
<div class="a" style="left:41px;top:302px;width:10px;height:1.3px;background:#b3b3b3"></div>
<div class="rt" style="left:58px;top:295px;letter-spacing:0.384px">Model Categories</div>
<div class="row" style="left:0;top:311px;background:#f8f8f8"></div>
<svg style="left:4px;top:319px" width="8" height="6" viewBox="0 0 8 6"><path d="M0.3 0.3 H7.5 L3.9 5.7 Z" fill="#333"/></svg>
<div class="rt" style="left:20px;top:317px;font-weight:700;color:#1e1e1e;letter-spacing:0.385px">Information CAD</div>
<div class="row" style="left:0;top:333px;background:#ffffff"></div>
<div class="a" style="left:41px;top:342px;width:10px;height:1.3px;background:#b3b3b3"></div>
<div class="a" style="left:41px;top:346px;width:10px;height:1.3px;background:#b3b3b3"></div>
<div class="rt" style="left:58px;top:339px;letter-spacing:0.32px">Layer</div>
<div class="rt" style="left:193px;top:339px;letter-spacing:0.132px">M-287-M_DUCT</div>
<div class="row" style="left:0;top:355px;background:#f8f8f8"></div>
<div class="a" style="left:41px;top:364px;width:10px;height:1.3px;background:#b3b3b3"></div>
<div class="a" style="left:41px;top:368px;width:10px;height:1.3px;background:#b3b3b3"></div>
<div class="rt" style="left:58px;top:361px;letter-spacing:0.32px">Geometry</div>
<div class="rt" style="left:193px;top:361px;letter-spacing:0.32px">Extrusion</div>
<div class="row" style="left:0;top:377px;background:#ffffff"></div>
<div class="a" style="left:41px;top:386px;width:10px;height:1.3px;background:#b3b3b3"></div>
<div class="a" style="left:41px;top:390px;width:10px;height:1.3px;background:#b3b3b3"></div>
<div class="rt" style="left:58px;top:383px;letter-spacing:0.32px">Application</div>
<div class="rt" style="left:193px;top:383px;letter-spacing:0.253px">Autodesk Revit 2023 (ENG)</div>
<div class="row" style="left:0;top:399px;background:#f8f8f8"></div>
<svg style="left:4px;top:407px" width="8" height="6" viewBox="0 0 8 6"><path d="M0.3 0.3 H7.5 L3.9 5.7 Z" fill="#333"/></svg>
<div class="rt" style="left:20px;top:405px;font-weight:700;color:#1e1e1e;letter-spacing:0.404px">Component Attributes</div>
<div class="row" style="left:0;top:421px;background:#ffffff"></div>
<div class="a" style="left:41px;top:430px;width:10px;height:1.3px;background:#b3b3b3"></div>
<div class="a" style="left:41px;top:434px;width:10px;height:1.3px;background:#b3b3b3"></div>
<div class="rt" style="left:58px;top:427px;letter-spacing:0.32px">Name</div>
<div class="rt" style="left:193px;top:427px;letter-spacing:0.315px">Rectangular Duct:Flanged Sq...</div>
<div class="row" style="left:0;top:443px;background:#f8f8f8"></div>
<div class="a" style="left:41px;top:452px;width:10px;height:1.3px;background:#b3b3b3"></div>
<div class="a" style="left:41px;top:456px;width:10px;height:1.3px;background:#b3b3b3"></div>
<div class="rt" style="left:58px;top:449px;letter-spacing:0.32px">Type</div>
<div class="rt" style="left:193px;top:449px;letter-spacing:0.315px">Rectangular Duct:Flanged Sq...</div>
<div class="row" style="left:0;top:465px;background:#ffffff"></div>
<div class="a" style="left:41px;top:474px;width:10px;height:1.3px;background:#b3b3b3"></div>
<div class="a" style="left:41px;top:478px;width:10px;height:1.3px;background:#b3b3b3"></div>
<div class="rt" style="left:58px;top:471px;letter-spacing:0.32px">Type Name</div>
<div class="rt" style="left:193px;top:471px;letter-spacing:0.315px">Rectangular Duct:Flanged Sq...</div>
<div class="row" style="left:0;top:487px;background:#f8f8f8"></div>
<div class="a" style="left:41px;top:496px;width:10px;height:1.3px;background:#b3b3b3"></div>
<div class="a" style="left:41px;top:500px;width:10px;height:1.3px;background:#b3b3b3"></div>
<div class="rt" style="left:58px;top:493px;letter-spacing:0.32px">Object Type</div>
<div class="rt" style="left:193px;top:493px;letter-spacing:0.315px">Rectangular Duct:Flanged Sq...</div>
<div class="row" style="left:0;top:509px;background:#ffffff"></div>
<div class="a" style="left:41px;top:518px;width:10px;height:1.3px;background:#b3b3b3"></div>
<div class="a" style="left:41px;top:522px;width:10px;height:1.3px;background:#b3b3b3"></div>
<div class="rt" style="left:58px;top:515px;letter-spacing:0.42px">Element Type</div>
<div class="row" style="left:0;top:531px;background:#f8f8f8"></div>
<div class="a" style="left:41px;top:540px;width:10px;height:1.3px;background:#b3b3b3"></div>
<div class="a" style="left:41px;top:544px;width:10px;height:1.3px;background:#b3b3b3"></div>
<div class="rt" style="left:58px;top:537px;letter-spacing:0.543px">Description</div>
<div class="row" style="left:0;top:553px;background:#ffffff"></div>
<div class="a" style="left:41px;top:562px;width:10px;height:1.3px;background:#b3b3b3"></div>
<div class="a" style="left:41px;top:566px;width:10px;height:1.3px;background:#b3b3b3"></div>
<div class="rt" style="left:58px;top:559px;letter-spacing:0.32px">GUID</div>
<div class="rt" style="left:193px;top:559px;letter-spacing:0.152px">3ywU5LwGvBkuxJK4ssNYUB</div>
</div></div><!--/info-->

<!-- STATUS -->
<div class="t" style="left:21px;top:989px;font-size:12px;letter-spacing:0.4px;color:#1e1e1e">Show component properties by clicking.</div>
<div class="t" style="left:1490px;top:989px;font-size:12px;letter-spacing:0.05px;color:#1e1e1e">Role: COBie - Uniclass 1.4</div>
<div class="t" style="left:1682px;top:989px;font-size:12px;letter-spacing:0.2px;color:#1e1e1e">Selected: 0</div>
</body></html>
